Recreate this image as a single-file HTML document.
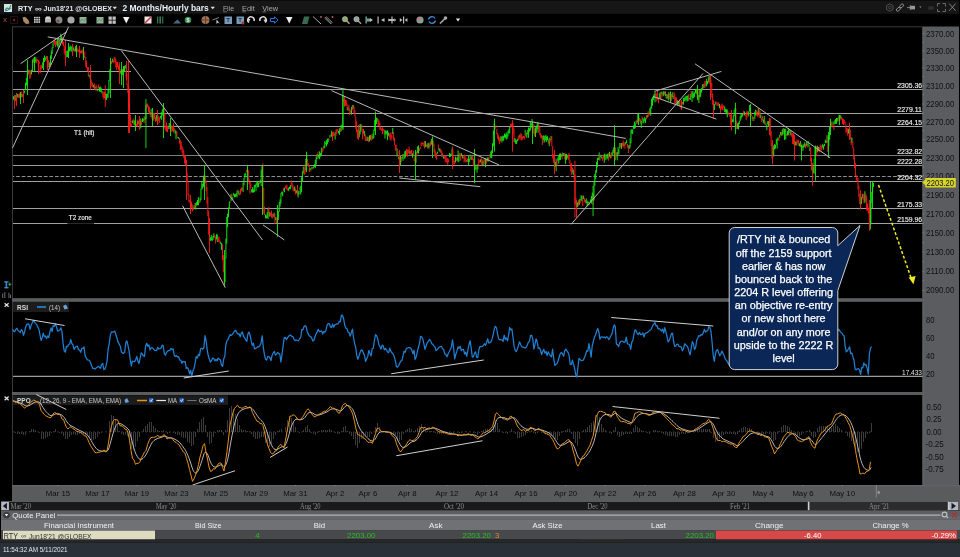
<!DOCTYPE html><html><head><meta charset="utf-8"><style>html,body{margin:0;padding:0;background:#000;width:960px;height:557px;overflow:hidden;position:relative}</style></head><body><svg width="960" height="557" viewBox="0 0 960 557" style="position:absolute;left:0;top:0;display:block;will-change:transform">
<rect x="0" y="0" width="960" height="557" fill="#000"/>
<rect x="0" y="0.5" width="959" height="13.3" fill="#161616"/>
<rect x="4" y="4" width="8" height="8" fill="#d8e0f0"/>
<polyline points="5,10 7,8 9,9 11,5" fill="none" stroke="#30a030" stroke-width="1.2"/>
<polyline points="5,11 8,10 11,8" fill="none" stroke="#3070d0" stroke-width="1"/>
<text x="18.1" y="10.88" font-family="Liberation Sans" font-size="8" fill="#e8eef8" text-anchor="start" font-weight="bold" textLength="14.4" lengthAdjust="spacingAndGlyphs">RTY</text>
<text x="35" y="10.74" font-family="Liberation Sans" font-size="6.5" fill="#e0e4ea" text-anchor="start" font-weight="bold" textLength="6.5" lengthAdjust="spacingAndGlyphs">∞</text>
<text x="43.5" y="10.78" font-family="Liberation Sans" font-size="6.6" fill="#e0e4ea" text-anchor="start" font-weight="bold" textLength="68.5" lengthAdjust="spacingAndGlyphs">Jun18'21 @GLOBEX</text>
<path d="M112.5,6.8 L117,6.8 L114.75,9.3 Z" fill="#e0e0e0"/>
<text x="122.5" y="11.06" font-family="Liberation Sans" font-size="8.5" fill="#e8eef8" text-anchor="start" font-weight="bold" textLength="86.3" lengthAdjust="spacingAndGlyphs">2 Months/Hourly bars</text>
<path d="M210.5,6.8 L215,6.8 L212.75,9.3 Z" fill="#e0e0e0"/>
<text x="222.9" y="10.96" font-family="Liberation Sans" font-size="7.4" fill="#a8a8a8" text-anchor="start" font-weight="normal" textLength="11.1" lengthAdjust="spacingAndGlyphs">File</text>
<text x="242" y="10.96" font-family="Liberation Sans" font-size="7.4" fill="#a8a8a8" text-anchor="start" font-weight="normal" textLength="12.8" lengthAdjust="spacingAndGlyphs">Edit</text>
<text x="262.3" y="10.96" font-family="Liberation Sans" font-size="7.4" fill="#a8a8a8" text-anchor="start" font-weight="normal" textLength="15.9" lengthAdjust="spacingAndGlyphs">View</text>
<line x1="223.2" y1="11.8" x2="226.79999999999998" y2="11.8" stroke="#a0a0a0" stroke-width="0.6"/>
<line x1="242.3" y1="11.8" x2="245.9" y2="11.8" stroke="#a0a0a0" stroke-width="0.6"/>
<line x1="262.6" y1="11.8" x2="266.20000000000005" y2="11.8" stroke="#a0a0a0" stroke-width="0.6"/>
<path d="M889.8,3.8 L893,5.6 L893,9.4 L889.8,11.2 L886.6,9.4 L886.6,5.6 Z" fill="none" stroke="#505050" stroke-width="1"/>
<circle cx="889.8" cy="7.5" r="1.3" fill="none" stroke="#505050" stroke-width="0.8"/>
<rect x="-2.2" y="-1.3" width="4.4" height="2.6" rx="1.3" transform="translate(898.3,9.3) rotate(-45)" fill="none" stroke="#9a9a9a" stroke-width="0.9"/>
<rect x="-2.2" y="-1.3" width="4.4" height="2.6" rx="1.3" transform="translate(901.6,5.9) rotate(-45)" fill="none" stroke="#9a9a9a" stroke-width="0.9"/>
<line x1="907" y1="7.6" x2="910.5" y2="7.6" stroke="#8a8a8a" stroke-width="0.9"/>
<rect x="910.5" y="5.8" width="4.5" height="3.6" fill="#9a9a9a"/>
<rect x="909.8" y="5.3" width="1" height="4.6" fill="#9a9a9a"/>
<path d="M919.2,6.6 L921.6,6.6 L920.4,8.1 Z" fill="#888"/>
<rect x="928.2" y="6.3" width="5.6" height="3.2" fill="#2e2e2e"/>
<path d="M937.5,6.5 V3.5 H940 M942.5,3.5 H945.5 V6.5 M945.5,9 V11.5 H942.5 M940,11.5 H937.5 V9" fill="none" stroke="#6a6a6a" stroke-width="1"/>
<path d="M949.2,3.6 L955.6,10.8 M955.6,3.6 L949.2,10.8" stroke="#8a8a8a" stroke-width="0.9"/>
<path d="M3.5,18 L6.5,22 M6.5,18 L3.5,22" stroke="#7a3838" stroke-width="1"/>
<rect x="10.5" y="16.5" width="7" height="7" fill="none" stroke="#5a2020" stroke-width="0.9" stroke-dasharray="1,1"/>
<circle cx="14" cy="20" r="1.2" fill="#6a2a2a"/>
<path d="M22.5,17.5 L25,16.8 L28.5,20 L29.5,23.5 L26,24 L23.5,21.5 Z" fill="#a88a62"/>
<rect x="34.0" y="16.8" width="1.7" height="1.7" fill="#c8c8c8"/>
<rect x="34.0" y="19.0" width="1.7" height="1.7" fill="#c8c8c8"/>
<rect x="34.0" y="21.200000000000003" width="1.7" height="1.7" fill="#c8c8c8"/>
<rect x="36.2" y="16.8" width="1.7" height="1.7" fill="#c8c8c8"/>
<rect x="36.2" y="19.0" width="1.7" height="1.7" fill="#c8c8c8"/>
<rect x="36.2" y="21.200000000000003" width="1.7" height="1.7" fill="#c8c8c8"/>
<rect x="38.4" y="16.8" width="1.7" height="1.7" fill="#c8c8c8"/>
<rect x="38.4" y="19.0" width="1.7" height="1.7" fill="#c8c8c8"/>
<rect x="38.4" y="21.200000000000003" width="1.7" height="1.7" fill="#c8c8c8"/>
<rect x="45" y="17.5" width="6" height="5" fill="#b8b8b8"/>
<rect x="46" y="16.5" width="4" height="2" fill="#ddd"/>
<circle cx="59" cy="20" r="3.5" fill="#8a8a8a"/>
<circle cx="58" cy="21" r="1.6" fill="#7a5040"/>
<circle cx="71" cy="20" r="3.6" fill="#a8a8a8"/>
<rect x="79.5" y="17" width="7" height="6.5" fill="#9aa8a0"/>
<polyline points="80,22 82,19 84,21 86,18" stroke="#40b040" fill="none" stroke-width="1"/>
<rect x="96.5" y="17" width="7" height="6.5" fill="#9aa8a0"/>
<polyline points="97,22 99,19 101,21 103,18" stroke="#40b040" fill="none" stroke-width="1"/>
<rect x="108.5" y="16.5" width="3.3" height="3.3" fill="#c0c0c0"/>
<rect x="108.5" y="20.5" width="3.3" height="3.3" fill="#c0c0c0"/>
<rect x="112.5" y="16.5" width="3.3" height="3.3" fill="#c0c0c0"/>
<rect x="112.5" y="20.5" width="3.3" height="3.3" fill="#c0c0c0"/>
<path d="M123,17 L129.5,17 L126.25,23.5 Z" fill="#f0f0f0"/>
<rect x="144.5" y="16.5" width="7" height="7" fill="#e8e8e8"/>
<path d="M145,23 L151,17" stroke="#d03030" stroke-width="1.4"/>
<rect x="157" y="16.5" width="1.3" height="7" fill="#2a7a48"/>
<rect x="159.5" y="16.5" width="1.3" height="7" fill="#4a9a68"/>
<rect x="162" y="16.5" width="1.3" height="7" fill="#2a6a48"/>
<path d="M173,23.5 L177.5,19.5 L181,23.5 Z" fill="#4a6888"/>
<circle cx="188" cy="20" r="3.3" fill="#3a8a58"/>
<text x="188" y="22.18" font-family="Liberation Sans" font-size="5.5" fill="#e0f0e0" text-anchor="middle" font-weight="bold">$</text>
<circle cx="205.5" cy="20" r="4" fill="#a07050"/>
<line x1="201.5" y1="20" x2="209.5" y2="20" stroke="#5a3a2a" stroke-width="0.8"/>
<line x1="205.5" y1="16" x2="205.5" y2="24" stroke="#5a3a2a" stroke-width="0.8"/>
<path d="M212.5,20 L219,17.5" stroke="#aaa" stroke-width="0.8"/>
<path d="M216.5,19.5 L216.5,24 L218,22.5 L220,24 Z" fill="#ddd"/>
<rect x="224.5" y="16.5" width="7.5" height="7.5" fill="#7898b8"/>
<text x="228.2" y="22.46" font-family="Liberation Sans" font-size="6" fill="#203040" text-anchor="middle" font-weight="bold">T</text>
<rect x="236.5" y="16.5" width="7.5" height="7.5" fill="#7898b8"/>
<text x="240.2" y="22.46" font-family="Liberation Sans" font-size="6" fill="#203040" text-anchor="middle" font-weight="bold">T</text>
<circle cx="243" cy="23" r="1.5" fill="#c03030"/>
<path d="M249,22.5 A3.2,3.2 0 1 1 254,21" fill="none" stroke="#ddd" stroke-width="1.5"/>
<path d="M247.5,19 L250.5,19 L249,21.5 Z" fill="#ddd"/>
<path d="M265,22.5 A3.2,3.2 0 1 0 260,21" fill="none" stroke="#ddd" stroke-width="1.5"/>
<path d="M263.5,19.5 L266.5,19.5 L265,22 Z" fill="#ddd"/>
<path d="M270.5,18.5 H274.5 V16.8 L278,20 L274.5,23.2 V21.5 H270.5 Z" fill="none" stroke="#2a78d8" stroke-width="1"/>
<path d="M286,17 L292.5,17 L289.25,23.5 Z" fill="#f0f0f0"/>
<path d="M302,24 L304,16.5 L309.5,16.5 L307.5,24 Z" fill="#3a6a50"/>
<path d="M313,16.5 L321,24" stroke="#aaa" stroke-width="1"/>
<circle cx="321" cy="17" r="0.9" fill="#d06060"/>
<path d="M324.5,18 L331,24 M326,16.5 L332.5,22.5 M325,17 L332,23.5" stroke="#8a8a8a" stroke-width="0.9"/>
<circle cx="332.5" cy="17" r="0.9" fill="#d06060"/>
<circle cx="345" cy="19.2" r="2.6" fill="#90a860" stroke="#ccc" stroke-width="0.6"/>
<line x1="346.8" y1="21" x2="349.5" y2="23.8" stroke="#c0a080" stroke-width="1.4"/>
<circle cx="356.5" cy="19.2" r="2.6" fill="#90a0a0" stroke="#ccc" stroke-width="0.6"/>
<line x1="358.3" y1="21" x2="361" y2="23.8" stroke="#c0a080" stroke-width="1.4"/>
<rect x="365.5" y="16.5" width="1.3" height="7" fill="#8aa"/>
<rect x="367" y="18.5" width="3" height="3" fill="#6a8"/>
<path d="M370,18 L373,20 L370,22 Z" fill="#bbb"/>
<rect x="377.5" y="16.5" width="1.2" height="7" fill="#bbb"/>
<path d="M384.5,18 L381,20 L384.5,22 Z" fill="#bbb"/>
<rect x="391.4" y="16.5" width="1.2" height="7" fill="#bbb"/>
<path d="M389,18 L388,20 L389,22 Z M394.5,18 L396,20 L394.5,22 Z" fill="#bbb"/>
<rect x="389" y="19" width="5.5" height="2" fill="#bbb"/>
<rect x="403" y="16.5" width="1.2" height="7" fill="#bbb"/>
<path d="M399.8,18 L402.5,20 L399.8,22 Z M407.4,18 L404.7,20 L407.4,22 Z" fill="#bbb"/>
<circle cx="420" cy="20" r="3.6" fill="#8a9aa0"/>
<circle cx="419" cy="19" r="1.6" fill="#d07070"/>
<circle cx="421.5" cy="21.3" r="1.4" fill="#70b070"/>
<path d="M428.5,19.5 A3.5,3.5 0 0 1 435,18.5 M435.5,20.5 A3.5,3.5 0 0 1 429,21.5" fill="none" stroke="#3a8ad8" stroke-width="1.4"/>
<path d="M440,23.5 L445,18.5" stroke="#aaa" stroke-width="1.6"/>
<circle cx="445.5" cy="18" r="1.8" fill="#aaa"/>
<path d="M455.8,18.5 L460.2,18.5 L458,21.5 Z" fill="#e8e8e8"/>
<rect x="922.5" y="26.5" width="36.5" height="459" fill="#5b5c5f"/>
<line x1="923" y1="27" x2="923" y2="485" stroke="#656668" stroke-width="1"/>
<line x1="12" y1="26.8" x2="922.5" y2="26.8" stroke="#3a3a3a" stroke-width="1"/>
<line x1="12.5" y1="26.5" x2="12.5" y2="485.5" stroke="#3a3a3a" stroke-width="1"/>
<rect x="12" y="298" width="911" height="4" fill="#48494b"/>
<rect x="12" y="298.8" width="911" height="2.4" fill="#5c5d60"/>
<rect x="12" y="392" width="911" height="3" fill="#5b5c5f"/>
<line x1="13" y1="89.5" x2="922.5" y2="89.5" stroke="#a0a0a0" stroke-width="1"/>
<line x1="13" y1="113.5" x2="922.5" y2="113.5" stroke="#a0a0a0" stroke-width="1"/>
<line x1="13" y1="126.5" x2="922.5" y2="126.5" stroke="#a0a0a0" stroke-width="1"/>
<line x1="13" y1="155.5" x2="922.5" y2="155.5" stroke="#7c7c7c" stroke-width="1"/>
<line x1="13" y1="165.5" x2="922.5" y2="165.5" stroke="#9a9a9a" stroke-width="1"/>
<line x1="13" y1="181.5" x2="922.5" y2="181.5" stroke="#a0a0a0" stroke-width="1"/>
<line x1="13" y1="208.5" x2="922.5" y2="208.5" stroke="#a0a0a0" stroke-width="1"/>
<line x1="13" y1="223.5" x2="922.5" y2="223.5" stroke="#a0a0a0" stroke-width="1"/>
<line x1="13" y1="71.5" x2="131" y2="71.5" stroke="#a0a0a0" stroke-width="1"/>
<line x1="13" y1="176.5" x2="922.5" y2="176.5" stroke="#909090" stroke-width="1" stroke-dasharray="3.7,1.85" stroke-dashoffset="2.4"/>
<g><rect x="13.00" y="96.2" width="0.95" height="3.5" fill="#10f010"/><rect x="13.86" y="95.7" width="0.95" height="3.4" fill="#ff1a1a"/><rect x="14.72" y="95.1" width="0.95" height="5.9" fill="#10f010"/><rect x="15.58" y="96.8" width="0.95" height="4.6" fill="#ff1a1a"/><rect x="16.44" y="93.6" width="0.95" height="3.0" fill="#10f010"/><rect x="17.30" y="94.0" width="0.95" height="3.8" fill="#10f010"/><rect x="18.16" y="94.4" width="0.95" height="2.9" fill="#ff1a1a"/><rect x="19.02" y="93.5" width="0.95" height="4.4" fill="#ff1a1a"/><rect x="19.88" y="92.5" width="0.95" height="7.1" fill="#10f010"/><rect x="20.74" y="91.5" width="0.95" height="5.7" fill="#ff1a1a"/><rect x="21.60" y="93.8" width="0.95" height="3.4" fill="#10f010"/><rect x="22.46" y="94.2" width="0.95" height="2.6" fill="#ff1a1a"/><rect x="23.32" y="91.9" width="0.95" height="2.0" fill="#10f010"/><rect x="24.18" y="90.6" width="0.95" height="2.2" fill="#10f010"/><rect x="25.04" y="82.7" width="0.95" height="7.5" fill="#10f010"/><rect x="25.90" y="78.0" width="0.95" height="7.6" fill="#10f010"/><rect x="26.76" y="73.2" width="0.95" height="6.0" fill="#10f010"/><rect x="27.62" y="69.7" width="0.95" height="4.8" fill="#10f010"/><rect x="28.48" y="69.8" width="0.95" height="3.2" fill="#ff1a1a"/><rect x="29.34" y="70.0" width="0.95" height="8.9" fill="#ff1a1a"/><rect x="30.20" y="70.9" width="0.95" height="6.6" fill="#ff1a1a"/><rect x="31.06" y="69.8" width="0.95" height="4.7" fill="#10f010"/><rect x="31.92" y="59.6" width="0.95" height="11.8" fill="#10f010"/><rect x="32.78" y="58.2" width="0.95" height="4.3" fill="#10f010"/><rect x="33.64" y="57.5" width="0.95" height="8.6" fill="#ff1a1a"/><rect x="34.50" y="59.4" width="0.95" height="3.8" fill="#10f010"/><rect x="35.36" y="56.9" width="0.95" height="4.7" fill="#10f010"/><rect x="36.22" y="58.9" width="0.95" height="4.3" fill="#ff1a1a"/><rect x="37.08" y="59.4" width="0.95" height="1.6" fill="#ff1a1a"/><rect x="37.94" y="61.0" width="0.95" height="6.1" fill="#ff1a1a"/><rect x="38.80" y="61.5" width="0.95" height="2.4" fill="#ff1a1a"/><rect x="39.66" y="65.0" width="0.95" height="7.9" fill="#ff1a1a"/><rect x="40.52" y="66.1" width="0.95" height="4.0" fill="#ff1a1a"/><rect x="41.38" y="64.6" width="0.95" height="4.3" fill="#ff1a1a"/><rect x="42.24" y="62.2" width="0.95" height="5.9" fill="#10f010"/><rect x="43.10" y="60.6" width="0.95" height="4.6" fill="#ff1a1a"/><rect x="43.96" y="55.6" width="0.95" height="6.5" fill="#10f010"/><rect x="44.82" y="57.7" width="0.95" height="2.8" fill="#10f010"/><rect x="45.68" y="56.3" width="0.95" height="2.6" fill="#10f010"/><rect x="46.54" y="56.2" width="0.95" height="6.2" fill="#ff1a1a"/><rect x="47.40" y="60.6" width="0.95" height="8.3" fill="#ff1a1a"/><rect x="48.26" y="60.0" width="0.95" height="7.0" fill="#ff1a1a"/><rect x="49.12" y="62.4" width="0.95" height="4.8" fill="#10f010"/><rect x="49.98" y="55.4" width="0.95" height="9.5" fill="#10f010"/><rect x="50.84" y="50.5" width="0.95" height="8.5" fill="#10f010"/><rect x="51.70" y="47.3" width="0.95" height="6.6" fill="#10f010"/><rect x="52.56" y="42.2" width="0.95" height="5.8" fill="#10f010"/><rect x="53.42" y="39.8" width="0.95" height="3.2" fill="#ff1a1a"/><rect x="54.28" y="39.5" width="0.95" height="5.4" fill="#ff1a1a"/><rect x="55.14" y="40.9" width="0.95" height="6.3" fill="#ff1a1a"/><rect x="56.00" y="41.0" width="0.95" height="3.9" fill="#ff1a1a"/><rect x="56.86" y="38.2" width="0.95" height="8.3" fill="#10f010"/><rect x="57.72" y="38.7" width="0.95" height="9.2" fill="#10f010"/><rect x="58.58" y="40.0" width="0.95" height="4.0" fill="#ff1a1a"/><rect x="59.44" y="39.8" width="0.95" height="5.9" fill="#10f010"/><rect x="60.30" y="33.8" width="0.95" height="6.9" fill="#10f010"/><rect x="61.16" y="36.2" width="0.95" height="6.4" fill="#10f010"/><rect x="62.02" y="37.3" width="0.95" height="7.2" fill="#ff1a1a"/><rect x="62.88" y="41.5" width="0.95" height="4.5" fill="#ff1a1a"/><rect x="63.74" y="45.5" width="0.95" height="8.3" fill="#ff1a1a"/><rect x="64.60" y="48.6" width="0.95" height="6.9" fill="#ff1a1a"/><rect x="65.46" y="54.4" width="0.95" height="3.2" fill="#ff1a1a"/><rect x="66.32" y="50.7" width="0.95" height="6.2" fill="#10f010"/><rect x="67.18" y="50.6" width="0.95" height="6.4" fill="#10f010"/><rect x="68.04" y="45.3" width="0.95" height="6.3" fill="#ff1a1a"/><rect x="68.90" y="46.9" width="0.95" height="4.6" fill="#10f010"/><rect x="69.76" y="45.5" width="0.95" height="5.1" fill="#10f010"/><rect x="70.62" y="46.8" width="0.95" height="4.3" fill="#10f010"/><rect x="71.48" y="46.1" width="0.95" height="5.9" fill="#10f010"/><rect x="72.34" y="45.6" width="0.95" height="1.7" fill="#ff1a1a"/><rect x="73.20" y="47.5" width="0.95" height="3.3" fill="#10f010"/><rect x="74.06" y="49.0" width="0.95" height="2.6" fill="#ff1a1a"/><rect x="74.92" y="46.2" width="0.95" height="5.2" fill="#10f010"/><rect x="75.78" y="48.1" width="0.95" height="4.1" fill="#10f010"/><rect x="76.64" y="47.5" width="0.95" height="4.0" fill="#ff1a1a"/><rect x="77.50" y="49.7" width="0.95" height="2.4" fill="#ff1a1a"/><rect x="78.36" y="49.4" width="0.95" height="2.7" fill="#ff1a1a"/><rect x="79.22" y="47.8" width="0.95" height="3.9" fill="#ff1a1a"/><rect x="80.08" y="50.8" width="0.95" height="2.9" fill="#ff1a1a"/><rect x="80.94" y="49.9" width="0.95" height="3.4" fill="#ff1a1a"/><rect x="81.80" y="50.2" width="0.95" height="3.1" fill="#ff1a1a"/><rect x="82.66" y="48.3" width="0.95" height="7.2" fill="#ff1a1a"/><rect x="83.52" y="56.1" width="0.95" height="1.8" fill="#10f010"/><rect x="84.38" y="51.6" width="0.95" height="5.5" fill="#ff1a1a"/><rect x="85.24" y="57.0" width="0.95" height="10.0" fill="#ff1a1a"/><rect x="86.10" y="60.7" width="0.95" height="7.5" fill="#ff1a1a"/><rect x="86.96" y="67.2" width="0.95" height="3.9" fill="#ff1a1a"/><rect x="87.82" y="66.8" width="0.95" height="9.0" fill="#ff1a1a"/><rect x="88.68" y="74.8" width="0.95" height="2.3" fill="#10f010"/><rect x="89.54" y="76.2" width="0.95" height="2.9" fill="#ff1a1a"/><rect x="90.40" y="79.3" width="0.95" height="3.5" fill="#10f010"/><rect x="91.26" y="81.4" width="0.95" height="4.8" fill="#ff1a1a"/><rect x="92.12" y="82.7" width="0.95" height="4.6" fill="#ff1a1a"/><rect x="92.98" y="84.9" width="0.95" height="2.6" fill="#10f010"/><rect x="93.84" y="83.2" width="0.95" height="6.3" fill="#ff1a1a"/><rect x="94.70" y="86.8" width="0.95" height="1.7" fill="#10f010"/><rect x="95.56" y="84.4" width="0.95" height="6.8" fill="#ff1a1a"/><rect x="96.42" y="85.8" width="0.95" height="2.7" fill="#ff1a1a"/><rect x="97.28" y="88.8" width="0.95" height="2.5" fill="#10f010"/><rect x="98.14" y="84.6" width="0.95" height="4.0" fill="#ff1a1a"/><rect x="99.00" y="87.2" width="0.95" height="4.3" fill="#10f010"/><rect x="99.86" y="86.5" width="0.95" height="5.3" fill="#10f010"/><rect x="100.72" y="87.7" width="0.95" height="4.4" fill="#10f010"/><rect x="101.58" y="91.0" width="0.95" height="2.7" fill="#10f010"/><rect x="102.44" y="93.1" width="0.95" height="4.0" fill="#ff1a1a"/><rect x="103.30" y="91.4" width="0.95" height="7.9" fill="#ff1a1a"/><rect x="104.16" y="91.5" width="0.95" height="6.6" fill="#ff1a1a"/><rect x="105.02" y="93.8" width="0.95" height="5.6" fill="#10f010"/><rect x="105.88" y="93.8" width="0.95" height="6.3" fill="#10f010"/><rect x="106.74" y="93.6" width="0.95" height="4.1" fill="#10f010"/><rect x="107.60" y="88.6" width="0.95" height="9.3" fill="#10f010"/><rect x="108.46" y="79.9" width="0.95" height="13.4" fill="#10f010"/><rect x="109.32" y="69.4" width="0.95" height="11.4" fill="#10f010"/><rect x="110.18" y="60.9" width="0.95" height="10.2" fill="#10f010"/><rect x="111.04" y="61.2" width="0.95" height="3.0" fill="#ff1a1a"/><rect x="111.90" y="58.7" width="0.95" height="3.3" fill="#10f010"/><rect x="112.76" y="60.0" width="0.95" height="3.2" fill="#ff1a1a"/><rect x="113.62" y="56.7" width="0.95" height="5.6" fill="#ff1a1a"/><rect x="114.48" y="57.2" width="0.95" height="5.7" fill="#ff1a1a"/><rect x="115.34" y="58.5" width="0.95" height="8.9" fill="#ff1a1a"/><rect x="116.20" y="61.7" width="0.95" height="8.4" fill="#ff1a1a"/><rect x="117.06" y="62.0" width="0.95" height="5.2" fill="#ff1a1a"/><rect x="117.92" y="65.7" width="0.95" height="4.1" fill="#ff1a1a"/><rect x="118.78" y="62.2" width="0.95" height="8.5" fill="#ff1a1a"/><rect x="119.64" y="69.1" width="0.95" height="4.4" fill="#ff1a1a"/><rect x="120.50" y="71.2" width="0.95" height="2.7" fill="#10f010"/><rect x="121.36" y="69.2" width="0.95" height="8.3" fill="#ff1a1a"/><rect x="122.22" y="69.1" width="0.95" height="6.0" fill="#10f010"/><rect x="123.08" y="67.3" width="0.95" height="5.4" fill="#10f010"/><rect x="123.94" y="66.1" width="0.95" height="5.9" fill="#10f010"/><rect x="124.80" y="65.0" width="0.95" height="3.3" fill="#10f010"/><rect x="125.66" y="68.0" width="0.95" height="10.0" fill="#ff1a1a"/><rect x="126.52" y="73.7" width="0.95" height="11.5" fill="#ff1a1a"/><rect x="127.38" y="83.9" width="0.95" height="9.0" fill="#ff1a1a"/><rect x="128.24" y="86.1" width="0.95" height="20.9" fill="#ff1a1a"/><rect x="129.10" y="102.5" width="0.95" height="16.5" fill="#ff1a1a"/><rect x="129.96" y="115.0" width="0.95" height="11.9" fill="#ff1a1a"/><rect x="130.82" y="123.8" width="0.95" height="2.7" fill="#ff1a1a"/><rect x="131.68" y="120.7" width="0.95" height="2.5" fill="#10f010"/><rect x="132.54" y="119.8" width="0.95" height="3.4" fill="#10f010"/><rect x="133.40" y="118.3" width="0.95" height="6.5" fill="#ff1a1a"/><rect x="134.26" y="120.5" width="0.95" height="4.8" fill="#10f010"/><rect x="135.12" y="121.2" width="0.95" height="5.2" fill="#ff1a1a"/><rect x="135.98" y="123.7" width="0.95" height="2.3" fill="#ff1a1a"/><rect x="136.84" y="119.6" width="0.95" height="7.1" fill="#ff1a1a"/><rect x="137.70" y="121.1" width="0.95" height="3.0" fill="#10f010"/><rect x="138.56" y="120.1" width="0.95" height="4.7" fill="#ff1a1a"/><rect x="139.42" y="122.6" width="0.95" height="3.6" fill="#ff1a1a"/><rect x="140.28" y="118.5" width="0.95" height="10.0" fill="#10f010"/><rect x="141.14" y="120.3" width="0.95" height="4.8" fill="#ff1a1a"/><rect x="142.00" y="118.2" width="0.95" height="3.8" fill="#10f010"/><rect x="142.86" y="118.6" width="0.95" height="2.8" fill="#10f010"/><rect x="143.72" y="115.9" width="0.95" height="7.2" fill="#ff1a1a"/><rect x="144.58" y="117.3" width="0.95" height="2.9" fill="#10f010"/><rect x="145.44" y="105.1" width="0.95" height="14.0" fill="#10f010"/><rect x="146.30" y="104.0" width="0.95" height="4.9" fill="#ff1a1a"/><rect x="147.16" y="103.5" width="0.95" height="3.5" fill="#ff1a1a"/><rect x="148.02" y="105.6" width="0.95" height="6.7" fill="#ff1a1a"/><rect x="148.88" y="106.8" width="0.95" height="7.0" fill="#ff1a1a"/><rect x="149.74" y="112.0" width="0.95" height="2.9" fill="#ff1a1a"/><rect x="150.60" y="108.8" width="0.95" height="8.3" fill="#10f010"/><rect x="151.46" y="111.6" width="0.95" height="7.0" fill="#ff1a1a"/><rect x="152.32" y="113.6" width="0.95" height="6.6" fill="#10f010"/><rect x="153.18" y="112.6" width="0.95" height="8.1" fill="#ff1a1a"/><rect x="154.04" y="113.3" width="0.95" height="5.3" fill="#ff1a1a"/><rect x="154.90" y="117.3" width="0.95" height="4.7" fill="#ff1a1a"/><rect x="155.76" y="115.0" width="0.95" height="5.9" fill="#10f010"/><rect x="156.62" y="115.2" width="0.95" height="3.1" fill="#10f010"/><rect x="157.48" y="117.6" width="0.95" height="6.4" fill="#ff1a1a"/><rect x="158.34" y="115.8" width="0.95" height="4.7" fill="#ff1a1a"/><rect x="159.20" y="117.2" width="0.95" height="5.5" fill="#ff1a1a"/><rect x="160.06" y="116.1" width="0.95" height="2.2" fill="#10f010"/><rect x="160.92" y="112.2" width="0.95" height="7.6" fill="#10f010"/><rect x="161.78" y="109.6" width="0.95" height="6.2" fill="#10f010"/><rect x="162.64" y="108.5" width="0.95" height="3.8" fill="#10f010"/><rect x="163.50" y="109.1" width="0.95" height="12.6" fill="#ff1a1a"/><rect x="164.36" y="113.7" width="0.95" height="15.0" fill="#ff1a1a"/><rect x="165.22" y="125.7" width="0.95" height="5.0" fill="#ff1a1a"/><rect x="166.08" y="122.4" width="0.95" height="9.5" fill="#ff1a1a"/><rect x="166.94" y="125.6" width="0.95" height="6.5" fill="#ff1a1a"/><rect x="167.80" y="126.7" width="0.95" height="2.7" fill="#ff1a1a"/><rect x="168.66" y="123.3" width="0.95" height="5.7" fill="#10f010"/><rect x="169.52" y="123.0" width="0.95" height="2.7" fill="#10f010"/><rect x="170.38" y="124.8" width="0.95" height="4.1" fill="#10f010"/><rect x="171.24" y="125.8" width="0.95" height="6.0" fill="#ff1a1a"/><rect x="172.10" y="126.0" width="0.95" height="5.0" fill="#ff1a1a"/><rect x="172.96" y="123.2" width="0.95" height="9.5" fill="#ff1a1a"/><rect x="173.82" y="128.4" width="0.95" height="2.9" fill="#ff1a1a"/><rect x="174.68" y="129.8" width="0.95" height="4.0" fill="#10f010"/><rect x="175.54" y="131.0" width="0.95" height="8.2" fill="#10f010"/><rect x="176.40" y="131.2" width="0.95" height="5.2" fill="#ff1a1a"/><rect x="177.26" y="136.7" width="0.95" height="1.2" fill="#10f010"/><rect x="178.12" y="137.1" width="0.95" height="1.7" fill="#10f010"/><rect x="178.98" y="137.9" width="0.95" height="5.7" fill="#ff1a1a"/><rect x="179.84" y="139.8" width="0.95" height="10.2" fill="#ff1a1a"/><rect x="180.70" y="141.6" width="0.95" height="7.9" fill="#ff1a1a"/><rect x="181.56" y="146.0" width="0.95" height="6.3" fill="#ff1a1a"/><rect x="182.42" y="147.6" width="0.95" height="7.7" fill="#ff1a1a"/><rect x="183.28" y="150.2" width="0.95" height="7.8" fill="#ff1a1a"/><rect x="184.14" y="154.9" width="0.95" height="8.6" fill="#ff1a1a"/><rect x="185.00" y="155.4" width="0.95" height="9.7" fill="#ff1a1a"/><rect x="185.86" y="164.7" width="0.95" height="8.5" fill="#ff1a1a"/><rect x="186.72" y="172.5" width="0.95" height="10.0" fill="#ff1a1a"/><rect x="187.58" y="181.9" width="0.95" height="13.5" fill="#ff1a1a"/><rect x="188.44" y="193.9" width="0.95" height="8.0" fill="#ff1a1a"/><rect x="189.30" y="200.2" width="0.95" height="2.7" fill="#ff1a1a"/><rect x="190.16" y="201.3" width="0.95" height="10.5" fill="#ff1a1a"/><rect x="191.02" y="201.6" width="0.95" height="6.2" fill="#ff1a1a"/><rect x="191.88" y="204.5" width="0.95" height="7.0" fill="#ff1a1a"/><rect x="192.74" y="207.3" width="0.95" height="2.8" fill="#ff1a1a"/><rect x="193.60" y="205.3" width="0.95" height="3.2" fill="#10f010"/><rect x="194.46" y="203.1" width="0.95" height="4.5" fill="#ff1a1a"/><rect x="195.32" y="202.9" width="0.95" height="6.7" fill="#10f010"/><rect x="196.18" y="202.0" width="0.95" height="3.5" fill="#10f010"/><rect x="197.04" y="199.9" width="0.95" height="5.3" fill="#10f010"/><rect x="197.90" y="197.1" width="0.95" height="8.2" fill="#10f010"/><rect x="198.76" y="201.3" width="0.95" height="1.8" fill="#ff1a1a"/><rect x="199.62" y="197.9" width="0.95" height="4.0" fill="#10f010"/><rect x="200.48" y="188.6" width="0.95" height="11.4" fill="#10f010"/><rect x="201.34" y="181.9" width="0.95" height="7.8" fill="#10f010"/><rect x="202.20" y="184.0" width="0.95" height="4.5" fill="#10f010"/><rect x="203.06" y="175.6" width="0.95" height="11.2" fill="#10f010"/><rect x="203.92" y="175.4" width="0.95" height="6.3" fill="#10f010"/><rect x="204.78" y="175.8" width="0.95" height="7.5" fill="#ff1a1a"/><rect x="205.64" y="180.3" width="0.95" height="10.9" fill="#ff1a1a"/><rect x="206.50" y="186.7" width="0.95" height="17.2" fill="#ff1a1a"/><rect x="207.36" y="197.0" width="0.95" height="19.2" fill="#ff1a1a"/><rect x="208.22" y="211.0" width="0.95" height="23.7" fill="#ff1a1a"/><rect x="209.08" y="231.0" width="0.95" height="8.5" fill="#ff1a1a"/><rect x="209.94" y="237.4" width="0.95" height="3.5" fill="#10f010"/><rect x="210.80" y="234.9" width="0.95" height="5.3" fill="#10f010"/><rect x="211.66" y="237.5" width="0.95" height="3.8" fill="#10f010"/><rect x="212.52" y="236.0" width="0.95" height="4.0" fill="#10f010"/><rect x="213.38" y="233.3" width="0.95" height="4.5" fill="#10f010"/><rect x="214.24" y="235.1" width="0.95" height="2.5" fill="#ff1a1a"/><rect x="215.10" y="236.6" width="0.95" height="6.9" fill="#ff1a1a"/><rect x="215.96" y="234.2" width="0.95" height="5.2" fill="#10f010"/><rect x="216.82" y="234.5" width="0.95" height="7.5" fill="#10f010"/><rect x="217.68" y="236.7" width="0.95" height="5.4" fill="#ff1a1a"/><rect x="218.54" y="236.7" width="0.95" height="5.0" fill="#ff1a1a"/><rect x="219.40" y="240.4" width="0.95" height="2.5" fill="#ff1a1a"/><rect x="220.26" y="241.8" width="0.95" height="2.4" fill="#10f010"/><rect x="221.12" y="243.1" width="0.95" height="6.8" fill="#10f010"/><rect x="221.98" y="244.3" width="0.95" height="15.9" fill="#ff1a1a"/><rect x="222.84" y="255.1" width="0.95" height="17.0" fill="#ff1a1a"/><rect x="223.70" y="265.4" width="0.95" height="18.5" fill="#ff1a1a"/><rect x="224.56" y="257.5" width="0.95" height="24.4" fill="#10f010"/><rect x="225.42" y="238.6" width="0.95" height="19.9" fill="#10f010"/><rect x="226.28" y="216.9" width="0.95" height="26.8" fill="#10f010"/><rect x="227.14" y="213.6" width="0.95" height="13.6" fill="#10f010"/><rect x="228.00" y="207.4" width="0.95" height="9.8" fill="#10f010"/><rect x="228.86" y="201.3" width="0.95" height="7.5" fill="#10f010"/><rect x="229.72" y="201.6" width="0.95" height="1.2" fill="#ff1a1a"/><rect x="230.58" y="193.8" width="0.95" height="7.3" fill="#10f010"/><rect x="231.44" y="194.2" width="0.95" height="4.7" fill="#ff1a1a"/><rect x="232.30" y="197.2" width="0.95" height="2.4" fill="#10f010"/><rect x="233.16" y="192.9" width="0.95" height="2.8" fill="#10f010"/><rect x="234.02" y="194.2" width="0.95" height="3.1" fill="#10f010"/><rect x="234.88" y="194.1" width="0.95" height="3.0" fill="#10f010"/><rect x="235.74" y="193.1" width="0.95" height="3.3" fill="#10f010"/><rect x="236.60" y="190.5" width="0.95" height="6.9" fill="#10f010"/><rect x="237.46" y="189.8" width="0.95" height="3.2" fill="#ff1a1a"/><rect x="238.32" y="190.7" width="0.95" height="3.9" fill="#10f010"/><rect x="239.18" y="193.0" width="0.95" height="2.3" fill="#ff1a1a"/><rect x="240.04" y="188.8" width="0.95" height="5.6" fill="#ff1a1a"/><rect x="240.90" y="187.4" width="0.95" height="4.0" fill="#ff1a1a"/><rect x="241.76" y="187.6" width="0.95" height="2.9" fill="#ff1a1a"/><rect x="242.62" y="182.7" width="0.95" height="9.4" fill="#10f010"/><rect x="243.48" y="177.9" width="0.95" height="7.4" fill="#10f010"/><rect x="244.34" y="173.5" width="0.95" height="4.9" fill="#10f010"/><rect x="245.20" y="172.9" width="0.95" height="2.7" fill="#10f010"/><rect x="246.06" y="169.9" width="0.95" height="2.5" fill="#ff1a1a"/><rect x="246.92" y="167.0" width="0.95" height="5.2" fill="#ff1a1a"/><rect x="247.78" y="169.9" width="0.95" height="11.3" fill="#ff1a1a"/><rect x="248.64" y="179.3" width="0.95" height="4.9" fill="#ff1a1a"/><rect x="249.50" y="182.0" width="0.95" height="11.6" fill="#ff1a1a"/><rect x="250.36" y="183.4" width="0.95" height="4.9" fill="#ff1a1a"/><rect x="251.22" y="189.2" width="0.95" height="3.2" fill="#10f010"/><rect x="252.08" y="187.2" width="0.95" height="5.4" fill="#10f010"/><rect x="252.94" y="189.3" width="0.95" height="3.2" fill="#10f010"/><rect x="253.80" y="184.9" width="0.95" height="7.3" fill="#10f010"/><rect x="254.66" y="184.8" width="0.95" height="2.8" fill="#10f010"/><rect x="255.52" y="183.6" width="0.95" height="7.6" fill="#10f010"/><rect x="256.38" y="181.0" width="0.95" height="4.3" fill="#10f010"/><rect x="257.24" y="181.7" width="0.95" height="5.8" fill="#10f010"/><rect x="258.10" y="182.6" width="0.95" height="4.3" fill="#10f010"/><rect x="258.96" y="181.5" width="0.95" height="2.4" fill="#ff1a1a"/><rect x="259.82" y="179.7" width="0.95" height="3.3" fill="#10f010"/><rect x="260.68" y="169.8" width="0.95" height="16.3" fill="#10f010"/><rect x="261.54" y="165.1" width="0.95" height="10.9" fill="#10f010"/><rect x="262.40" y="163.4" width="0.95" height="36.0" fill="#ff1a1a"/><rect x="263.26" y="187.9" width="0.95" height="25.9" fill="#ff1a1a"/><rect x="264.12" y="206.5" width="0.95" height="8.4" fill="#ff1a1a"/><rect x="264.98" y="214.5" width="0.95" height="3.8" fill="#10f010"/><rect x="265.84" y="215.4" width="0.95" height="3.1" fill="#10f010"/><rect x="266.70" y="212.2" width="0.95" height="5.8" fill="#10f010"/><rect x="267.56" y="209.1" width="0.95" height="10.0" fill="#10f010"/><rect x="268.42" y="206.9" width="0.95" height="9.2" fill="#ff1a1a"/><rect x="269.28" y="212.0" width="0.95" height="4.8" fill="#10f010"/><rect x="270.14" y="212.8" width="0.95" height="3.1" fill="#ff1a1a"/><rect x="271.00" y="210.6" width="0.95" height="7.0" fill="#ff1a1a"/><rect x="271.86" y="213.7" width="0.95" height="4.7" fill="#ff1a1a"/><rect x="272.72" y="214.0" width="0.95" height="2.6" fill="#ff1a1a"/><rect x="273.58" y="212.7" width="0.95" height="4.4" fill="#10f010"/><rect x="274.44" y="213.4" width="0.95" height="10.8" fill="#ff1a1a"/><rect x="275.30" y="217.2" width="0.95" height="2.8" fill="#10f010"/><rect x="276.16" y="217.5" width="0.95" height="5.5" fill="#ff1a1a"/><rect x="277.02" y="219.3" width="0.95" height="4.8" fill="#10f010"/><rect x="277.88" y="211.3" width="0.95" height="8.5" fill="#10f010"/><rect x="278.74" y="201.9" width="0.95" height="9.9" fill="#10f010"/><rect x="279.60" y="199.3" width="0.95" height="7.3" fill="#10f010"/><rect x="280.46" y="193.2" width="0.95" height="10.3" fill="#10f010"/><rect x="281.32" y="191.6" width="0.95" height="2.4" fill="#10f010"/><rect x="282.18" y="191.5" width="0.95" height="4.8" fill="#10f010"/><rect x="283.04" y="188.2" width="0.95" height="3.0" fill="#ff1a1a"/><rect x="283.90" y="187.7" width="0.95" height="4.6" fill="#10f010"/><rect x="284.76" y="185.4" width="0.95" height="2.7" fill="#ff1a1a"/><rect x="285.62" y="186.0" width="0.95" height="3.3" fill="#ff1a1a"/><rect x="286.48" y="184.7" width="0.95" height="5.0" fill="#ff1a1a"/><rect x="287.34" y="188.3" width="0.95" height="2.6" fill="#ff1a1a"/><rect x="288.20" y="187.5" width="0.95" height="3.6" fill="#10f010"/><rect x="289.06" y="186.7" width="0.95" height="2.3" fill="#10f010"/><rect x="289.92" y="185.0" width="0.95" height="4.2" fill="#10f010"/><rect x="290.78" y="180.4" width="0.95" height="5.4" fill="#ff1a1a"/><rect x="291.64" y="182.6" width="0.95" height="5.1" fill="#ff1a1a"/><rect x="292.50" y="185.1" width="0.95" height="5.6" fill="#ff1a1a"/><rect x="293.36" y="187.3" width="0.95" height="4.1" fill="#ff1a1a"/><rect x="294.22" y="186.4" width="0.95" height="4.8" fill="#10f010"/><rect x="295.08" y="188.6" width="0.95" height="5.7" fill="#ff1a1a"/><rect x="295.94" y="190.4" width="0.95" height="2.4" fill="#10f010"/><rect x="296.80" y="191.4" width="0.95" height="2.9" fill="#10f010"/><rect x="297.66" y="190.6" width="0.95" height="6.9" fill="#10f010"/><rect x="298.52" y="190.9" width="0.95" height="3.6" fill="#10f010"/><rect x="299.38" y="187.3" width="0.95" height="3.2" fill="#ff1a1a"/><rect x="300.24" y="185.9" width="0.95" height="8.7" fill="#10f010"/><rect x="301.10" y="177.3" width="0.95" height="14.9" fill="#10f010"/><rect x="301.96" y="171.3" width="0.95" height="10.6" fill="#10f010"/><rect x="302.82" y="166.7" width="0.95" height="6.7" fill="#10f010"/><rect x="303.68" y="164.6" width="0.95" height="10.5" fill="#ff1a1a"/><rect x="304.54" y="168.1" width="0.95" height="5.9" fill="#ff1a1a"/><rect x="305.40" y="158.7" width="0.95" height="11.5" fill="#10f010"/><rect x="306.26" y="155.8" width="0.95" height="6.6" fill="#10f010"/><rect x="307.12" y="159.3" width="0.95" height="6.3" fill="#ff1a1a"/><rect x="307.98" y="163.3" width="0.95" height="3.3" fill="#ff1a1a"/><rect x="308.84" y="165.2" width="0.95" height="6.9" fill="#ff1a1a"/><rect x="309.70" y="168.1" width="0.95" height="2.4" fill="#10f010"/><rect x="310.56" y="170.5" width="0.95" height="0.9" fill="#ff1a1a"/><rect x="311.42" y="166.6" width="0.95" height="2.9" fill="#10f010"/><rect x="312.28" y="167.0" width="0.95" height="1.7" fill="#ff1a1a"/><rect x="313.14" y="166.3" width="0.95" height="2.1" fill="#10f010"/><rect x="314.00" y="163.9" width="0.95" height="3.2" fill="#10f010"/><rect x="314.86" y="159.6" width="0.95" height="8.6" fill="#10f010"/><rect x="315.72" y="156.7" width="0.95" height="7.8" fill="#10f010"/><rect x="316.58" y="154.1" width="0.95" height="4.9" fill="#10f010"/><rect x="317.44" y="151.6" width="0.95" height="5.4" fill="#ff1a1a"/><rect x="318.30" y="154.5" width="0.95" height="3.6" fill="#10f010"/><rect x="319.16" y="151.3" width="0.95" height="7.8" fill="#10f010"/><rect x="320.02" y="153.1" width="0.95" height="3.5" fill="#10f010"/><rect x="320.88" y="147.6" width="0.95" height="8.2" fill="#10f010"/><rect x="321.74" y="148.6" width="0.95" height="4.0" fill="#ff1a1a"/><rect x="322.60" y="147.4" width="0.95" height="3.1" fill="#ff1a1a"/><rect x="323.46" y="145.6" width="0.95" height="2.8" fill="#10f010"/><rect x="324.32" y="141.0" width="0.95" height="7.1" fill="#10f010"/><rect x="325.18" y="142.5" width="0.95" height="1.8" fill="#10f010"/><rect x="326.04" y="140.2" width="0.95" height="6.2" fill="#10f010"/><rect x="326.90" y="138.7" width="0.95" height="5.7" fill="#10f010"/><rect x="327.76" y="138.2" width="0.95" height="4.0" fill="#10f010"/><rect x="328.62" y="138.9" width="0.95" height="1.3" fill="#ff1a1a"/><rect x="329.48" y="135.2" width="0.95" height="2.5" fill="#10f010"/><rect x="330.34" y="134.3" width="0.95" height="2.3" fill="#ff1a1a"/><rect x="331.20" y="130.7" width="0.95" height="6.0" fill="#10f010"/><rect x="332.06" y="132.2" width="0.95" height="8.7" fill="#ff1a1a"/><rect x="332.92" y="131.6" width="0.95" height="4.5" fill="#ff1a1a"/><rect x="333.78" y="133.9" width="0.95" height="1.5" fill="#ff1a1a"/><rect x="334.64" y="132.0" width="0.95" height="7.6" fill="#10f010"/><rect x="335.50" y="129.5" width="0.95" height="6.6" fill="#ff1a1a"/><rect x="336.36" y="129.2" width="0.95" height="4.6" fill="#ff1a1a"/><rect x="337.22" y="129.0" width="0.95" height="2.8" fill="#ff1a1a"/><rect x="338.08" y="130.9" width="0.95" height="2.5" fill="#10f010"/><rect x="338.94" y="128.2" width="0.95" height="6.7" fill="#10f010"/><rect x="339.80" y="127.7" width="0.95" height="4.3" fill="#ff1a1a"/><rect x="340.66" y="124.7" width="0.95" height="6.5" fill="#10f010"/><rect x="341.52" y="125.0" width="0.95" height="2.7" fill="#10f010"/><rect x="342.38" y="95.4" width="0.95" height="33.2" fill="#10f010"/><rect x="343.24" y="99.2" width="0.95" height="3.0" fill="#ff1a1a"/><rect x="344.10" y="96.3" width="0.95" height="10.5" fill="#ff1a1a"/><rect x="344.96" y="100.0" width="0.95" height="5.8" fill="#ff1a1a"/><rect x="345.82" y="100.2" width="0.95" height="5.4" fill="#ff1a1a"/><rect x="346.68" y="104.3" width="0.95" height="5.7" fill="#ff1a1a"/><rect x="347.54" y="107.4" width="0.95" height="3.4" fill="#10f010"/><rect x="348.40" y="104.7" width="0.95" height="5.3" fill="#ff1a1a"/><rect x="349.26" y="108.6" width="0.95" height="6.4" fill="#ff1a1a"/><rect x="350.12" y="110.4" width="0.95" height="2.8" fill="#ff1a1a"/><rect x="350.98" y="106.9" width="0.95" height="7.8" fill="#10f010"/><rect x="351.84" y="105.0" width="0.95" height="5.3" fill="#ff1a1a"/><rect x="352.70" y="104.9" width="0.95" height="3.8" fill="#10f010"/><rect x="353.56" y="106.6" width="0.95" height="7.5" fill="#ff1a1a"/><rect x="354.42" y="110.0" width="0.95" height="6.4" fill="#ff1a1a"/><rect x="355.28" y="116.3" width="0.95" height="12.5" fill="#ff1a1a"/><rect x="356.14" y="121.2" width="0.95" height="11.2" fill="#ff1a1a"/><rect x="357.00" y="129.6" width="0.95" height="9.2" fill="#ff1a1a"/><rect x="357.86" y="135.2" width="0.95" height="2.7" fill="#ff1a1a"/><rect x="358.72" y="130.7" width="0.95" height="6.7" fill="#10f010"/><rect x="359.58" y="124.1" width="0.95" height="10.4" fill="#10f010"/><rect x="360.44" y="124.2" width="0.95" height="7.5" fill="#10f010"/><rect x="361.30" y="124.7" width="0.95" height="4.9" fill="#ff1a1a"/><rect x="362.16" y="129.2" width="0.95" height="10.1" fill="#ff1a1a"/><rect x="363.02" y="128.8" width="0.95" height="5.0" fill="#ff1a1a"/><rect x="363.88" y="130.9" width="0.95" height="5.3" fill="#10f010"/><rect x="364.74" y="134.0" width="0.95" height="6.9" fill="#ff1a1a"/><rect x="365.60" y="136.3" width="0.95" height="5.0" fill="#ff1a1a"/><rect x="366.46" y="138.0" width="0.95" height="2.8" fill="#ff1a1a"/><rect x="367.32" y="136.7" width="0.95" height="4.3" fill="#10f010"/><rect x="368.18" y="136.8" width="0.95" height="5.5" fill="#ff1a1a"/><rect x="369.04" y="135.3" width="0.95" height="6.2" fill="#10f010"/><rect x="369.90" y="135.2" width="0.95" height="4.6" fill="#10f010"/><rect x="370.76" y="134.3" width="0.95" height="6.5" fill="#ff1a1a"/><rect x="371.62" y="136.0" width="0.95" height="3.7" fill="#ff1a1a"/><rect x="372.48" y="133.5" width="0.95" height="5.6" fill="#10f010"/><rect x="373.34" y="129.4" width="0.95" height="8.6" fill="#10f010"/><rect x="374.20" y="120.1" width="0.95" height="10.9" fill="#10f010"/><rect x="375.06" y="119.2" width="0.95" height="7.9" fill="#10f010"/><rect x="375.92" y="117.5" width="0.95" height="6.5" fill="#10f010"/><rect x="376.78" y="118.3" width="0.95" height="3.2" fill="#10f010"/><rect x="377.64" y="119.0" width="0.95" height="7.0" fill="#ff1a1a"/><rect x="378.50" y="120.4" width="0.95" height="5.7" fill="#ff1a1a"/><rect x="379.36" y="122.5" width="0.95" height="7.3" fill="#ff1a1a"/><rect x="380.22" y="127.0" width="0.95" height="2.9" fill="#ff1a1a"/><rect x="381.08" y="128.5" width="0.95" height="2.3" fill="#ff1a1a"/><rect x="381.94" y="127.2" width="0.95" height="6.9" fill="#ff1a1a"/><rect x="382.80" y="128.8" width="0.95" height="1.8" fill="#ff1a1a"/><rect x="383.66" y="129.5" width="0.95" height="4.9" fill="#ff1a1a"/><rect x="384.52" y="130.0" width="0.95" height="8.6" fill="#10f010"/><rect x="385.38" y="130.9" width="0.95" height="3.6" fill="#10f010"/><rect x="386.24" y="130.7" width="0.95" height="3.6" fill="#10f010"/><rect x="387.10" y="130.3" width="0.95" height="9.9" fill="#10f010"/><rect x="387.96" y="132.5" width="0.95" height="3.3" fill="#10f010"/><rect x="388.82" y="133.7" width="0.95" height="3.4" fill="#ff1a1a"/><rect x="389.68" y="132.8" width="0.95" height="6.9" fill="#ff1a1a"/><rect x="390.54" y="132.5" width="0.95" height="8.3" fill="#ff1a1a"/><rect x="391.40" y="135.2" width="0.95" height="2.8" fill="#ff1a1a"/><rect x="392.26" y="128.0" width="0.95" height="6.2" fill="#10f010"/><rect x="393.12" y="132.0" width="0.95" height="8.5" fill="#ff1a1a"/><rect x="393.98" y="137.6" width="0.95" height="7.5" fill="#ff1a1a"/><rect x="394.84" y="144.5" width="0.95" height="6.3" fill="#ff1a1a"/><rect x="395.70" y="144.7" width="0.95" height="5.4" fill="#ff1a1a"/><rect x="396.56" y="148.6" width="0.95" height="8.1" fill="#10f010"/><rect x="397.42" y="151.0" width="0.95" height="3.6" fill="#ff1a1a"/><rect x="398.28" y="156.6" width="0.95" height="2.7" fill="#10f010"/><rect x="399.14" y="157.5" width="0.95" height="3.1" fill="#10f010"/><rect x="400.00" y="156.0" width="0.95" height="9.7" fill="#10f010"/><rect x="400.86" y="157.0" width="0.95" height="5.2" fill="#ff1a1a"/><rect x="401.72" y="156.7" width="0.95" height="1.8" fill="#10f010"/><rect x="402.58" y="154.0" width="0.95" height="6.7" fill="#10f010"/><rect x="403.44" y="153.8" width="0.95" height="3.8" fill="#ff1a1a"/><rect x="404.30" y="151.4" width="0.95" height="7.5" fill="#10f010"/><rect x="405.16" y="150.6" width="0.95" height="6.7" fill="#10f010"/><rect x="406.02" y="149.0" width="0.95" height="7.1" fill="#ff1a1a"/><rect x="406.88" y="149.3" width="0.95" height="7.5" fill="#ff1a1a"/><rect x="407.74" y="149.3" width="0.95" height="4.5" fill="#ff1a1a"/><rect x="408.60" y="146.7" width="0.95" height="6.6" fill="#ff1a1a"/><rect x="409.46" y="150.7" width="0.95" height="4.0" fill="#10f010"/><rect x="410.32" y="150.6" width="0.95" height="3.4" fill="#ff1a1a"/><rect x="411.18" y="150.0" width="0.95" height="5.3" fill="#ff1a1a"/><rect x="412.04" y="153.4" width="0.95" height="4.3" fill="#10f010"/><rect x="412.90" y="150.6" width="0.95" height="5.1" fill="#ff1a1a"/><rect x="413.76" y="156.5" width="0.95" height="4.5" fill="#ff1a1a"/><rect x="414.62" y="157.9" width="0.95" height="7.2" fill="#ff1a1a"/><rect x="415.48" y="151.1" width="0.95" height="11.8" fill="#10f010"/><rect x="416.34" y="152.1" width="0.95" height="3.6" fill="#ff1a1a"/><rect x="417.20" y="146.4" width="0.95" height="6.7" fill="#10f010"/><rect x="418.06" y="145.4" width="0.95" height="8.2" fill="#10f010"/><rect x="418.92" y="148.1" width="0.95" height="2.8" fill="#ff1a1a"/><rect x="419.78" y="146.6" width="0.95" height="2.4" fill="#ff1a1a"/><rect x="420.64" y="142.7" width="0.95" height="3.6" fill="#ff1a1a"/><rect x="421.50" y="142.0" width="0.95" height="3.5" fill="#ff1a1a"/><rect x="422.36" y="142.4" width="0.95" height="1.6" fill="#ff1a1a"/><rect x="423.22" y="142.9" width="0.95" height="3.4" fill="#ff1a1a"/><rect x="424.08" y="141.0" width="0.95" height="7.5" fill="#ff1a1a"/><rect x="424.94" y="141.2" width="0.95" height="6.0" fill="#10f010"/><rect x="425.80" y="144.7" width="0.95" height="1.8" fill="#10f010"/><rect x="426.66" y="143.6" width="0.95" height="3.8" fill="#ff1a1a"/><rect x="427.52" y="143.2" width="0.95" height="5.5" fill="#10f010"/><rect x="428.38" y="142.7" width="0.95" height="4.7" fill="#10f010"/><rect x="429.24" y="143.7" width="0.95" height="4.7" fill="#ff1a1a"/><rect x="430.10" y="141.3" width="0.95" height="4.6" fill="#ff1a1a"/><rect x="430.96" y="138.9" width="0.95" height="5.7" fill="#10f010"/><rect x="431.82" y="140.7" width="0.95" height="3.9" fill="#ff1a1a"/><rect x="432.68" y="140.6" width="0.95" height="5.7" fill="#ff1a1a"/><rect x="433.54" y="143.4" width="0.95" height="9.0" fill="#ff1a1a"/><rect x="434.40" y="148.8" width="0.95" height="7.5" fill="#ff1a1a"/><rect x="435.26" y="151.4" width="0.95" height="6.9" fill="#ff1a1a"/><rect x="436.12" y="153.1" width="0.95" height="6.7" fill="#ff1a1a"/><rect x="436.98" y="151.6" width="0.95" height="2.1" fill="#10f010"/><rect x="437.84" y="144.4" width="0.95" height="5.8" fill="#ff1a1a"/><rect x="438.70" y="148.4" width="0.95" height="2.8" fill="#10f010"/><rect x="439.56" y="148.5" width="0.95" height="3.8" fill="#10f010"/><rect x="440.42" y="149.4" width="0.95" height="3.5" fill="#ff1a1a"/><rect x="441.28" y="150.6" width="0.95" height="6.3" fill="#ff1a1a"/><rect x="442.14" y="153.0" width="0.95" height="3.8" fill="#ff1a1a"/><rect x="443.00" y="156.4" width="0.95" height="2.2" fill="#10f010"/><rect x="443.86" y="155.6" width="0.95" height="3.0" fill="#ff1a1a"/><rect x="444.72" y="155.5" width="0.95" height="6.4" fill="#ff1a1a"/><rect x="445.58" y="155.5" width="0.95" height="6.8" fill="#ff1a1a"/><rect x="446.44" y="158.1" width="0.95" height="5.1" fill="#ff1a1a"/><rect x="447.30" y="158.3" width="0.95" height="6.6" fill="#ff1a1a"/><rect x="448.16" y="159.3" width="0.95" height="3.0" fill="#ff1a1a"/><rect x="449.02" y="153.0" width="0.95" height="4.2" fill="#10f010"/><rect x="449.88" y="153.9" width="0.95" height="2.9" fill="#10f010"/><rect x="450.74" y="153.2" width="0.95" height="2.5" fill="#10f010"/><rect x="451.60" y="148.4" width="0.95" height="4.8" fill="#10f010"/><rect x="452.46" y="149.5" width="0.95" height="9.2" fill="#ff1a1a"/><rect x="453.32" y="156.8" width="0.95" height="7.6" fill="#ff1a1a"/><rect x="454.18" y="160.7" width="0.95" height="3.8" fill="#ff1a1a"/><rect x="455.04" y="156.6" width="0.95" height="5.8" fill="#10f010"/><rect x="455.90" y="157.6" width="0.95" height="3.3" fill="#ff1a1a"/><rect x="456.76" y="157.1" width="0.95" height="3.4" fill="#10f010"/><rect x="457.62" y="150.4" width="0.95" height="11.8" fill="#10f010"/><rect x="458.48" y="154.6" width="0.95" height="6.9" fill="#10f010"/><rect x="459.34" y="152.7" width="0.95" height="4.6" fill="#ff1a1a"/><rect x="460.20" y="153.5" width="0.95" height="7.1" fill="#ff1a1a"/><rect x="461.06" y="153.1" width="0.95" height="3.0" fill="#10f010"/><rect x="461.92" y="155.1" width="0.95" height="3.4" fill="#10f010"/><rect x="462.78" y="156.4" width="0.95" height="1.9" fill="#ff1a1a"/><rect x="463.64" y="154.8" width="0.95" height="7.7" fill="#ff1a1a"/><rect x="464.50" y="154.8" width="0.95" height="6.1" fill="#ff1a1a"/><rect x="465.36" y="157.5" width="0.95" height="5.0" fill="#ff1a1a"/><rect x="466.22" y="160.2" width="0.95" height="1.3" fill="#10f010"/><rect x="467.08" y="158.5" width="0.95" height="3.6" fill="#ff1a1a"/><rect x="467.94" y="155.6" width="0.95" height="10.0" fill="#10f010"/><rect x="468.80" y="159.0" width="0.95" height="3.0" fill="#10f010"/><rect x="469.66" y="154.7" width="0.95" height="5.0" fill="#10f010"/><rect x="470.52" y="155.7" width="0.95" height="3.9" fill="#ff1a1a"/><rect x="471.38" y="156.4" width="0.95" height="3.5" fill="#10f010"/><rect x="472.24" y="156.0" width="0.95" height="4.1" fill="#ff1a1a"/><rect x="473.10" y="158.6" width="0.95" height="7.5" fill="#ff1a1a"/><rect x="473.96" y="162.5" width="0.95" height="6.1" fill="#ff1a1a"/><rect x="474.82" y="164.7" width="0.95" height="5.5" fill="#10f010"/><rect x="475.68" y="166.1" width="0.95" height="3.2" fill="#ff1a1a"/><rect x="476.54" y="166.6" width="0.95" height="6.1" fill="#10f010"/><rect x="477.40" y="163.9" width="0.95" height="5.4" fill="#10f010"/><rect x="478.26" y="158.3" width="0.95" height="8.2" fill="#ff1a1a"/><rect x="479.12" y="160.3" width="0.95" height="2.4" fill="#ff1a1a"/><rect x="479.98" y="159.3" width="0.95" height="3.0" fill="#10f010"/><rect x="480.84" y="157.9" width="0.95" height="6.6" fill="#ff1a1a"/><rect x="481.70" y="159.4" width="0.95" height="5.6" fill="#ff1a1a"/><rect x="482.56" y="161.2" width="0.95" height="4.9" fill="#10f010"/><rect x="483.42" y="159.4" width="0.95" height="5.6" fill="#ff1a1a"/><rect x="484.28" y="158.8" width="0.95" height="5.0" fill="#ff1a1a"/><rect x="485.14" y="158.1" width="0.95" height="9.1" fill="#10f010"/><rect x="486.00" y="159.5" width="0.95" height="3.9" fill="#ff1a1a"/><rect x="486.86" y="157.5" width="0.95" height="3.7" fill="#10f010"/><rect x="487.72" y="157.2" width="0.95" height="4.3" fill="#10f010"/><rect x="488.58" y="158.0" width="0.95" height="1.7" fill="#ff1a1a"/><rect x="489.44" y="154.2" width="0.95" height="3.3" fill="#ff1a1a"/><rect x="490.30" y="151.5" width="0.95" height="6.7" fill="#10f010"/><rect x="491.16" y="150.4" width="0.95" height="7.8" fill="#10f010"/><rect x="492.02" y="143.3" width="0.95" height="10.0" fill="#10f010"/><rect x="492.88" y="130.6" width="0.95" height="15.8" fill="#10f010"/><rect x="493.74" y="123.0" width="0.95" height="10.8" fill="#10f010"/><rect x="494.60" y="126.9" width="0.95" height="2.6" fill="#ff1a1a"/><rect x="495.46" y="125.1" width="0.95" height="3.0" fill="#ff1a1a"/><rect x="496.32" y="129.0" width="0.95" height="5.4" fill="#ff1a1a"/><rect x="497.18" y="132.9" width="0.95" height="5.8" fill="#ff1a1a"/><rect x="498.04" y="135.2" width="0.95" height="5.4" fill="#ff1a1a"/><rect x="498.90" y="137.5" width="0.95" height="6.7" fill="#ff1a1a"/><rect x="499.76" y="136.2" width="0.95" height="5.9" fill="#ff1a1a"/><rect x="500.62" y="136.3" width="0.95" height="4.3" fill="#10f010"/><rect x="501.48" y="136.8" width="0.95" height="5.7" fill="#10f010"/><rect x="502.34" y="135.6" width="0.95" height="5.1" fill="#10f010"/><rect x="503.20" y="135.9" width="0.95" height="4.8" fill="#10f010"/><rect x="504.06" y="133.6" width="0.95" height="4.0" fill="#10f010"/><rect x="504.92" y="134.4" width="0.95" height="3.5" fill="#10f010"/><rect x="505.78" y="132.3" width="0.95" height="7.2" fill="#10f010"/><rect x="506.64" y="134.0" width="0.95" height="4.9" fill="#10f010"/><rect x="507.50" y="131.0" width="0.95" height="5.5" fill="#10f010"/><rect x="508.36" y="129.4" width="0.95" height="4.1" fill="#10f010"/><rect x="509.22" y="126.5" width="0.95" height="6.9" fill="#10f010"/><rect x="510.08" y="123.9" width="0.95" height="3.9" fill="#ff1a1a"/><rect x="510.94" y="123.8" width="0.95" height="2.6" fill="#ff1a1a"/><rect x="511.80" y="122.8" width="0.95" height="4.2" fill="#ff1a1a"/><rect x="512.66" y="123.3" width="0.95" height="11.1" fill="#ff1a1a"/><rect x="513.52" y="128.4" width="0.95" height="13.6" fill="#ff1a1a"/><rect x="514.38" y="138.1" width="0.95" height="4.2" fill="#10f010"/><rect x="515.24" y="139.2" width="0.95" height="4.8" fill="#10f010"/><rect x="516.10" y="140.2" width="0.95" height="3.7" fill="#10f010"/><rect x="516.96" y="138.8" width="0.95" height="2.6" fill="#10f010"/><rect x="517.82" y="136.2" width="0.95" height="4.2" fill="#ff1a1a"/><rect x="518.68" y="134.5" width="0.95" height="4.8" fill="#ff1a1a"/><rect x="519.54" y="135.2" width="0.95" height="2.2" fill="#10f010"/><rect x="520.40" y="133.0" width="0.95" height="6.8" fill="#ff1a1a"/><rect x="521.26" y="134.0" width="0.95" height="6.6" fill="#ff1a1a"/><rect x="522.12" y="136.5" width="0.95" height="3.0" fill="#ff1a1a"/><rect x="522.98" y="135.8" width="0.95" height="2.4" fill="#ff1a1a"/><rect x="523.84" y="136.1" width="0.95" height="3.5" fill="#ff1a1a"/><rect x="524.70" y="129.9" width="0.95" height="5.7" fill="#10f010"/><rect x="525.56" y="132.5" width="0.95" height="4.9" fill="#ff1a1a"/><rect x="526.42" y="132.5" width="0.95" height="5.2" fill="#10f010"/><rect x="527.28" y="129.8" width="0.95" height="4.4" fill="#10f010"/><rect x="528.14" y="127.4" width="0.95" height="10.4" fill="#10f010"/><rect x="529.00" y="128.2" width="0.95" height="3.4" fill="#10f010"/><rect x="529.86" y="121.9" width="0.95" height="8.6" fill="#10f010"/><rect x="530.72" y="123.2" width="0.95" height="4.6" fill="#10f010"/><rect x="531.58" y="119.0" width="0.95" height="6.3" fill="#10f010"/><rect x="532.44" y="124.4" width="0.95" height="5.3" fill="#ff1a1a"/><rect x="533.30" y="123.9" width="0.95" height="10.0" fill="#ff1a1a"/><rect x="534.16" y="128.6" width="0.95" height="7.8" fill="#ff1a1a"/><rect x="535.02" y="127.3" width="0.95" height="9.7" fill="#10f010"/><rect x="535.88" y="125.6" width="0.95" height="7.0" fill="#10f010"/><rect x="536.74" y="123.2" width="0.95" height="6.1" fill="#10f010"/><rect x="537.60" y="122.2" width="0.95" height="10.6" fill="#10f010"/><rect x="538.46" y="125.0" width="0.95" height="5.8" fill="#ff1a1a"/><rect x="539.32" y="126.8" width="0.95" height="8.3" fill="#ff1a1a"/><rect x="540.18" y="133.0" width="0.95" height="4.7" fill="#ff1a1a"/><rect x="541.04" y="135.0" width="0.95" height="3.4" fill="#ff1a1a"/><rect x="541.90" y="136.0" width="0.95" height="8.8" fill="#ff1a1a"/><rect x="542.76" y="135.4" width="0.95" height="4.5" fill="#10f010"/><rect x="543.62" y="135.7" width="0.95" height="7.0" fill="#10f010"/><rect x="544.48" y="136.3" width="0.95" height="5.3" fill="#10f010"/><rect x="545.34" y="135.0" width="0.95" height="5.0" fill="#10f010"/><rect x="546.20" y="136.6" width="0.95" height="5.5" fill="#10f010"/><rect x="547.06" y="136.2" width="0.95" height="3.9" fill="#10f010"/><rect x="547.92" y="139.4" width="0.95" height="4.3" fill="#ff1a1a"/><rect x="548.78" y="137.8" width="0.95" height="8.3" fill="#10f010"/><rect x="549.64" y="139.0" width="0.95" height="3.7" fill="#ff1a1a"/><rect x="550.50" y="135.9" width="0.95" height="4.4" fill="#10f010"/><rect x="551.36" y="136.4" width="0.95" height="10.0" fill="#ff1a1a"/><rect x="552.22" y="146.2" width="0.95" height="12.3" fill="#ff1a1a"/><rect x="553.08" y="154.4" width="0.95" height="8.3" fill="#ff1a1a"/><rect x="553.94" y="160.2" width="0.95" height="8.4" fill="#ff1a1a"/><rect x="554.80" y="162.1" width="0.95" height="4.6" fill="#10f010"/><rect x="555.66" y="158.7" width="0.95" height="12.6" fill="#10f010"/><rect x="556.52" y="159.6" width="0.95" height="6.2" fill="#ff1a1a"/><rect x="557.38" y="157.5" width="0.95" height="3.0" fill="#10f010"/><rect x="558.24" y="155.5" width="0.95" height="8.0" fill="#10f010"/><rect x="559.10" y="153.5" width="0.95" height="6.7" fill="#10f010"/><rect x="559.96" y="153.3" width="0.95" height="6.6" fill="#10f010"/><rect x="560.82" y="154.3" width="0.95" height="2.6" fill="#10f010"/><rect x="561.68" y="152.4" width="0.95" height="6.8" fill="#ff1a1a"/><rect x="562.54" y="153.0" width="0.95" height="2.9" fill="#10f010"/><rect x="563.40" y="153.0" width="0.95" height="2.0" fill="#10f010"/><rect x="564.26" y="152.8" width="0.95" height="6.6" fill="#ff1a1a"/><rect x="565.12" y="153.8" width="0.95" height="10.0" fill="#10f010"/><rect x="565.98" y="154.0" width="0.95" height="5.9" fill="#10f010"/><rect x="566.84" y="155.0" width="0.95" height="3.1" fill="#10f010"/><rect x="567.70" y="154.5" width="0.95" height="5.1" fill="#ff1a1a"/><rect x="568.56" y="153.0" width="0.95" height="7.2" fill="#ff1a1a"/><rect x="569.42" y="159.9" width="0.95" height="4.3" fill="#ff1a1a"/><rect x="570.28" y="163.5" width="0.95" height="8.0" fill="#ff1a1a"/><rect x="571.14" y="162.9" width="0.95" height="12.1" fill="#ff1a1a"/><rect x="572.00" y="167.7" width="0.95" height="5.6" fill="#ff1a1a"/><rect x="572.86" y="169.6" width="0.95" height="5.3" fill="#10f010"/><rect x="573.72" y="173.8" width="0.95" height="6.5" fill="#ff1a1a"/><rect x="574.58" y="175.2" width="0.95" height="28.3" fill="#ff1a1a"/><rect x="575.44" y="198.0" width="0.95" height="7.0" fill="#ff1a1a"/><rect x="576.30" y="201.7" width="0.95" height="5.7" fill="#10f010"/><rect x="577.16" y="202.4" width="0.95" height="4.6" fill="#10f010"/><rect x="578.02" y="200.2" width="0.95" height="5.3" fill="#ff1a1a"/><rect x="578.88" y="198.9" width="0.95" height="6.0" fill="#10f010"/><rect x="579.74" y="199.2" width="0.95" height="4.1" fill="#ff1a1a"/><rect x="580.60" y="195.3" width="0.95" height="5.1" fill="#10f010"/><rect x="581.46" y="195.8" width="0.95" height="5.6" fill="#10f010"/><rect x="582.32" y="195.9" width="0.95" height="10.2" fill="#ff1a1a"/><rect x="583.18" y="195.5" width="0.95" height="3.5" fill="#10f010"/><rect x="584.04" y="198.3" width="0.95" height="3.8" fill="#ff1a1a"/><rect x="584.90" y="200.0" width="0.95" height="3.4" fill="#ff1a1a"/><rect x="585.76" y="198.3" width="0.95" height="4.9" fill="#10f010"/><rect x="586.62" y="200.5" width="0.95" height="5.7" fill="#10f010"/><rect x="587.48" y="201.6" width="0.95" height="4.1" fill="#10f010"/><rect x="588.34" y="201.6" width="0.95" height="1.4" fill="#10f010"/><rect x="589.20" y="202.1" width="0.95" height="3.0" fill="#ff1a1a"/><rect x="590.06" y="199.4" width="0.95" height="2.8" fill="#10f010"/><rect x="590.92" y="196.1" width="0.95" height="7.5" fill="#10f010"/><rect x="591.78" y="192.6" width="0.95" height="7.3" fill="#10f010"/><rect x="592.64" y="194.0" width="0.95" height="10.8" fill="#ff1a1a"/><rect x="593.50" y="182.4" width="0.95" height="18.1" fill="#10f010"/><rect x="594.36" y="174.0" width="0.95" height="11.8" fill="#10f010"/><rect x="595.22" y="170.2" width="0.95" height="9.1" fill="#10f010"/><rect x="596.08" y="162.0" width="0.95" height="10.7" fill="#10f010"/><rect x="596.94" y="157.8" width="0.95" height="9.3" fill="#10f010"/><rect x="597.80" y="157.8" width="0.95" height="2.1" fill="#10f010"/><rect x="598.66" y="152.4" width="0.95" height="7.6" fill="#10f010"/><rect x="599.52" y="154.3" width="0.95" height="6.4" fill="#ff1a1a"/><rect x="600.38" y="155.5" width="0.95" height="1.9" fill="#10f010"/><rect x="601.24" y="156.3" width="0.95" height="2.2" fill="#10f010"/><rect x="602.10" y="157.2" width="0.95" height="3.6" fill="#ff1a1a"/><rect x="602.96" y="155.6" width="0.95" height="2.9" fill="#ff1a1a"/><rect x="603.82" y="153.7" width="0.95" height="9.0" fill="#10f010"/><rect x="604.68" y="154.2" width="0.95" height="5.8" fill="#10f010"/><rect x="605.54" y="154.9" width="0.95" height="3.3" fill="#ff1a1a"/><rect x="606.40" y="154.2" width="0.95" height="5.3" fill="#10f010"/><rect x="607.26" y="153.6" width="0.95" height="4.9" fill="#10f010"/><rect x="608.12" y="153.1" width="0.95" height="7.5" fill="#ff1a1a"/><rect x="608.98" y="151.8" width="0.95" height="4.9" fill="#10f010"/><rect x="609.84" y="155.1" width="0.95" height="3.3" fill="#10f010"/><rect x="610.70" y="152.3" width="0.95" height="5.8" fill="#ff1a1a"/><rect x="611.56" y="152.6" width="0.95" height="2.8" fill="#10f010"/><rect x="612.42" y="150.0" width="0.95" height="4.5" fill="#10f010"/><rect x="613.28" y="147.3" width="0.95" height="5.6" fill="#10f010"/><rect x="614.14" y="145.2" width="0.95" height="4.2" fill="#10f010"/><rect x="615.00" y="147.6" width="0.95" height="12.4" fill="#ff1a1a"/><rect x="615.86" y="152.0" width="0.95" height="4.8" fill="#ff1a1a"/><rect x="616.72" y="152.2" width="0.95" height="8.2" fill="#10f010"/><rect x="617.58" y="147.1" width="0.95" height="7.7" fill="#10f010"/><rect x="618.44" y="149.4" width="0.95" height="4.9" fill="#10f010"/><rect x="619.30" y="142.9" width="0.95" height="5.8" fill="#10f010"/><rect x="620.16" y="143.3" width="0.95" height="4.2" fill="#ff1a1a"/><rect x="621.02" y="143.0" width="0.95" height="5.9" fill="#10f010"/><rect x="621.88" y="142.6" width="0.95" height="3.6" fill="#ff1a1a"/><rect x="622.74" y="140.6" width="0.95" height="6.9" fill="#ff1a1a"/><rect x="623.60" y="143.5" width="0.95" height="2.3" fill="#10f010"/><rect x="624.46" y="142.1" width="0.95" height="6.5" fill="#ff1a1a"/><rect x="625.32" y="141.7" width="0.95" height="2.8" fill="#10f010"/><rect x="626.18" y="139.7" width="0.95" height="3.5" fill="#10f010"/><rect x="627.04" y="144.0" width="0.95" height="3.8" fill="#ff1a1a"/><rect x="627.90" y="145.1" width="0.95" height="7.9" fill="#ff1a1a"/><rect x="628.76" y="145.3" width="0.95" height="3.6" fill="#10f010"/><rect x="629.62" y="138.3" width="0.95" height="9.2" fill="#10f010"/><rect x="630.48" y="129.9" width="0.95" height="13.3" fill="#10f010"/><rect x="631.34" y="129.1" width="0.95" height="4.5" fill="#10f010"/><rect x="632.20" y="129.4" width="0.95" height="4.7" fill="#10f010"/><rect x="633.06" y="125.4" width="0.95" height="3.5" fill="#10f010"/><rect x="633.92" y="121.6" width="0.95" height="7.3" fill="#10f010"/><rect x="634.78" y="123.4" width="0.95" height="4.9" fill="#10f010"/><rect x="635.64" y="120.7" width="0.95" height="3.1" fill="#10f010"/><rect x="636.50" y="119.5" width="0.95" height="4.8" fill="#ff1a1a"/><rect x="637.36" y="114.1" width="0.95" height="8.4" fill="#10f010"/><rect x="638.22" y="115.2" width="0.95" height="4.4" fill="#10f010"/><rect x="639.08" y="117.9" width="0.95" height="3.4" fill="#ff1a1a"/><rect x="639.94" y="119.1" width="0.95" height="4.5" fill="#ff1a1a"/><rect x="640.80" y="120.5" width="0.95" height="7.5" fill="#10f010"/><rect x="641.66" y="116.5" width="0.95" height="3.5" fill="#ff1a1a"/><rect x="642.52" y="117.8" width="0.95" height="5.6" fill="#10f010"/><rect x="643.38" y="119.0" width="0.95" height="4.3" fill="#10f010"/><rect x="644.24" y="116.9" width="0.95" height="4.2" fill="#10f010"/><rect x="645.10" y="118.4" width="0.95" height="4.7" fill="#10f010"/><rect x="645.96" y="115.1" width="0.95" height="4.4" fill="#ff1a1a"/><rect x="646.82" y="115.0" width="0.95" height="2.6" fill="#10f010"/><rect x="647.68" y="111.2" width="0.95" height="6.0" fill="#ff1a1a"/><rect x="648.54" y="112.8" width="0.95" height="2.7" fill="#ff1a1a"/><rect x="649.40" y="108.3" width="0.95" height="5.9" fill="#10f010"/><rect x="650.26" y="106.5" width="0.95" height="9.4" fill="#10f010"/><rect x="651.12" y="98.7" width="0.95" height="9.9" fill="#10f010"/><rect x="651.98" y="97.1" width="0.95" height="8.7" fill="#10f010"/><rect x="652.84" y="95.4" width="0.95" height="4.9" fill="#10f010"/><rect x="653.70" y="93.6" width="0.95" height="4.6" fill="#10f010"/><rect x="654.56" y="92.0" width="0.95" height="10.4" fill="#10f010"/><rect x="655.42" y="93.2" width="0.95" height="2.6" fill="#ff1a1a"/><rect x="656.28" y="93.5" width="0.95" height="8.0" fill="#ff1a1a"/><rect x="657.14" y="90.8" width="0.95" height="8.6" fill="#ff1a1a"/><rect x="658.00" y="97.3" width="0.95" height="5.8" fill="#ff1a1a"/><rect x="658.86" y="93.4" width="0.95" height="4.4" fill="#10f010"/><rect x="659.72" y="92.3" width="0.95" height="6.8" fill="#10f010"/><rect x="660.58" y="91.7" width="0.95" height="6.9" fill="#ff1a1a"/><rect x="661.44" y="91.5" width="0.95" height="2.7" fill="#10f010"/><rect x="662.30" y="92.8" width="0.95" height="3.8" fill="#ff1a1a"/><rect x="663.16" y="91.3" width="0.95" height="4.5" fill="#10f010"/><rect x="664.02" y="91.2" width="0.95" height="3.4" fill="#ff1a1a"/><rect x="664.88" y="91.5" width="0.95" height="4.5" fill="#10f010"/><rect x="665.74" y="94.1" width="0.95" height="4.6" fill="#10f010"/><rect x="666.60" y="94.1" width="0.95" height="4.3" fill="#ff1a1a"/><rect x="667.46" y="94.4" width="0.95" height="5.0" fill="#10f010"/><rect x="668.32" y="92.0" width="0.95" height="8.6" fill="#10f010"/><rect x="669.18" y="93.3" width="0.95" height="5.5" fill="#ff1a1a"/><rect x="670.04" y="91.5" width="0.95" height="11.1" fill="#10f010"/><rect x="670.90" y="94.1" width="0.95" height="7.0" fill="#ff1a1a"/><rect x="671.76" y="92.3" width="0.95" height="4.7" fill="#10f010"/><rect x="672.62" y="96.1" width="0.95" height="2.9" fill="#10f010"/><rect x="673.48" y="92.0" width="0.95" height="6.3" fill="#ff1a1a"/><rect x="674.34" y="94.0" width="0.95" height="9.6" fill="#ff1a1a"/><rect x="675.20" y="97.2" width="0.95" height="7.3" fill="#ff1a1a"/><rect x="676.06" y="97.4" width="0.95" height="5.6" fill="#ff1a1a"/><rect x="676.92" y="100.2" width="0.95" height="5.1" fill="#10f010"/><rect x="677.78" y="101.5" width="0.95" height="2.8" fill="#10f010"/><rect x="678.64" y="100.8" width="0.95" height="5.5" fill="#10f010"/><rect x="679.50" y="99.4" width="0.95" height="7.0" fill="#ff1a1a"/><rect x="680.36" y="105.2" width="0.95" height="3.3" fill="#ff1a1a"/><rect x="681.22" y="101.9" width="0.95" height="7.6" fill="#10f010"/><rect x="682.08" y="101.9" width="0.95" height="2.4" fill="#ff1a1a"/><rect x="682.94" y="97.9" width="0.95" height="6.8" fill="#10f010"/><rect x="683.80" y="97.8" width="0.95" height="3.6" fill="#10f010"/><rect x="684.66" y="96.7" width="0.95" height="3.5" fill="#10f010"/><rect x="685.52" y="95.8" width="0.95" height="5.8" fill="#10f010"/><rect x="686.38" y="95.8" width="0.95" height="4.5" fill="#10f010"/><rect x="687.24" y="95.4" width="0.95" height="6.0" fill="#10f010"/><rect x="688.10" y="94.4" width="0.95" height="6.5" fill="#ff1a1a"/><rect x="688.96" y="98.2" width="0.95" height="0.9" fill="#10f010"/><rect x="689.82" y="94.0" width="0.95" height="6.0" fill="#10f010"/><rect x="690.68" y="90.9" width="0.95" height="6.1" fill="#ff1a1a"/><rect x="691.54" y="92.3" width="0.95" height="9.6" fill="#10f010"/><rect x="692.40" y="91.0" width="0.95" height="7.3" fill="#10f010"/><rect x="693.26" y="93.1" width="0.95" height="5.0" fill="#10f010"/><rect x="694.12" y="92.3" width="0.95" height="4.5" fill="#10f010"/><rect x="694.98" y="89.1" width="0.95" height="4.2" fill="#10f010"/><rect x="695.84" y="89.1" width="0.95" height="4.8" fill="#10f010"/><rect x="696.70" y="89.2" width="0.95" height="8.8" fill="#ff1a1a"/><rect x="697.56" y="89.0" width="0.95" height="11.2" fill="#ff1a1a"/><rect x="698.42" y="95.0" width="0.95" height="8.1" fill="#10f010"/><rect x="699.28" y="90.3" width="0.95" height="7.2" fill="#10f010"/><rect x="700.14" y="89.5" width="0.95" height="7.3" fill="#10f010"/><rect x="701.00" y="88.1" width="0.95" height="4.5" fill="#10f010"/><rect x="701.86" y="84.2" width="0.95" height="6.0" fill="#10f010"/><rect x="702.72" y="83.9" width="0.95" height="4.8" fill="#ff1a1a"/><rect x="703.58" y="83.9" width="0.95" height="4.1" fill="#10f010"/><rect x="704.44" y="81.1" width="0.95" height="4.8" fill="#ff1a1a"/><rect x="705.30" y="80.9" width="0.95" height="6.4" fill="#ff1a1a"/><rect x="706.16" y="78.8" width="0.95" height="7.4" fill="#10f010"/><rect x="707.02" y="81.1" width="0.95" height="3.2" fill="#10f010"/><rect x="707.88" y="76.5" width="0.95" height="6.0" fill="#10f010"/><rect x="708.74" y="75.9" width="0.95" height="7.8" fill="#ff1a1a"/><rect x="709.60" y="75.8" width="0.95" height="4.9" fill="#10f010"/><rect x="710.46" y="79.6" width="0.95" height="7.4" fill="#ff1a1a"/><rect x="711.32" y="83.1" width="0.95" height="14.4" fill="#ff1a1a"/><rect x="712.18" y="93.6" width="0.95" height="11.2" fill="#ff1a1a"/><rect x="713.04" y="104.7" width="0.95" height="4.6" fill="#ff1a1a"/><rect x="713.90" y="104.1" width="0.95" height="6.0" fill="#10f010"/><rect x="714.76" y="101.6" width="0.95" height="3.1" fill="#10f010"/><rect x="715.62" y="101.4" width="0.95" height="2.4" fill="#ff1a1a"/><rect x="716.48" y="103.1" width="0.95" height="3.0" fill="#ff1a1a"/><rect x="717.34" y="102.3" width="0.95" height="3.0" fill="#ff1a1a"/><rect x="718.20" y="102.3" width="0.95" height="3.7" fill="#ff1a1a"/><rect x="719.06" y="104.0" width="0.95" height="4.2" fill="#10f010"/><rect x="719.92" y="105.9" width="0.95" height="7.0" fill="#ff1a1a"/><rect x="720.78" y="104.6" width="0.95" height="5.0" fill="#ff1a1a"/><rect x="721.64" y="103.5" width="0.95" height="6.5" fill="#ff1a1a"/><rect x="722.50" y="105.3" width="0.95" height="5.3" fill="#ff1a1a"/><rect x="723.36" y="105.2" width="0.95" height="3.0" fill="#ff1a1a"/><rect x="724.22" y="106.5" width="0.95" height="5.6" fill="#10f010"/><rect x="725.08" y="108.8" width="0.95" height="3.6" fill="#10f010"/><rect x="725.94" y="109.3" width="0.95" height="4.8" fill="#10f010"/><rect x="726.80" y="109.5" width="0.95" height="7.8" fill="#10f010"/><rect x="727.66" y="111.4" width="0.95" height="2.8" fill="#ff1a1a"/><rect x="728.52" y="112.9" width="0.95" height="2.4" fill="#ff1a1a"/><rect x="729.38" y="114.5" width="0.95" height="2.1" fill="#ff1a1a"/><rect x="730.24" y="114.8" width="0.95" height="10.7" fill="#ff1a1a"/><rect x="731.10" y="116.9" width="0.95" height="5.5" fill="#10f010"/><rect x="731.96" y="119.4" width="0.95" height="2.5" fill="#10f010"/><rect x="732.82" y="114.9" width="0.95" height="7.6" fill="#10f010"/><rect x="733.68" y="110.0" width="0.95" height="6.3" fill="#10f010"/><rect x="734.54" y="108.0" width="0.95" height="3.3" fill="#10f010"/><rect x="735.40" y="108.2" width="0.95" height="18.1" fill="#ff1a1a"/><rect x="736.26" y="120.6" width="0.95" height="8.5" fill="#ff1a1a"/><rect x="737.12" y="123.2" width="0.95" height="5.7" fill="#10f010"/><rect x="737.98" y="122.5" width="0.95" height="6.9" fill="#10f010"/><rect x="738.84" y="120.8" width="0.95" height="3.4" fill="#10f010"/><rect x="739.70" y="116.1" width="0.95" height="5.1" fill="#10f010"/><rect x="740.56" y="113.0" width="0.95" height="6.4" fill="#10f010"/><rect x="741.42" y="113.8" width="0.95" height="3.6" fill="#10f010"/><rect x="742.28" y="113.2" width="0.95" height="3.2" fill="#10f010"/><rect x="743.14" y="110.8" width="0.95" height="3.9" fill="#ff1a1a"/><rect x="744.00" y="111.4" width="0.95" height="3.9" fill="#10f010"/><rect x="744.86" y="114.3" width="0.95" height="2.1" fill="#ff1a1a"/><rect x="745.72" y="111.9" width="0.95" height="8.4" fill="#ff1a1a"/><rect x="746.58" y="110.8" width="0.95" height="6.8" fill="#ff1a1a"/><rect x="747.44" y="111.3" width="0.95" height="3.5" fill="#ff1a1a"/><rect x="748.30" y="111.4" width="0.95" height="5.0" fill="#10f010"/><rect x="749.16" y="105.1" width="0.95" height="6.5" fill="#10f010"/><rect x="750.02" y="108.4" width="0.95" height="4.7" fill="#ff1a1a"/><rect x="750.88" y="112.4" width="0.95" height="3.5" fill="#ff1a1a"/><rect x="751.74" y="115.7" width="0.95" height="3.4" fill="#ff1a1a"/><rect x="752.60" y="116.9" width="0.95" height="4.1" fill="#10f010"/><rect x="753.46" y="118.1" width="0.95" height="2.6" fill="#ff1a1a"/><rect x="754.32" y="111.7" width="0.95" height="7.0" fill="#10f010"/><rect x="755.18" y="109.7" width="0.95" height="5.9" fill="#10f010"/><rect x="756.04" y="110.5" width="0.95" height="5.0" fill="#ff1a1a"/><rect x="756.90" y="111.8" width="0.95" height="4.9" fill="#ff1a1a"/><rect x="757.76" y="108.3" width="0.95" height="6.9" fill="#10f010"/><rect x="758.62" y="109.2" width="0.95" height="8.2" fill="#ff1a1a"/><rect x="759.48" y="110.4" width="0.95" height="7.7" fill="#ff1a1a"/><rect x="760.34" y="114.4" width="0.95" height="3.8" fill="#10f010"/><rect x="761.20" y="117.4" width="0.95" height="4.7" fill="#ff1a1a"/><rect x="762.06" y="115.8" width="0.95" height="4.9" fill="#ff1a1a"/><rect x="762.92" y="119.5" width="0.95" height="3.2" fill="#10f010"/><rect x="763.78" y="116.0" width="0.95" height="8.3" fill="#10f010"/><rect x="764.64" y="121.2" width="0.95" height="3.0" fill="#ff1a1a"/><rect x="765.50" y="123.5" width="0.95" height="1.8" fill="#10f010"/><rect x="766.36" y="125.0" width="0.95" height="5.2" fill="#10f010"/><rect x="767.22" y="121.2" width="0.95" height="3.4" fill="#10f010"/><rect x="768.08" y="121.1" width="0.95" height="5.9" fill="#10f010"/><rect x="768.94" y="118.0" width="0.95" height="12.7" fill="#ff1a1a"/><rect x="769.80" y="118.2" width="0.95" height="18.3" fill="#ff1a1a"/><rect x="770.66" y="131.0" width="0.95" height="15.0" fill="#ff1a1a"/><rect x="771.52" y="142.4" width="0.95" height="16.1" fill="#ff1a1a"/><rect x="772.38" y="147.9" width="0.95" height="9.0" fill="#10f010"/><rect x="773.24" y="145.4" width="0.95" height="10.8" fill="#10f010"/><rect x="774.10" y="144.1" width="0.95" height="5.2" fill="#10f010"/><rect x="774.96" y="144.9" width="0.95" height="3.7" fill="#10f010"/><rect x="775.82" y="139.2" width="0.95" height="5.5" fill="#10f010"/><rect x="776.68" y="138.4" width="0.95" height="10.1" fill="#10f010"/><rect x="777.54" y="137.5" width="0.95" height="3.1" fill="#10f010"/><rect x="778.40" y="137.3" width="0.95" height="3.5" fill="#ff1a1a"/><rect x="779.26" y="134.7" width="0.95" height="3.1" fill="#10f010"/><rect x="780.12" y="132.0" width="0.95" height="3.2" fill="#10f010"/><rect x="780.98" y="132.0" width="0.95" height="3.8" fill="#ff1a1a"/><rect x="781.84" y="129.4" width="0.95" height="5.9" fill="#10f010"/><rect x="782.70" y="128.1" width="0.95" height="6.1" fill="#10f010"/><rect x="783.56" y="128.1" width="0.95" height="4.2" fill="#ff1a1a"/><rect x="784.42" y="129.1" width="0.95" height="3.1" fill="#ff1a1a"/><rect x="785.28" y="128.7" width="0.95" height="10.7" fill="#10f010"/><rect x="786.14" y="133.8" width="0.95" height="2.1" fill="#ff1a1a"/><rect x="787.00" y="131.0" width="0.95" height="4.5" fill="#10f010"/><rect x="787.86" y="128.0" width="0.95" height="7.2" fill="#10f010"/><rect x="788.72" y="129.2" width="0.95" height="3.6" fill="#10f010"/><rect x="789.58" y="131.0" width="0.95" height="4.7" fill="#ff1a1a"/><rect x="790.44" y="130.4" width="0.95" height="4.8" fill="#10f010"/><rect x="791.30" y="132.6" width="0.95" height="4.2" fill="#ff1a1a"/><rect x="792.16" y="133.1" width="0.95" height="10.9" fill="#ff1a1a"/><rect x="793.02" y="133.4" width="0.95" height="10.9" fill="#ff1a1a"/><rect x="793.88" y="141.1" width="0.95" height="4.9" fill="#ff1a1a"/><rect x="794.74" y="141.5" width="0.95" height="3.5" fill="#10f010"/><rect x="795.60" y="141.5" width="0.95" height="4.2" fill="#10f010"/><rect x="796.46" y="139.5" width="0.95" height="6.1" fill="#ff1a1a"/><rect x="797.32" y="140.4" width="0.95" height="3.2" fill="#ff1a1a"/><rect x="798.18" y="139.8" width="0.95" height="5.9" fill="#ff1a1a"/><rect x="799.04" y="143.3" width="0.95" height="3.0" fill="#10f010"/><rect x="799.90" y="141.0" width="0.95" height="5.9" fill="#10f010"/><rect x="800.76" y="143.3" width="0.95" height="6.7" fill="#ff1a1a"/><rect x="801.62" y="145.9" width="0.95" height="2.4" fill="#10f010"/><rect x="802.48" y="144.7" width="0.95" height="6.1" fill="#10f010"/><rect x="803.34" y="144.2" width="0.95" height="3.6" fill="#10f010"/><rect x="804.20" y="142.3" width="0.95" height="4.4" fill="#10f010"/><rect x="805.06" y="144.0" width="0.95" height="4.3" fill="#ff1a1a"/><rect x="805.92" y="141.9" width="0.95" height="4.2" fill="#10f010"/><rect x="806.78" y="143.6" width="0.95" height="3.8" fill="#ff1a1a"/><rect x="807.64" y="141.0" width="0.95" height="4.3" fill="#10f010"/><rect x="808.50" y="144.7" width="0.95" height="2.5" fill="#10f010"/><rect x="809.36" y="147.3" width="0.95" height="3.6" fill="#10f010"/><rect x="810.22" y="147.3" width="0.95" height="14.1" fill="#ff1a1a"/><rect x="811.08" y="157.6" width="0.95" height="12.8" fill="#ff1a1a"/><rect x="811.94" y="165.6" width="0.95" height="5.8" fill="#ff1a1a"/><rect x="812.80" y="166.6" width="0.95" height="6.4" fill="#10f010"/><rect x="813.66" y="159.1" width="0.95" height="14.8" fill="#10f010"/><rect x="814.52" y="147.0" width="0.95" height="13.1" fill="#10f010"/><rect x="815.38" y="148.8" width="0.95" height="3.9" fill="#10f010"/><rect x="816.24" y="146.1" width="0.95" height="10.3" fill="#ff1a1a"/><rect x="817.10" y="145.7" width="0.95" height="6.2" fill="#10f010"/><rect x="817.96" y="147.0" width="0.95" height="3.9" fill="#10f010"/><rect x="818.82" y="147.2" width="0.95" height="4.8" fill="#ff1a1a"/><rect x="819.68" y="144.5" width="0.95" height="4.6" fill="#ff1a1a"/><rect x="820.54" y="146.2" width="0.95" height="5.9" fill="#ff1a1a"/><rect x="821.40" y="144.9" width="0.95" height="4.9" fill="#ff1a1a"/><rect x="822.26" y="143.7" width="0.95" height="4.0" fill="#10f010"/><rect x="823.12" y="145.3" width="0.95" height="4.3" fill="#10f010"/><rect x="823.98" y="144.0" width="0.95" height="2.2" fill="#10f010"/><rect x="824.84" y="139.6" width="0.95" height="3.6" fill="#10f010"/><rect x="825.70" y="141.0" width="0.95" height="1.9" fill="#10f010"/><rect x="826.56" y="135.2" width="0.95" height="7.2" fill="#10f010"/><rect x="827.42" y="136.1" width="0.95" height="15.8" fill="#ff1a1a"/><rect x="828.28" y="137.3" width="0.95" height="8.7" fill="#10f010"/><rect x="829.14" y="126.1" width="0.95" height="13.6" fill="#10f010"/><rect x="830.00" y="122.4" width="0.95" height="5.8" fill="#10f010"/><rect x="830.86" y="121.4" width="0.95" height="5.0" fill="#ff1a1a"/><rect x="831.72" y="124.6" width="0.95" height="3.0" fill="#ff1a1a"/><rect x="832.58" y="121.4" width="0.95" height="3.3" fill="#10f010"/><rect x="833.44" y="123.2" width="0.95" height="6.8" fill="#ff1a1a"/><rect x="834.30" y="120.2" width="0.95" height="3.8" fill="#10f010"/><rect x="835.16" y="118.9" width="0.95" height="5.0" fill="#10f010"/><rect x="836.02" y="118.0" width="0.95" height="5.7" fill="#10f010"/><rect x="836.88" y="118.0" width="0.95" height="3.4" fill="#10f010"/><rect x="837.74" y="117.1" width="0.95" height="4.3" fill="#ff1a1a"/><rect x="838.60" y="114.8" width="0.95" height="3.8" fill="#10f010"/><rect x="839.46" y="114.8" width="0.95" height="5.9" fill="#ff1a1a"/><rect x="840.32" y="115.3" width="0.95" height="3.3" fill="#10f010"/><rect x="841.18" y="117.1" width="0.95" height="2.6" fill="#ff1a1a"/><rect x="842.04" y="118.5" width="0.95" height="5.4" fill="#ff1a1a"/><rect x="842.90" y="119.0" width="0.95" height="6.1" fill="#ff1a1a"/><rect x="843.76" y="120.1" width="0.95" height="3.5" fill="#ff1a1a"/><rect x="844.62" y="121.4" width="0.95" height="3.4" fill="#ff1a1a"/><rect x="845.48" y="124.4" width="0.95" height="8.5" fill="#ff1a1a"/><rect x="846.34" y="127.9" width="0.95" height="4.2" fill="#ff1a1a"/><rect x="847.20" y="128.2" width="0.95" height="7.4" fill="#ff1a1a"/><rect x="848.06" y="128.9" width="0.95" height="4.6" fill="#10f010"/><rect x="848.92" y="127.3" width="0.95" height="4.3" fill="#ff1a1a"/><rect x="849.78" y="129.7" width="0.95" height="9.6" fill="#ff1a1a"/><rect x="850.64" y="137.0" width="0.95" height="8.2" fill="#ff1a1a"/><rect x="851.50" y="137.8" width="0.95" height="4.7" fill="#10f010"/><rect x="852.36" y="141.6" width="0.95" height="6.7" fill="#ff1a1a"/><rect x="853.22" y="147.7" width="0.95" height="11.7" fill="#ff1a1a"/><rect x="854.08" y="156.3" width="0.95" height="12.0" fill="#ff1a1a"/><rect x="854.94" y="163.1" width="0.95" height="12.9" fill="#ff1a1a"/><rect x="855.80" y="175.1" width="0.95" height="5.2" fill="#ff1a1a"/><rect x="856.66" y="177.7" width="0.95" height="3.9" fill="#ff1a1a"/><rect x="857.52" y="177.5" width="0.95" height="11.9" fill="#ff1a1a"/><rect x="858.38" y="185.6" width="0.95" height="11.2" fill="#ff1a1a"/><rect x="859.24" y="193.5" width="0.95" height="10.6" fill="#ff1a1a"/><rect x="860.10" y="202.1" width="0.95" height="3.0" fill="#10f010"/><rect x="860.96" y="197.2" width="0.95" height="6.6" fill="#10f010"/><rect x="861.82" y="193.8" width="0.95" height="4.4" fill="#10f010"/><rect x="862.68" y="193.7" width="0.95" height="6.2" fill="#ff1a1a"/><rect x="863.54" y="195.1" width="0.95" height="8.0" fill="#ff1a1a"/><rect x="864.40" y="191.2" width="0.95" height="11.6" fill="#10f010"/><rect x="865.26" y="193.1" width="0.95" height="7.8" fill="#ff1a1a"/><rect x="866.12" y="195.6" width="0.95" height="15.0" fill="#ff1a1a"/><rect x="866.98" y="203.4" width="0.95" height="7.0" fill="#ff1a1a"/><rect x="867.84" y="208.0" width="0.95" height="5.8" fill="#ff1a1a"/><rect x="868.70" y="206.4" width="0.95" height="12.0" fill="#ff1a1a"/><rect x="869.56" y="215.5" width="0.95" height="8.5" fill="#ff1a1a"/><rect x="870.42" y="203.0" width="0.95" height="20.4" fill="#10f010"/><rect x="871.28" y="191.9" width="0.95" height="11.2" fill="#10f010"/><rect x="872.14" y="186.7" width="0.95" height="6.3" fill="#10f010"/><rect x="873.00" y="183.0" width="0.95" height="3.9" fill="#10f010"/><rect x="68.0" y="43.0" width="0.9" height="15.0" fill="#10f010"/><rect x="72.0" y="44.0" width="0.9" height="12.0" fill="#ff1a1a"/><rect x="76.0" y="45.0" width="0.9" height="12.0" fill="#10f010"/><rect x="79.0" y="46.0" width="0.9" height="12.0" fill="#ff1a1a"/><rect x="83.0" y="47.0" width="0.9" height="13.0" fill="#10f010"/><rect x="16.0" y="93.0" width="0.9" height="13.0" fill="#ff1a1a"/><rect x="20.0" y="92.0" width="0.9" height="12.0" fill="#10f010"/><rect x="23.0" y="90.0" width="0.9" height="13.0" fill="#ff1a1a"/><rect x="34.0" y="57.0" width="0.9" height="15.0" fill="#10f010"/><rect x="38.0" y="60.0" width="0.9" height="14.0" fill="#ff1a1a"/><rect x="43.0" y="58.0" width="0.9" height="12.0" fill="#10f010"/><rect x="47.0" y="56.0" width="0.9" height="14.0" fill="#ff1a1a"/><rect x="121.0" y="62.0" width="0.9" height="23.0" fill="#10f010"/><rect x="123.0" y="66.0" width="0.9" height="22.0" fill="#10f010"/><rect x="126.0" y="61.0" width="0.9" height="19.0" fill="#ff1a1a"/><rect x="119.0" y="64.0" width="0.9" height="20.0" fill="#ff1a1a"/><rect x="135.0" y="115.0" width="0.9" height="16.0" fill="#10f010"/><rect x="139.0" y="116.0" width="0.9" height="14.0" fill="#ff1a1a"/><rect x="152.0" y="108.0" width="0.9" height="18.0" fill="#10f010"/><rect x="157.0" y="110.0" width="0.9" height="15.0" fill="#ff1a1a"/><rect x="170.0" y="118.0" width="0.9" height="18.0" fill="#10f010"/><rect x="14.0" y="95.0" width="0.9" height="14.0" fill="#ff1a1a"/><rect x="65.0" y="40.0" width="0.9" height="26.0" fill="#ff1a1a"/><rect x="104.8" y="85.0" width="0.9" height="22.0" fill="#ff1a1a"/><rect x="110.0" y="58.0" width="0.9" height="40.0" fill="#10f010"/><rect x="128.0" y="61.0" width="0.9" height="72.0" fill="#ff1a1a"/><rect x="129.0" y="90.0" width="0.9" height="43.0" fill="#ff1a1a"/><rect x="145.5" y="99.0" width="0.9" height="49.0" fill="#10f010"/><rect x="163.0" y="103.0" width="0.9" height="35.0" fill="#10f010"/><rect x="190.0" y="195.0" width="0.9" height="19.0" fill="#ff1a1a"/><rect x="204.0" y="165.0" width="0.9" height="35.0" fill="#10f010"/><rect x="209.0" y="218.0" width="0.9" height="35.0" fill="#ff1a1a"/><rect x="224.0" y="250.0" width="0.9" height="35.7" fill="#10f010"/><rect x="247.0" y="165.0" width="0.9" height="25.0" fill="#10f010"/><rect x="262.0" y="165.0" width="0.9" height="50.0" fill="#10f010"/><rect x="277.0" y="205.0" width="0.9" height="31.7" fill="#10f010"/><rect x="297.0" y="185.0" width="0.9" height="10.6" fill="#ff1a1a"/><rect x="306.0" y="151.7" width="0.9" height="20.3" fill="#10f010"/><rect x="342.5" y="88.8" width="0.9" height="41.2" fill="#10f010"/><rect x="358.0" y="125.0" width="0.9" height="15.0" fill="#ff1a1a"/><rect x="375.0" y="111.5" width="0.9" height="23.5" fill="#10f010"/><rect x="399.0" y="150.0" width="0.9" height="23.0" fill="#ff1a1a"/><rect x="415.0" y="150.0" width="0.9" height="29.3" fill="#10f010"/><rect x="432.0" y="136.5" width="0.9" height="21.5" fill="#10f010"/><rect x="452.0" y="146.5" width="0.9" height="22.5" fill="#ff1a1a"/><rect x="474.0" y="149.0" width="0.9" height="34.0" fill="#10f010"/><rect x="494.0" y="118.9" width="0.9" height="32.7" fill="#10f010"/><rect x="512.0" y="120.2" width="0.9" height="31.4" fill="#ff1a1a"/><rect x="532.0" y="121.4" width="0.9" height="22.6" fill="#10f010"/><rect x="554.0" y="150.0" width="0.9" height="24.0" fill="#ff1a1a"/><rect x="574.5" y="160.8" width="0.9" height="56.7" fill="#ff1a1a"/><rect x="576.0" y="200.0" width="0.9" height="17.5" fill="#ff1a1a"/><rect x="592.6" y="186.0" width="0.9" height="30.0" fill="#10f010"/><rect x="614.0" y="125.3" width="0.9" height="40.2" fill="#10f010"/><rect x="638.0" y="112.8" width="0.9" height="12.2" fill="#10f010"/><rect x="681.0" y="100.0" width="0.9" height="10.0" fill="#ff1a1a"/><rect x="697.0" y="85.0" width="0.9" height="15.0" fill="#10f010"/><rect x="710.0" y="75.1" width="0.9" height="24.9" fill="#ff1a1a"/><rect x="713.0" y="100.0" width="0.9" height="19.0" fill="#ff1a1a"/><rect x="731.0" y="110.0" width="0.9" height="20.4" fill="#ff1a1a"/><rect x="735.0" y="102.8" width="0.9" height="31.4" fill="#10f010"/><rect x="750.0" y="104.0" width="0.9" height="22.6" fill="#10f010"/><rect x="769.0" y="119.0" width="0.9" height="16.0" fill="#ff1a1a"/><rect x="772.0" y="140.0" width="0.9" height="24.3" fill="#ff1a1a"/><rect x="784.0" y="129.1" width="0.9" height="10.9" fill="#10f010"/><rect x="794.0" y="135.0" width="0.9" height="25.5" fill="#ff1a1a"/><rect x="801.0" y="145.0" width="0.9" height="15.5" fill="#10f010"/><rect x="812.0" y="163.0" width="0.9" height="22.7" fill="#ff1a1a"/><rect x="815.0" y="145.5" width="0.9" height="35.2" fill="#10f010"/><rect x="828.0" y="132.0" width="0.9" height="25.8" fill="#10f010"/><rect x="830.0" y="118.8" width="0.9" height="16.2" fill="#10f010"/><rect x="839.0" y="115.0" width="0.9" height="10.0" fill="#10f010"/><rect x="849.0" y="122.6" width="0.9" height="17.4" fill="#ff1a1a"/><rect x="860.0" y="190.0" width="0.9" height="19.3" fill="#ff1a1a"/><rect x="869.0" y="200.0" width="0.9" height="30.7" fill="#ff1a1a"/><rect x="870.0" y="181.7" width="0.9" height="47.7" fill="#10f010"/><rect x="872.0" y="181.7" width="0.9" height="26.3" fill="#10f010"/><rect x="27.0" y="60.0" width="0.9" height="35.0" fill="#10f010"/><rect x="90.0" y="65.0" width="0.9" height="25.0" fill="#ff1a1a"/><rect x="186.0" y="160.0" width="0.9" height="40.0" fill="#ff1a1a"/></g>
<text x="922" y="88.42" font-family="Liberation Sans" font-size="7" fill="#f0f0f0" text-anchor="end" font-weight="normal" textLength="24.7" lengthAdjust="spacingAndGlyphs" stroke="#f0f0f0" stroke-width="0.15">2305.36</text>
<text x="922" y="112.42" font-family="Liberation Sans" font-size="7" fill="#f0f0f0" text-anchor="end" font-weight="normal" textLength="24.7" lengthAdjust="spacingAndGlyphs" stroke="#f0f0f0" stroke-width="0.15">2279.11</text>
<text x="922" y="125.42" font-family="Liberation Sans" font-size="7" fill="#f0f0f0" text-anchor="end" font-weight="normal" textLength="24.7" lengthAdjust="spacingAndGlyphs" stroke="#f0f0f0" stroke-width="0.15">2264.15</text>
<text x="922" y="154.42" font-family="Liberation Sans" font-size="7" fill="#f0f0f0" text-anchor="end" font-weight="normal" textLength="24.7" lengthAdjust="spacingAndGlyphs" stroke="#f0f0f0" stroke-width="0.15">2232.82</text>
<text x="922" y="164.42" font-family="Liberation Sans" font-size="7" fill="#f0f0f0" text-anchor="end" font-weight="normal" textLength="24.7" lengthAdjust="spacingAndGlyphs" stroke="#f0f0f0" stroke-width="0.15">2222.28</text>
<text x="922" y="180.42" font-family="Liberation Sans" font-size="7" fill="#f0f0f0" text-anchor="end" font-weight="normal" textLength="24.7" lengthAdjust="spacingAndGlyphs" stroke="#f0f0f0" stroke-width="0.15">2204.32</text>
<text x="922" y="207.42" font-family="Liberation Sans" font-size="7" fill="#f0f0f0" text-anchor="end" font-weight="normal" textLength="24.7" lengthAdjust="spacingAndGlyphs" stroke="#f0f0f0" stroke-width="0.15">2175.33</text>
<text x="922" y="222.42" font-family="Liberation Sans" font-size="7" fill="#f0f0f0" text-anchor="end" font-weight="normal" textLength="24.7" lengthAdjust="spacingAndGlyphs" stroke="#f0f0f0" stroke-width="0.15">2159.96</text>
<text x="84.3" y="135.32" font-family="Liberation Sans" font-size="7" fill="#f0f0f0" text-anchor="middle" font-weight="normal" textLength="20.4" lengthAdjust="spacingAndGlyphs" stroke="#f0f0f0" stroke-width="0.15">T1 (hit)</text>
<text x="80.3" y="219.92" font-family="Liberation Sans" font-size="7" fill="#f0f0f0" text-anchor="middle" font-weight="normal" textLength="23.1" lengthAdjust="spacingAndGlyphs" stroke="#f0f0f0" stroke-width="0.15">T2 zone</text>
<line x1="67.4" y1="223.5" x2="94" y2="223.5" stroke="#2a2a2a" stroke-width="1"/>
<line x1="12.5" y1="148" x2="68.5" y2="27" stroke="#b8b8b8" stroke-width="1"/>
<line x1="20.5" y1="63.7" x2="67" y2="31.5" stroke="#b8b8b8" stroke-width="1"/>
<line x1="47.7" y1="36.9" x2="625.8" y2="138.4" stroke="#b8b8b8" stroke-width="1"/>
<line x1="121.3" y1="50.6" x2="262.5" y2="240" stroke="#b8b8b8" stroke-width="1"/>
<line x1="182.6" y1="205.8" x2="225.3" y2="287.7" stroke="#b8b8b8" stroke-width="1"/>
<line x1="263" y1="224.9" x2="284.4" y2="240" stroke="#b8b8b8" stroke-width="1"/>
<line x1="331.5" y1="90.6" x2="499" y2="164.9" stroke="#b8b8b8" stroke-width="1"/>
<line x1="399.3" y1="178" x2="480.3" y2="186.7" stroke="#b8b8b8" stroke-width="1"/>
<line x1="571" y1="224.4" x2="703" y2="73.5" stroke="#b8b8b8" stroke-width="1"/>
<line x1="654.2" y1="91.4" x2="721.4" y2="71.4" stroke="#b8b8b8" stroke-width="1"/>
<line x1="653" y1="96.4" x2="716.4" y2="119.1" stroke="#b8b8b8" stroke-width="1"/>
<line x1="695" y1="63.8" x2="830.2" y2="157.8" stroke="#b8b8b8" stroke-width="1"/>
<text x="926" y="36.59" font-family="Liberation Sans" font-size="8.3" fill="#111" text-anchor="start" font-weight="normal" textLength="28.3" lengthAdjust="spacingAndGlyphs">2370.00</text>
<rect x="922.7" y="33.1" width="1.2" height="1" fill="#858585"/>
<rect x="922.7" y="41.75" width="1.2" height="1" fill="#858585"/>
<text x="926" y="53.89" font-family="Liberation Sans" font-size="8.3" fill="#111" text-anchor="start" font-weight="normal" textLength="28.3" lengthAdjust="spacingAndGlyphs">2350.00</text>
<rect x="922.7" y="50.4" width="1.2" height="1" fill="#858585"/>
<rect x="922.7" y="58.849999999999994" width="1.2" height="1" fill="#858585"/>
<text x="926" y="70.79" font-family="Liberation Sans" font-size="8.3" fill="#111" text-anchor="start" font-weight="normal" textLength="28.3" lengthAdjust="spacingAndGlyphs">2330.00</text>
<rect x="922.7" y="67.3" width="1.2" height="1" fill="#858585"/>
<rect x="922.7" y="76.19999999999999" width="1.2" height="1" fill="#858585"/>
<text x="926" y="88.59" font-family="Liberation Sans" font-size="8.3" fill="#111" text-anchor="start" font-weight="normal" textLength="28.3" lengthAdjust="spacingAndGlyphs">2310.00</text>
<rect x="922.7" y="85.1" width="1.2" height="1" fill="#858585"/>
<rect x="922.7" y="94.3" width="1.2" height="1" fill="#858585"/>
<text x="926" y="106.99" font-family="Liberation Sans" font-size="8.3" fill="#111" text-anchor="start" font-weight="normal" textLength="28.3" lengthAdjust="spacingAndGlyphs">2290.00</text>
<rect x="922.7" y="103.5" width="1.2" height="1" fill="#858585"/>
<rect x="922.7" y="112.3" width="1.2" height="1" fill="#858585"/>
<text x="926" y="124.59" font-family="Liberation Sans" font-size="8.3" fill="#111" text-anchor="start" font-weight="normal" textLength="28.3" lengthAdjust="spacingAndGlyphs">2270.00</text>
<rect x="922.7" y="121.1" width="1.2" height="1" fill="#858585"/>
<rect x="922.7" y="130.05" width="1.2" height="1" fill="#858585"/>
<text x="926" y="142.49" font-family="Liberation Sans" font-size="8.3" fill="#111" text-anchor="start" font-weight="normal" textLength="28.3" lengthAdjust="spacingAndGlyphs">2250.00</text>
<rect x="922.7" y="139.0" width="1.2" height="1" fill="#858585"/>
<rect x="922.7" y="148.35" width="1.2" height="1" fill="#858585"/>
<text x="926" y="161.19" font-family="Liberation Sans" font-size="8.3" fill="#111" text-anchor="start" font-weight="normal" textLength="28.3" lengthAdjust="spacingAndGlyphs">2230.00</text>
<rect x="922.7" y="157.7" width="1.2" height="1" fill="#858585"/>
<rect x="922.7" y="166.45" width="1.2" height="1" fill="#858585"/>
<text x="926" y="178.69" font-family="Liberation Sans" font-size="8.3" fill="#111" text-anchor="start" font-weight="normal" textLength="28.3" lengthAdjust="spacingAndGlyphs">2210.00</text>
<rect x="922.7" y="175.2" width="1.2" height="1" fill="#858585"/>
<rect x="922.7" y="184.89999999999998" width="1.2" height="1" fill="#858585"/>
<text x="926" y="198.09" font-family="Liberation Sans" font-size="8.3" fill="#111" text-anchor="start" font-weight="normal" textLength="28.3" lengthAdjust="spacingAndGlyphs">2190.00</text>
<rect x="922.7" y="194.6" width="1.2" height="1" fill="#858585"/>
<rect x="922.7" y="204.05" width="1.2" height="1" fill="#858585"/>
<text x="926" y="216.99" font-family="Liberation Sans" font-size="8.3" fill="#111" text-anchor="start" font-weight="normal" textLength="28.3" lengthAdjust="spacingAndGlyphs">2170.00</text>
<rect x="922.7" y="213.5" width="1.2" height="1" fill="#858585"/>
<rect x="922.7" y="222.95" width="1.2" height="1" fill="#858585"/>
<text x="926" y="235.89" font-family="Liberation Sans" font-size="8.3" fill="#111" text-anchor="start" font-weight="normal" textLength="28.3" lengthAdjust="spacingAndGlyphs">2150.00</text>
<rect x="922.7" y="232.4" width="1.2" height="1" fill="#858585"/>
<rect x="922.7" y="241.95" width="1.2" height="1" fill="#858585"/>
<text x="926" y="254.99" font-family="Liberation Sans" font-size="8.3" fill="#111" text-anchor="start" font-weight="normal" textLength="28.3" lengthAdjust="spacingAndGlyphs">2130.00</text>
<rect x="922.7" y="251.5" width="1.2" height="1" fill="#858585"/>
<rect x="922.7" y="261.15" width="1.2" height="1" fill="#858585"/>
<text x="926" y="274.29" font-family="Liberation Sans" font-size="8.3" fill="#111" text-anchor="start" font-weight="normal" textLength="28.3" lengthAdjust="spacingAndGlyphs">2110.00</text>
<rect x="922.7" y="270.8" width="1.2" height="1" fill="#858585"/>
<rect x="922.7" y="280.35" width="1.2" height="1" fill="#858585"/>
<text x="926" y="293.39" font-family="Liberation Sans" font-size="8.3" fill="#111" text-anchor="start" font-weight="normal" textLength="28.3" lengthAdjust="spacingAndGlyphs">2090.00</text>
<rect x="922.7" y="289.9" width="1.2" height="1" fill="#858585"/>
<path d="M922.3,182.4 L925.3,179.5 L925.3,178 L955.8,178 L955.8,187.6 L925.3,187.6 L925.3,185.3 Z" fill="#d6d62a"/>
<text x="926.6" y="186.00" font-family="Liberation Sans" font-size="8.6" fill="#111" text-anchor="start" font-weight="normal" textLength="27.4" lengthAdjust="spacingAndGlyphs">2203.20</text>
<line x1="878.5" y1="185" x2="912" y2="280.5" stroke="#ecec20" stroke-width="1.5" stroke-dasharray="3,2"/>
<path d="M913.5,284.2 L908.6,277.6 L915.6,276 Z" fill="#ecec20"/>
<rect x="5.6" y="281.3" width="1.6" height="7" fill="#3a8ad8"/>
<rect x="4.2" y="281.3" width="4.4" height="1.2" fill="#3a8ad8"/>
<rect x="4.2" y="287.1" width="4.4" height="1.2" fill="#3a8ad8"/>
<rect x="8.2" y="283.8" width="3.2" height="0.9" fill="#30c030"/>
<rect x="9.35" y="282.6" width="0.9" height="3.3" fill="#30c030"/>
<rect x="2.2" y="293.5" width="1" height="4.5" fill="#6a6a6a"/>
<rect x="4.3" y="292" width="1" height="6" fill="#6a6a6a"/>
<rect x="8.4" y="292.8" width="1" height="5.199999999999989" fill="#6a6a6a"/>
<rect x="10" y="294.5" width="1" height="3.5" fill="#6a6a6a"/>
<path d="M4.6,303.2 L8.6,306.8 M8.6,303.2 L4.6,306.8" stroke="#e0e0e0" stroke-width="1.3"/>
<path d="M4.6,396.6 L8.6,400.2 M8.6,396.6 L4.6,400.2" stroke="#e0e0e0" stroke-width="1.3"/>
<line x1="13" y1="376.3" x2="922.5" y2="376.3" stroke="#c4c4c4" stroke-width="1"/>
<rect x="13" y="302" width="56" height="10" fill="#1c1c1c"/>
<text x="17" y="309.90" font-family="Liberation Sans" font-size="7.5" fill="#d8d8d8" text-anchor="start" font-weight="bold" textLength="11" lengthAdjust="spacingAndGlyphs">RSI</text>
<line x1="37" y1="307" x2="46" y2="307" stroke="#2a88d8" stroke-width="1.6"/>
<text x="49" y="309.90" font-family="Liberation Sans" font-size="7.5" fill="#c8c8c8" text-anchor="start" font-weight="normal" textLength="11" lengthAdjust="spacingAndGlyphs">(14)</text>
<path d="M63,306 L66,304.5 L68,308.5 L64.5,309.5 Z" fill="#6aa0d8"/>
<polyline points="12.5,329.2 13.6,331.1 14.7,331.6 15.8,329.4 16.9,328.3 18.0,330.4 19.1,331.4 20.2,332.5 21.3,329.6 22.4,330.9 23.5,335.4 24.6,332.0 25.7,326.7 26.8,324.6 27.9,323.9 29.0,324.6 30.1,329.4 31.2,325.2 32.3,322.7 33.4,320.3 34.5,321.9 35.6,323.6 36.7,324.6 37.8,326.9 38.9,329.2 40.0,335.0 41.1,340.5 42.2,337.7 43.3,333.2 44.4,336.9 45.5,335.9 46.6,338.4 47.7,335.9 48.8,337.6 49.9,331.8 51.0,327.8 52.1,331.5 53.2,325.6 54.3,326.4 55.4,323.7 56.5,326.9 57.6,331.1 58.7,330.7 59.8,330.2 60.9,327.8 62.0,331.7 63.1,343.4 64.2,350.8 65.3,352.1 66.4,346.3 67.5,346.8 68.6,344.5 69.7,344.0 70.8,339.5 71.9,343.7 73.0,344.8 74.1,349.3 75.2,347.5 76.3,346.5 77.4,346.2 78.5,349.7 79.6,350.0 80.7,352.3 81.8,348.4 82.9,348.3 84.0,346.8 85.1,355.6 86.2,357.7 87.3,359.9 88.4,360.0 89.5,360.5 90.6,362.7 91.7,365.8 92.8,368.4 93.9,368.3 95.0,369.1 96.1,368.0 97.2,367.2 98.3,366.3 99.4,367.2 100.5,368.3 101.6,364.2 102.7,363.4 103.8,369.5 104.9,369.2 106.0,365.9 107.1,360.7 108.2,348.8 109.3,343.2 110.4,334.9 111.5,331.9 112.6,332.2 113.7,331.9 114.8,331.1 115.9,334.7 117.0,338.3 118.1,342.1 119.2,344.1 120.3,346.2 121.4,352.1 122.5,352.9 123.6,353.4 124.7,352.1 125.8,342.4 126.9,341.0 128.0,345.6 129.1,351.1 130.2,359.2 131.3,366.0 132.4,361.1 133.5,361.5 134.6,361.7 135.7,359.9 136.8,356.4 137.9,361.2 139.0,363.5 140.1,358.2 141.2,352.8 142.3,354.2 143.4,355.9 144.5,356.4 145.6,346.1 146.7,343.3 147.8,346.3 148.9,344.8 150.0,349.8 151.1,347.9 152.2,347.7 153.3,348.9 154.4,350.1 155.5,350.4 156.6,350.5 157.7,347.3 158.8,348.9 159.9,348.6 161.0,348.2 162.1,345.1 163.2,345.8 164.3,353.4 165.4,355.3 166.5,352.5 167.6,351.1 168.7,350.7 169.8,350.4 170.9,348.6 172.0,349.5 173.1,348.9 174.2,355.1 175.3,356.6 176.4,355.7 177.5,356.8 178.6,356.7 179.7,360.0 180.8,360.3 181.9,363.3 183.0,361.4 184.1,362.0 185.2,361.5 186.3,368.4 187.4,367.7 188.5,369.4 189.6,373.8 190.7,370.3 191.8,376.4 192.9,371.0 194.0,368.4 195.1,363.1 196.2,356.5 197.3,358.1 198.4,354.5 199.5,355.6 200.6,348.8 201.7,348.2 202.8,349.2 203.9,347.7 205.0,335.7 206.1,340.7 207.2,349.8 208.3,355.8 209.4,359.2 210.5,362.2 211.6,360.4 212.7,358.1 213.8,358.5 214.9,360.9 216.0,359.4 217.1,360.8 218.2,358.1 219.3,359.1 220.4,360.0 221.5,365.2 222.6,366.4 223.7,359.1 224.8,356.2 225.9,344.5 227.0,340.6 228.1,339.5 229.2,336.3 230.3,334.6 231.4,335.4 232.5,334.4 233.6,332.5 234.7,330.9 235.8,330.4 236.9,333.1 238.0,334.0 239.1,333.7 240.2,336.8 241.3,333.2 242.4,332.0 243.5,336.5 244.6,337.6 245.7,339.9 246.8,341.4 247.9,334.1 249.0,332.0 250.1,335.2 251.2,340.9 252.3,345.3 253.4,343.2 254.5,348.9 255.6,348.4 256.7,347.8 257.8,346.6 258.9,346.8 260.0,345.3 261.1,342.7 262.2,335.8 263.3,347.3 264.4,354.4 265.5,359.2 266.6,360.1 267.7,356.6 268.8,356.6 269.9,357.7 271.0,360.5 272.1,355.4 273.2,353.0 274.3,351.4 275.4,355.1 276.5,354.1 277.6,352.4 278.7,353.6 279.8,354.1 280.9,362.0 282.0,354.7 283.1,346.2 284.2,337.9 285.3,337.4 286.4,339.8 287.5,337.6 288.6,336.3 289.7,335.3 290.8,335.2 291.9,336.7 293.0,336.7 294.1,339.4 295.2,340.6 296.3,340.0 297.4,340.5 298.5,340.8 299.6,338.7 300.7,337.5 301.8,329.5 302.9,329.8 304.0,326.6 305.1,325.7 306.2,326.8 307.3,332.0 308.4,334.1 309.5,336.2 310.6,336.3 311.7,338.1 312.8,341.0 313.9,340.3 315.0,336.8 316.1,333.9 317.2,331.9 318.3,329.3 319.4,331.8 320.5,331.3 321.6,330.9 322.7,334.0 323.8,331.4 324.9,332.1 326.0,330.2 327.1,325.2 328.2,323.7 329.3,323.7 330.4,326.8 331.5,327.7 332.6,324.1 333.7,327.2 334.8,324.8 335.9,324.4 337.0,323.8 338.1,323.8 339.2,321.5 340.3,321.8 341.4,315.4 342.5,315.2 343.6,318.7 344.7,325.0 345.8,328.1 346.9,328.6 348.0,332.1 349.1,332.5 350.2,336.1 351.3,332.9 352.4,329.1 353.5,337.4 354.6,343.4 355.7,347.0 356.8,355.7 357.9,359.3 359.0,355.9 360.1,352.5 361.2,349.9 362.3,350.3 363.4,353.0 364.5,355.7 365.6,361.5 366.7,358.8 367.8,356.2 368.9,350.4 370.0,353.5 371.1,355.9 372.2,348.7 373.3,348.2 374.4,340.7 375.5,334.6 376.6,335.7 377.7,338.6 378.8,344.5 379.9,346.5 381.0,349.2 382.1,345.1 383.2,345.7 384.3,349.9 385.4,348.5 386.5,349.8 387.6,352.0 388.7,352.7 389.8,348.1 390.9,351.2 392.0,353.0 393.1,354.2 394.2,356.4 395.3,360.6 396.4,366.6 397.5,367.1 398.6,365.8 399.7,363.3 400.8,361.0 401.9,360.6 403.0,355.9 404.1,351.2 405.2,352.4 406.3,348.3 407.4,348.2 408.5,347.7 409.6,347.7 410.7,348.1 411.8,349.9 412.9,353.9 414.0,350.1 415.1,359.4 416.2,356.9 417.3,351.9 418.4,347.5 419.5,343.3 420.6,336.4 421.7,337.0 422.8,338.9 423.9,343.8 425.0,349.4 426.1,346.0 427.2,342.7 428.3,341.4 429.4,339.5 430.5,340.4 431.6,343.4 432.7,344.2 433.8,345.9 434.9,346.9 436.0,350.6 437.1,349.8 438.2,348.3 439.3,347.0 440.4,346.6 441.5,346.5 442.6,348.8 443.7,349.5 444.8,354.1 445.9,354.3 447.0,356.9 448.1,353.7 449.2,351.8 450.3,349.5 451.4,347.0 452.5,339.8 453.6,348.0 454.7,358.9 455.8,354.3 456.9,351.2 458.0,346.9 459.1,348.3 460.2,346.4 461.3,350.7 462.4,349.4 463.5,349.4 464.6,354.1 465.7,352.1 466.8,356.3 467.9,350.0 469.0,344.5 470.1,340.8 471.2,348.4 472.3,357.0 473.4,356.8 474.5,353.4 475.6,351.8 476.7,357.3 477.8,357.4 478.9,349.7 480.0,346.3 481.1,346.7 482.2,346.5 483.3,345.7 484.4,343.7 485.5,345.4 486.6,342.5 487.7,338.8 488.8,343.0 489.9,342.6 491.0,342.0 492.1,338.9 493.2,334.5 494.3,328.8 495.4,326.3 496.5,328.0 497.6,334.1 498.7,338.9 499.8,339.8 500.9,339.5 502.0,339.9 503.1,341.5 504.2,335.1 505.3,339.4 506.4,337.9 507.5,340.9 508.6,335.2 509.7,327.5 510.8,329.9 511.9,329.0 513.0,337.3 514.1,346.2 515.2,350.3 516.3,351.6 517.4,348.9 518.5,345.4 519.6,341.9 520.7,344.8 521.8,346.8 522.9,347.1 524.0,347.5 525.1,348.0 526.2,347.3 527.3,345.0 528.4,342.3 529.5,341.1 530.6,335.4 531.7,335.4 532.8,339.1 533.9,349.2 535.0,344.4 536.1,338.8 537.2,342.0 538.3,348.4 539.4,347.9 540.5,350.0 541.6,354.5 542.7,351.5 543.8,349.4 544.9,353.1 546.0,351.5 547.1,355.7 548.2,351.8 549.3,354.0 550.4,355.8 551.5,356.8 552.6,349.2 553.7,358.3 554.8,365.5 555.9,364.2 557.0,363.7 558.1,361.0 559.2,357.0 560.3,353.5 561.4,352.5 562.5,353.8 563.6,356.3 564.7,350.9 565.8,349.1 566.9,350.8 568.0,352.4 569.1,355.4 570.2,364.3 571.3,364.6 572.4,360.2 573.5,364.2 574.6,368.1 575.7,374.6 576.8,377.0 577.9,367.8 579.0,358.4 580.1,359.4 581.2,360.6 582.3,360.4 583.4,360.1 584.5,357.6 585.6,354.5 586.7,350.7 587.8,351.3 588.9,343.6 590.0,349.9 591.1,357.1 592.2,346.0 593.3,341.5 594.4,337.1 595.5,335.0 596.6,331.6 597.7,328.4 598.8,331.7 599.9,339.1 601.0,337.0 602.1,336.9 603.2,337.4 604.3,337.0 605.4,338.1 606.5,336.7 607.6,337.2 608.7,339.6 609.8,338.1 610.9,335.7 612.0,333.8 613.1,328.7 614.2,324.9 615.3,326.7 616.4,344.1 617.5,344.5 618.6,346.6 619.7,342.9 620.8,341.5 621.9,341.0 623.0,341.4 624.1,342.3 625.2,341.9 626.3,337.1 627.4,343.8 628.5,344.0 629.6,344.8 630.7,349.4 631.8,342.1 632.9,340.4 634.0,334.0 635.1,329.6 636.2,331.1 637.3,333.7 638.4,334.6 639.5,332.3 640.6,334.7 641.7,334.5 642.8,332.9 643.9,337.0 645.0,333.6 646.1,333.0 647.2,332.7 648.3,331.6 649.4,330.6 650.5,330.0 651.6,328.5 652.7,325.4 653.8,324.2 654.9,322.4 656.0,325.8 657.1,325.7 658.2,329.0 659.3,328.7 660.4,329.6 661.5,331.0 662.6,329.0 663.7,333.0 664.8,327.7 665.9,331.9 667.0,336.4 668.1,341.8 669.2,340.4 670.3,337.5 671.4,333.5 672.5,333.2 673.6,341.5 674.7,346.4 675.8,345.9 676.9,344.2 678.0,344.3 679.1,346.6 680.2,346.5 681.3,347.0 682.4,350.8 683.5,348.8 684.6,343.8 685.7,344.8 686.8,345.7 687.9,347.6 689.0,351.6 690.1,354.9 691.2,348.3 692.3,341.6 693.4,343.7 694.5,349.3 695.6,347.8 696.7,340.2 697.8,337.9 698.9,335.6 700.0,336.2 701.1,334.6 702.2,335.0 703.3,332.8 704.4,329.4 705.5,332.1 706.6,331.0 707.7,330.6 708.8,326.7 709.9,327.7 711.0,331.5 712.1,342.5 713.2,355.0 714.3,361.5 715.4,354.2 716.5,350.2 717.6,349.6 718.7,353.0 719.8,355.7 720.9,353.9 722.0,351.0 723.1,353.4 724.2,355.9 725.3,359.1 726.4,360.3 727.5,361.8 728.6,364.3 729.7,364.7 730.8,364.1 731.9,363.6 733.0,363.1 734.1,362.5 735.2,362.0 736.3,361.5 737.4,360.9 738.5,360.4 739.6,359.9 740.7,359.3 741.8,358.8 742.9,358.3 744.0,357.7 745.1,357.2 746.2,356.7 747.3,356.1 748.4,355.6 749.5,355.1 750.6,354.5 751.7,354.0 752.8,353.5 753.9,353.0 755.0,352.4 756.1,351.9 757.2,351.4 758.3,350.8 759.4,350.3 760.5,349.9 761.6,349.8 762.7,349.7 763.8,349.5 764.9,349.4 766.0,349.2 767.1,349.1 768.2,349.0 769.3,348.8 770.4,348.7 771.5,348.6 772.6,348.4 773.7,348.3 774.8,348.1 775.9,348.0 777.0,347.9 778.1,347.7 779.2,347.6 780.3,347.5 781.4,347.3 782.5,347.2 783.6,347.0 784.7,346.9 785.8,346.8 786.9,346.6 788.0,346.5 789.1,346.4 790.2,346.2 791.3,346.1 792.4,345.9 793.5,345.8 794.6,345.7 795.7,345.5 796.8,345.4 797.9,345.3 799.0,345.1 800.1,345.0 801.2,344.6 802.3,344.2 803.4,343.7 804.5,343.3 805.6,342.9 806.7,342.5 807.8,342.1 808.9,341.7 810.0,341.3 811.1,340.9 812.2,340.5 813.3,340.1 814.4,339.7 815.5,339.3 816.6,338.9 817.7,338.5 818.8,338.1 819.9,337.7 821.0,337.2 822.1,336.8 823.2,336.4 824.3,336.0 825.4,335.6 826.5,335.2 827.6,334.8 828.7,334.4 829.8,334.0 830.9,333.6 832.0,333.2 833.1,332.8 834.2,332.4 835.3,332.0 836.4,331.6 837.5,331.2 838.6,329.2 839.7,330.8 840.8,332.5 841.9,333.0 843.0,335.0 844.1,335.8 845.2,346.6 846.3,351.8 847.4,350.7 848.5,349.0 849.6,346.9 850.7,353.7 851.8,352.9 852.9,356.7 854.0,360.6 855.1,369.1 856.2,369.9 857.3,368.8 858.4,368.5 859.5,370.2 860.6,374.3 861.7,367.5 862.8,367.9 863.9,362.9 865.0,365.2 866.1,364.6 867.2,368.4 868.3,374.1 869.4,353.9 870.5,348.1 871.6,346.5" fill="none" stroke="#1f80d4" stroke-width="1.25" stroke-linejoin="round"/>
<line x1="25" y1="318.75" x2="64.5" y2="325.5" stroke="#d0d0d0" stroke-width="1"/>
<line x1="183.75" y1="378" x2="228.75" y2="371" stroke="#d0d0d0" stroke-width="1"/>
<line x1="391.25" y1="373.75" x2="483.75" y2="360" stroke="#d0d0d0" stroke-width="1"/>
<line x1="611.25" y1="317.5" x2="713.25" y2="326" stroke="#d0d0d0" stroke-width="1"/>
<text x="922" y="374.92" font-family="Liberation Sans" font-size="7" fill="#e4e4e4" text-anchor="end" font-weight="normal" textLength="20" lengthAdjust="spacingAndGlyphs">17.433</text>
<text x="926" y="322.59" font-family="Liberation Sans" font-size="8.3" fill="#111" text-anchor="start" font-weight="normal" textLength="8.5" lengthAdjust="spacingAndGlyphs">80</text>
<text x="926" y="340.79" font-family="Liberation Sans" font-size="8.3" fill="#111" text-anchor="start" font-weight="normal" textLength="8.5" lengthAdjust="spacingAndGlyphs">60</text>
<text x="926" y="358.79" font-family="Liberation Sans" font-size="8.3" fill="#111" text-anchor="start" font-weight="normal" textLength="8.5" lengthAdjust="spacingAndGlyphs">40</text>
<text x="926" y="376.99" font-family="Liberation Sans" font-size="8.3" fill="#111" text-anchor="start" font-weight="normal" textLength="8.5" lengthAdjust="spacingAndGlyphs">20</text>
<rect x="13" y="395.3" width="215" height="9.6" fill="#1c1c1c"/>
<g shape-rendering="crispEdges"><rect x="15" y="432.0" width="1" height="0.9" fill="#3c3c3c"/><rect x="17" y="432.0" width="1" height="1.5" fill="#3c3c3c"/><rect x="19" y="432.0" width="1" height="1.6" fill="#3c3c3c"/><rect x="21" y="432.0" width="1" height="1.6" fill="#3c3c3c"/><rect x="23" y="432.0" width="1" height="2.6" fill="#3c3c3c"/><rect x="25" y="432.0" width="1" height="3.1" fill="#3c3c3c"/><rect x="27" y="432.0" width="1" height="0.3" fill="#3c3c3c"/><rect x="29" y="430.6" width="1" height="1.4" fill="#3c3c3c"/><rect x="31" y="429.2" width="1" height="2.8" fill="#3c3c3c"/><rect x="33" y="428.9" width="1" height="3.1" fill="#3c3c3c"/><rect x="35" y="430.1" width="1" height="1.9" fill="#3c3c3c"/><rect x="37" y="431.6" width="1" height="0.4" fill="#3c3c3c"/><rect x="39" y="432.0" width="1" height="1.1" fill="#3c3c3c"/><rect x="41" y="432.0" width="1" height="6.5" fill="#3c3c3c"/><rect x="43" y="432.0" width="1" height="7.0" fill="#3c3c3c"/><rect x="45" y="432.0" width="1" height="6.3" fill="#3c3c3c"/><rect x="47" y="432.0" width="1" height="5.1" fill="#3c3c3c"/><rect x="49" y="432.0" width="1" height="4.0" fill="#3c3c3c"/><rect x="51" y="432.0" width="1" height="1.3" fill="#3c3c3c"/><rect x="53" y="430.5" width="1" height="1.5" fill="#3c3c3c"/><rect x="55" y="429.3" width="1" height="2.7" fill="#3c3c3c"/><rect x="57" y="431.5" width="1" height="0.5" fill="#3c3c3c"/><rect x="59" y="432.0" width="1" height="0.8" fill="#3c3c3c"/><rect x="61" y="432.0" width="1" height="1.8" fill="#3c3c3c"/><rect x="63" y="432.0" width="1" height="4.1" fill="#3c3c3c"/><rect x="65" y="432.0" width="1" height="6.9" fill="#3c3c3c"/><rect x="67" y="432.0" width="1" height="6.9" fill="#3c3c3c"/><rect x="69" y="432.0" width="1" height="4.8" fill="#3c3c3c"/><rect x="71" y="432.0" width="1" height="2.9" fill="#3c3c3c"/><rect x="73" y="432.0" width="1" height="2.2" fill="#3c3c3c"/><rect x="75" y="432.0" width="1" height="2.9" fill="#3c3c3c"/><rect x="77" y="432.0" width="1" height="2.7" fill="#3c3c3c"/><rect x="79" y="432.0" width="1" height="2.1" fill="#3c3c3c"/><rect x="81" y="432.0" width="1" height="2.1" fill="#3c3c3c"/><rect x="83" y="432.0" width="1" height="2.4" fill="#3c3c3c"/><rect x="85" y="432.0" width="1" height="2.7" fill="#3c3c3c"/><rect x="87" y="432.0" width="1" height="4.3" fill="#3c3c3c"/><rect x="89" y="432.0" width="1" height="6.2" fill="#3c3c3c"/><rect x="91" y="432.0" width="1" height="7.6" fill="#3c3c3c"/><rect x="93" y="432.0" width="1" height="7.9" fill="#3c3c3c"/><rect x="95" y="432.0" width="1" height="6.6" fill="#3c3c3c"/><rect x="97" y="432.0" width="1" height="4.6" fill="#3c3c3c"/><rect x="99" y="432.0" width="1" height="2.3" fill="#3c3c3c"/><rect x="101" y="432.0" width="1" height="1.0" fill="#3c3c3c"/><rect x="109" y="421.2" width="1" height="10.8" fill="#3c3c3c"/><rect x="111" y="415.4" width="1" height="16.6" fill="#3c3c3c"/><rect x="113" y="415.9" width="1" height="16.1" fill="#3c3c3c"/><rect x="115" y="419.3" width="1" height="12.7" fill="#3c3c3c"/><rect x="117" y="425.4" width="1" height="6.6" fill="#3c3c3c"/><rect x="119" y="431.0" width="1" height="1.0" fill="#3c3c3c"/><rect x="121" y="432.0" width="1" height="1.9" fill="#3c3c3c"/><rect x="123" y="432.0" width="1" height="2.7" fill="#3c3c3c"/><rect x="125" y="432.0" width="1" height="3.1" fill="#3c3c3c"/><rect x="127" y="432.0" width="1" height="4.2" fill="#3c3c3c"/><rect x="129" y="432.0" width="1" height="5.5" fill="#3c3c3c"/><rect x="131" y="432.0" width="1" height="16.8" fill="#3c3c3c"/><rect x="133" y="432.0" width="1" height="18.2" fill="#3c3c3c"/><rect x="135" y="432.0" width="1" height="14.7" fill="#3c3c3c"/><rect x="137" y="432.0" width="1" height="8.9" fill="#3c3c3c"/><rect x="139" y="432.0" width="1" height="5.4" fill="#3c3c3c"/><rect x="143" y="428.8" width="1" height="3.2" fill="#3c3c3c"/><rect x="145" y="426.2" width="1" height="5.8" fill="#3c3c3c"/><rect x="147" y="423.9" width="1" height="8.1" fill="#3c3c3c"/><rect x="149" y="422.0" width="1" height="10.0" fill="#3c3c3c"/><rect x="151" y="422.3" width="1" height="9.7" fill="#3c3c3c"/><rect x="153" y="426.1" width="1" height="5.9" fill="#3c3c3c"/><rect x="155" y="428.4" width="1" height="3.6" fill="#3c3c3c"/><rect x="157" y="429.8" width="1" height="2.2" fill="#3c3c3c"/><rect x="159" y="430.7" width="1" height="1.3" fill="#3c3c3c"/><rect x="161" y="430.6" width="1" height="1.4" fill="#3c3c3c"/><rect x="163" y="430.0" width="1" height="2.0" fill="#3c3c3c"/><rect x="167" y="432.0" width="1" height="2.4" fill="#3c3c3c"/><rect x="169" y="432.0" width="1" height="1.4" fill="#3c3c3c"/><rect x="173" y="432.0" width="1" height="1.4" fill="#3c3c3c"/><rect x="175" y="432.0" width="1" height="2.2" fill="#3c3c3c"/><rect x="177" y="432.0" width="1" height="2.9" fill="#3c3c3c"/><rect x="179" y="432.0" width="1" height="3.4" fill="#3c3c3c"/><rect x="181" y="432.0" width="1" height="5.4" fill="#3c3c3c"/><rect x="183" y="432.0" width="1" height="6.4" fill="#3c3c3c"/><rect x="185" y="432.0" width="1" height="6.4" fill="#3c3c3c"/><rect x="187" y="432.0" width="1" height="9.5" fill="#3c3c3c"/><rect x="189" y="432.0" width="1" height="11.4" fill="#3c3c3c"/><rect x="191" y="432.0" width="1" height="14.1" fill="#3c3c3c"/><rect x="193" y="432.0" width="1" height="12.7" fill="#3c3c3c"/><rect x="195" y="432.0" width="1" height="4.5" fill="#3c3c3c"/><rect x="197" y="428.9" width="1" height="3.1" fill="#3c3c3c"/><rect x="199" y="422.2" width="1" height="9.8" fill="#3c3c3c"/><rect x="201" y="418.8" width="1" height="13.2" fill="#3c3c3c"/><rect x="203" y="417.2" width="1" height="14.8" fill="#3c3c3c"/><rect x="205" y="425.1" width="1" height="6.9" fill="#3c3c3c"/><rect x="207" y="432.0" width="1" height="4.8" fill="#3c3c3c"/><rect x="209" y="432.0" width="1" height="12.0" fill="#3c3c3c"/><rect x="211" y="432.0" width="1" height="10.6" fill="#3c3c3c"/><rect x="213" y="432.0" width="1" height="5.3" fill="#3c3c3c"/><rect x="215" y="432.0" width="1" height="1.3" fill="#3c3c3c"/><rect x="217" y="430.2" width="1" height="1.8" fill="#3c3c3c"/><rect x="219" y="429.7" width="1" height="2.3" fill="#3c3c3c"/><rect x="221" y="429.9" width="1" height="2.1" fill="#3c3c3c"/><rect x="223" y="432.0" width="1" height="3.4" fill="#3c3c3c"/><rect x="225" y="429.9" width="1" height="2.1" fill="#3c3c3c"/><rect x="227" y="419.8" width="1" height="12.2" fill="#3c3c3c"/><rect x="229" y="408.1" width="1" height="23.9" fill="#3c3c3c"/><rect x="231" y="405.7" width="1" height="26.3" fill="#3c3c3c"/><rect x="233" y="409.2" width="1" height="22.8" fill="#3c3c3c"/><rect x="235" y="414.1" width="1" height="17.9" fill="#3c3c3c"/><rect x="237" y="419.2" width="1" height="12.8" fill="#3c3c3c"/><rect x="239" y="424.7" width="1" height="7.3" fill="#3c3c3c"/><rect x="241" y="428.7" width="1" height="3.3" fill="#3c3c3c"/><rect x="243" y="429.6" width="1" height="2.4" fill="#3c3c3c"/><rect x="245" y="430.2" width="1" height="1.8" fill="#3c3c3c"/><rect x="247" y="430.7" width="1" height="1.3" fill="#3c3c3c"/><rect x="249" y="431.2" width="1" height="0.8" fill="#3c3c3c"/><rect x="251" y="432.0" width="1" height="1.6" fill="#3c3c3c"/><rect x="253" y="432.0" width="1" height="4.8" fill="#3c3c3c"/><rect x="255" y="432.0" width="1" height="7.2" fill="#3c3c3c"/><rect x="257" y="432.0" width="1" height="6.7" fill="#3c3c3c"/><rect x="259" y="432.0" width="1" height="6.3" fill="#3c3c3c"/><rect x="261" y="432.0" width="1" height="4.6" fill="#3c3c3c"/><rect x="263" y="432.0" width="1" height="5.4" fill="#3c3c3c"/><rect x="265" y="432.0" width="1" height="10.5" fill="#3c3c3c"/><rect x="267" y="432.0" width="1" height="13.6" fill="#3c3c3c"/><rect x="269" y="432.0" width="1" height="14.7" fill="#3c3c3c"/><rect x="271" y="432.0" width="1" height="11.6" fill="#3c3c3c"/><rect x="273" y="432.0" width="1" height="7.1" fill="#3c3c3c"/><rect x="275" y="432.0" width="1" height="2.8" fill="#3c3c3c"/><rect x="277" y="431.2" width="1" height="0.8" fill="#3c3c3c"/><rect x="279" y="429.5" width="1" height="2.5" fill="#3c3c3c"/><rect x="281" y="428.7" width="1" height="3.3" fill="#3c3c3c"/><rect x="283" y="431.5" width="1" height="0.5" fill="#3c3c3c"/><rect x="285" y="427.3" width="1" height="4.7" fill="#3c3c3c"/><rect x="287" y="420.1" width="1" height="11.9" fill="#3c3c3c"/><rect x="289" y="415.7" width="1" height="16.3" fill="#3c3c3c"/><rect x="291" y="417.5" width="1" height="14.5" fill="#3c3c3c"/><rect x="293" y="422.1" width="1" height="9.9" fill="#3c3c3c"/><rect x="295" y="426.9" width="1" height="5.1" fill="#3c3c3c"/><rect x="297" y="431.5" width="1" height="0.5" fill="#3c3c3c"/><rect x="299" y="432.0" width="1" height="1.0" fill="#3c3c3c"/><rect x="303" y="429.7" width="1" height="2.3" fill="#3c3c3c"/><rect x="305" y="427.4" width="1" height="4.6" fill="#3c3c3c"/><rect x="307" y="425.0" width="1" height="7.0" fill="#3c3c3c"/><rect x="309" y="428.9" width="1" height="3.1" fill="#3c3c3c"/><rect x="311" y="432.0" width="1" height="0.7" fill="#3c3c3c"/><rect x="313" y="432.0" width="1" height="2.2" fill="#3c3c3c"/><rect x="315" y="432.0" width="1" height="3.2" fill="#3c3c3c"/><rect x="317" y="432.0" width="1" height="0.8" fill="#3c3c3c"/><rect x="319" y="431.4" width="1" height="0.6" fill="#3c3c3c"/><rect x="321" y="430.3" width="1" height="1.7" fill="#3c3c3c"/><rect x="323" y="429.9" width="1" height="2.1" fill="#3c3c3c"/><rect x="325" y="430.2" width="1" height="1.8" fill="#3c3c3c"/><rect x="327" y="429.7" width="1" height="2.3" fill="#3c3c3c"/><rect x="329" y="428.8" width="1" height="3.2" fill="#3c3c3c"/><rect x="331" y="429.8" width="1" height="2.2" fill="#3c3c3c"/><rect x="333" y="431.5" width="1" height="0.5" fill="#3c3c3c"/><rect x="335" y="432.0" width="1" height="0.6" fill="#3c3c3c"/><rect x="337" y="432.0" width="1" height="1.6" fill="#3c3c3c"/><rect x="339" y="432.0" width="1" height="2.3" fill="#3c3c3c"/><rect x="341" y="431.0" width="1" height="1.0" fill="#3c3c3c"/><rect x="343" y="426.9" width="1" height="5.1" fill="#3c3c3c"/><rect x="345" y="426.2" width="1" height="5.8" fill="#3c3c3c"/><rect x="347" y="430.7" width="1" height="1.3" fill="#3c3c3c"/><rect x="349" y="432.0" width="1" height="1.5" fill="#3c3c3c"/><rect x="351" y="432.0" width="1" height="4.0" fill="#3c3c3c"/><rect x="353" y="432.0" width="1" height="7.0" fill="#3c3c3c"/><rect x="355" y="432.0" width="1" height="12.6" fill="#3c3c3c"/><rect x="357" y="432.0" width="1" height="15.8" fill="#3c3c3c"/><rect x="359" y="432.0" width="1" height="11.4" fill="#3c3c3c"/><rect x="361" y="432.0" width="1" height="6.9" fill="#3c3c3c"/><rect x="363" y="432.0" width="1" height="5.9" fill="#3c3c3c"/><rect x="365" y="432.0" width="1" height="5.3" fill="#3c3c3c"/><rect x="367" y="432.0" width="1" height="4.8" fill="#3c3c3c"/><rect x="369" y="432.0" width="1" height="4.5" fill="#3c3c3c"/><rect x="371" y="432.0" width="1" height="2.2" fill="#3c3c3c"/><rect x="375" y="427.3" width="1" height="4.7" fill="#3c3c3c"/><rect x="377" y="422.8" width="1" height="9.2" fill="#3c3c3c"/><rect x="379" y="426.5" width="1" height="5.5" fill="#3c3c3c"/><rect x="381" y="430.6" width="1" height="1.4" fill="#3c3c3c"/><rect x="385" y="432.0" width="1" height="0.4" fill="#3c3c3c"/><rect x="387" y="432.0" width="1" height="0.7" fill="#3c3c3c"/><rect x="389" y="432.0" width="1" height="0.9" fill="#3c3c3c"/><rect x="391" y="432.0" width="1" height="1.7" fill="#3c3c3c"/><rect x="393" y="432.0" width="1" height="2.7" fill="#3c3c3c"/><rect x="395" y="432.0" width="1" height="3.4" fill="#3c3c3c"/><rect x="397" y="432.0" width="1" height="8.6" fill="#3c3c3c"/><rect x="399" y="432.0" width="1" height="8.6" fill="#3c3c3c"/><rect x="401" y="432.0" width="1" height="7.8" fill="#3c3c3c"/><rect x="403" y="432.0" width="1" height="1.9" fill="#3c3c3c"/><rect x="405" y="430.4" width="1" height="1.6" fill="#3c3c3c"/><rect x="407" y="428.7" width="1" height="3.3" fill="#3c3c3c"/><rect x="409" y="427.8" width="1" height="4.2" fill="#3c3c3c"/><rect x="411" y="428.8" width="1" height="3.2" fill="#3c3c3c"/><rect x="413" y="430.6" width="1" height="1.4" fill="#3c3c3c"/><rect x="415" y="429.9" width="1" height="2.1" fill="#3c3c3c"/><rect x="417" y="428.2" width="1" height="3.8" fill="#3c3c3c"/><rect x="419" y="425.6" width="1" height="6.4" fill="#3c3c3c"/><rect x="421" y="423.6" width="1" height="8.4" fill="#3c3c3c"/><rect x="423" y="427.4" width="1" height="4.6" fill="#3c3c3c"/><rect x="425" y="429.8" width="1" height="2.2" fill="#3c3c3c"/><rect x="427" y="430.7" width="1" height="1.3" fill="#3c3c3c"/><rect x="429" y="431.2" width="1" height="0.8" fill="#3c3c3c"/><rect x="431" y="430.9" width="1" height="1.1" fill="#3c3c3c"/><rect x="433" y="431.2" width="1" height="0.8" fill="#3c3c3c"/><rect x="435" y="432.0" width="1" height="0.8" fill="#3c3c3c"/><rect x="437" y="432.0" width="1" height="1.7" fill="#3c3c3c"/><rect x="439" y="432.0" width="1" height="2.2" fill="#3c3c3c"/><rect x="441" y="432.0" width="1" height="2.1" fill="#3c3c3c"/><rect x="443" y="432.0" width="1" height="1.7" fill="#3c3c3c"/><rect x="445" y="432.0" width="1" height="1.5" fill="#3c3c3c"/><rect x="447" y="432.0" width="1" height="1.4" fill="#3c3c3c"/><rect x="449" y="432.0" width="1" height="1.3" fill="#3c3c3c"/><rect x="451" y="432.0" width="1" height="1.0" fill="#3c3c3c"/><rect x="453" y="432.0" width="1" height="0.6" fill="#3c3c3c"/><rect x="455" y="432.0" width="1" height="0.4" fill="#3c3c3c"/><rect x="457" y="432.0" width="1" height="0.7" fill="#3c3c3c"/><rect x="459" y="432.0" width="1" height="0.9" fill="#3c3c3c"/><rect x="461" y="432.0" width="1" height="0.5" fill="#3c3c3c"/><rect x="465" y="431.4" width="1" height="0.6" fill="#3c3c3c"/><rect x="467" y="431.7" width="1" height="0.3" fill="#3c3c3c"/><rect x="473" y="432.0" width="1" height="0.5" fill="#3c3c3c"/><rect x="475" y="432.0" width="1" height="0.8" fill="#3c3c3c"/><rect x="477" y="432.0" width="1" height="3.2" fill="#3c3c3c"/><rect x="479" y="432.0" width="1" height="1.0" fill="#3c3c3c"/><rect x="481" y="430.7" width="1" height="1.3" fill="#3c3c3c"/><rect x="483" y="429.8" width="1" height="2.2" fill="#3c3c3c"/><rect x="485" y="429.3" width="1" height="2.7" fill="#3c3c3c"/><rect x="487" y="429.2" width="1" height="2.8" fill="#3c3c3c"/><rect x="489" y="429.1" width="1" height="2.9" fill="#3c3c3c"/><rect x="491" y="428.8" width="1" height="3.2" fill="#3c3c3c"/><rect x="493" y="426.4" width="1" height="5.6" fill="#3c3c3c"/><rect x="495" y="420.2" width="1" height="11.8" fill="#3c3c3c"/><rect x="497" y="422.7" width="1" height="9.3" fill="#3c3c3c"/><rect x="499" y="429.2" width="1" height="2.8" fill="#3c3c3c"/><rect x="503" y="432.0" width="1" height="0.5" fill="#3c3c3c"/><rect x="505" y="432.0" width="1" height="1.3" fill="#3c3c3c"/><rect x="507" y="432.0" width="1" height="2.1" fill="#3c3c3c"/><rect x="509" y="431.5" width="1" height="0.5" fill="#3c3c3c"/><rect x="511" y="429.1" width="1" height="2.9" fill="#3c3c3c"/><rect x="515" y="432.0" width="1" height="1.7" fill="#3c3c3c"/><rect x="517" y="432.0" width="1" height="6.4" fill="#3c3c3c"/><rect x="519" y="432.0" width="1" height="6.1" fill="#3c3c3c"/><rect x="521" y="432.0" width="1" height="5.0" fill="#3c3c3c"/><rect x="523" y="432.0" width="1" height="3.5" fill="#3c3c3c"/><rect x="525" y="432.0" width="1" height="2.6" fill="#3c3c3c"/><rect x="527" y="432.0" width="1" height="1.0" fill="#3c3c3c"/><rect x="529" y="431.3" width="1" height="0.7" fill="#3c3c3c"/><rect x="531" y="430.2" width="1" height="1.8" fill="#3c3c3c"/><rect x="533" y="432.0" width="1" height="0.6" fill="#3c3c3c"/><rect x="535" y="432.0" width="1" height="2.1" fill="#3c3c3c"/><rect x="537" y="432.0" width="1" height="0.7" fill="#3c3c3c"/><rect x="541" y="432.0" width="1" height="0.8" fill="#3c3c3c"/><rect x="543" y="432.0" width="1" height="1.4" fill="#3c3c3c"/><rect x="545" y="432.0" width="1" height="1.8" fill="#3c3c3c"/><rect x="547" y="432.0" width="1" height="2.0" fill="#3c3c3c"/><rect x="549" y="432.0" width="1" height="2.1" fill="#3c3c3c"/><rect x="551" y="432.0" width="1" height="3.9" fill="#3c3c3c"/><rect x="553" y="432.0" width="1" height="5.2" fill="#3c3c3c"/><rect x="555" y="432.0" width="1" height="6.8" fill="#3c3c3c"/><rect x="557" y="432.0" width="1" height="7.7" fill="#3c3c3c"/><rect x="559" y="432.0" width="1" height="4.0" fill="#3c3c3c"/><rect x="561" y="432.0" width="1" height="0.5" fill="#3c3c3c"/><rect x="563" y="430.6" width="1" height="1.4" fill="#3c3c3c"/><rect x="565" y="429.5" width="1" height="2.5" fill="#3c3c3c"/><rect x="567" y="429.3" width="1" height="2.7" fill="#3c3c3c"/><rect x="569" y="429.2" width="1" height="2.8" fill="#3c3c3c"/><rect x="571" y="432.0" width="1" height="1.7" fill="#3c3c3c"/><rect x="573" y="432.0" width="1" height="7.2" fill="#3c3c3c"/><rect x="575" y="432.0" width="1" height="10.6" fill="#3c3c3c"/><rect x="577" y="432.0" width="1" height="13.7" fill="#3c3c3c"/><rect x="579" y="432.0" width="1" height="6.9" fill="#3c3c3c"/><rect x="581" y="432.0" width="1" height="0.3" fill="#3c3c3c"/><rect x="583" y="429.9" width="1" height="2.1" fill="#3c3c3c"/><rect x="585" y="428.5" width="1" height="3.5" fill="#3c3c3c"/><rect x="587" y="426.5" width="1" height="5.5" fill="#3c3c3c"/><rect x="589" y="425.3" width="1" height="6.7" fill="#3c3c3c"/><rect x="591" y="423.4" width="1" height="8.6" fill="#3c3c3c"/><rect x="593" y="420.7" width="1" height="11.3" fill="#3c3c3c"/><rect x="595" y="414.9" width="1" height="17.1" fill="#3c3c3c"/><rect x="597" y="413.6" width="1" height="18.4" fill="#3c3c3c"/><rect x="599" y="417.0" width="1" height="15.0" fill="#3c3c3c"/><rect x="601" y="423.5" width="1" height="8.5" fill="#3c3c3c"/><rect x="603" y="427.6" width="1" height="4.4" fill="#3c3c3c"/><rect x="605" y="430.2" width="1" height="1.8" fill="#3c3c3c"/><rect x="609" y="432.0" width="1" height="1.1" fill="#3c3c3c"/><rect x="611" y="432.0" width="1" height="2.0" fill="#3c3c3c"/><rect x="613" y="429.8" width="1" height="2.2" fill="#3c3c3c"/><rect x="615" y="427.3" width="1" height="4.7" fill="#3c3c3c"/><rect x="617" y="432.0" width="1" height="3.4" fill="#3c3c3c"/><rect x="619" y="432.0" width="1" height="4.5" fill="#3c3c3c"/><rect x="621" y="432.0" width="1" height="4.0" fill="#3c3c3c"/><rect x="623" y="432.0" width="1" height="2.9" fill="#3c3c3c"/><rect x="625" y="432.0" width="1" height="2.2" fill="#3c3c3c"/><rect x="627" y="432.0" width="1" height="2.1" fill="#3c3c3c"/><rect x="629" y="432.0" width="1" height="2.2" fill="#3c3c3c"/><rect x="631" y="432.0" width="1" height="2.2" fill="#3c3c3c"/><rect x="633" y="428.3" width="1" height="3.7" fill="#3c3c3c"/><rect x="635" y="424.7" width="1" height="7.3" fill="#3c3c3c"/><rect x="637" y="427.0" width="1" height="5.0" fill="#3c3c3c"/><rect x="639" y="428.4" width="1" height="3.6" fill="#3c3c3c"/><rect x="641" y="430.2" width="1" height="1.8" fill="#3c3c3c"/><rect x="643" y="431.4" width="1" height="0.6" fill="#3c3c3c"/><rect x="645" y="432.0" width="1" height="0.3" fill="#3c3c3c"/><rect x="647" y="432.0" width="1" height="1.1" fill="#3c3c3c"/><rect x="649" y="432.0" width="1" height="1.6" fill="#3c3c3c"/><rect x="651" y="431.6" width="1" height="0.4" fill="#3c3c3c"/><rect x="653" y="430.4" width="1" height="1.6" fill="#3c3c3c"/><rect x="655" y="430.4" width="1" height="1.6" fill="#3c3c3c"/><rect x="657" y="431.0" width="1" height="1.0" fill="#3c3c3c"/><rect x="659" y="431.4" width="1" height="0.6" fill="#3c3c3c"/><rect x="661" y="432.0" width="1" height="0.9" fill="#3c3c3c"/><rect x="663" y="432.0" width="1" height="2.0" fill="#3c3c3c"/><rect x="665" y="432.0" width="1" height="3.0" fill="#3c3c3c"/><rect x="667" y="432.0" width="1" height="3.6" fill="#3c3c3c"/><rect x="669" y="432.0" width="1" height="4.0" fill="#3c3c3c"/><rect x="671" y="432.0" width="1" height="4.3" fill="#3c3c3c"/><rect x="673" y="432.0" width="1" height="4.4" fill="#3c3c3c"/><rect x="675" y="432.0" width="1" height="4.5" fill="#3c3c3c"/><rect x="677" y="432.0" width="1" height="4.5" fill="#3c3c3c"/><rect x="679" y="432.0" width="1" height="3.4" fill="#3c3c3c"/><rect x="681" y="432.0" width="1" height="2.4" fill="#3c3c3c"/><rect x="683" y="432.0" width="1" height="1.8" fill="#3c3c3c"/><rect x="685" y="432.0" width="1" height="1.5" fill="#3c3c3c"/><rect x="687" y="432.0" width="1" height="1.3" fill="#3c3c3c"/><rect x="689" y="432.0" width="1" height="1.2" fill="#3c3c3c"/><rect x="691" y="432.0" width="1" height="0.4" fill="#3c3c3c"/><rect x="693" y="431.3" width="1" height="0.7" fill="#3c3c3c"/><rect x="695" y="430.7" width="1" height="1.3" fill="#3c3c3c"/><rect x="697" y="429.8" width="1" height="2.2" fill="#3c3c3c"/><rect x="699" y="429.3" width="1" height="2.7" fill="#3c3c3c"/><rect x="701" y="429.0" width="1" height="3.0" fill="#3c3c3c"/><rect x="703" y="428.8" width="1" height="3.2" fill="#3c3c3c"/><rect x="705" y="428.7" width="1" height="3.3" fill="#3c3c3c"/><rect x="707" y="429.1" width="1" height="2.9" fill="#3c3c3c"/><rect x="709" y="429.3" width="1" height="2.7" fill="#3c3c3c"/><rect x="711" y="432.0" width="1" height="1.0" fill="#3c3c3c"/><rect x="713" y="432.0" width="1" height="6.3" fill="#3c3c3c"/><rect x="715" y="432.0" width="1" height="10.1" fill="#3c3c3c"/><rect x="717" y="432.0" width="1" height="8.9" fill="#3c3c3c"/><rect x="719" y="432.0" width="1" height="6.5" fill="#3c3c3c"/><rect x="721" y="432.0" width="1" height="4.6" fill="#3c3c3c"/><rect x="723" y="432.0" width="1" height="3.2" fill="#3c3c3c"/><rect x="725" y="432.0" width="1" height="2.4" fill="#3c3c3c"/><rect x="727" y="432.0" width="1" height="2.1" fill="#3c3c3c"/><rect x="729" y="432.0" width="1" height="2.1" fill="#3c3c3c"/><rect x="731" y="432.0" width="1" height="1.9" fill="#3c3c3c"/><rect x="733" y="432.0" width="1" height="1.8" fill="#3c3c3c"/><rect x="735" y="432.0" width="1" height="3.1" fill="#3c3c3c"/><rect x="737" y="432.0" width="1" height="1.9" fill="#3c3c3c"/><rect x="739" y="429.6" width="1" height="2.4" fill="#3c3c3c"/><rect x="741" y="427.7" width="1" height="4.3" fill="#3c3c3c"/><rect x="743" y="427.1" width="1" height="4.9" fill="#3c3c3c"/><rect x="745" y="426.8" width="1" height="5.2" fill="#3c3c3c"/><rect x="747" y="427.5" width="1" height="4.5" fill="#3c3c3c"/><rect x="749" y="427.9" width="1" height="4.1" fill="#3c3c3c"/><rect x="751" y="429.2" width="1" height="2.8" fill="#3c3c3c"/><rect x="753" y="430.7" width="1" height="1.3" fill="#3c3c3c"/><rect x="755" y="431.7" width="1" height="0.3" fill="#3c3c3c"/><rect x="757" y="432.0" width="1" height="0.7" fill="#3c3c3c"/><rect x="759" y="432.0" width="1" height="1.3" fill="#3c3c3c"/><rect x="761" y="432.0" width="1" height="1.7" fill="#3c3c3c"/><rect x="763" y="432.0" width="1" height="1.9" fill="#3c3c3c"/><rect x="765" y="432.0" width="1" height="2.1" fill="#3c3c3c"/><rect x="767" y="432.0" width="1" height="1.3" fill="#3c3c3c"/><rect x="769" y="432.0" width="1" height="1.5" fill="#3c3c3c"/><rect x="771" y="432.0" width="1" height="6.3" fill="#3c3c3c"/><rect x="773" y="432.0" width="1" height="8.8" fill="#3c3c3c"/><rect x="775" y="432.0" width="1" height="8.1" fill="#3c3c3c"/><rect x="777" y="432.0" width="1" height="2.3" fill="#3c3c3c"/><rect x="779" y="430.5" width="1" height="1.5" fill="#3c3c3c"/><rect x="781" y="427.0" width="1" height="5.0" fill="#3c3c3c"/><rect x="783" y="424.9" width="1" height="7.1" fill="#3c3c3c"/><rect x="785" y="425.1" width="1" height="6.9" fill="#3c3c3c"/><rect x="787" y="426.0" width="1" height="6.0" fill="#3c3c3c"/><rect x="789" y="426.9" width="1" height="5.1" fill="#3c3c3c"/><rect x="791" y="429.8" width="1" height="2.2" fill="#3c3c3c"/><rect x="793" y="431.6" width="1" height="0.4" fill="#3c3c3c"/><rect x="795" y="432.0" width="1" height="2.1" fill="#3c3c3c"/><rect x="797" y="432.0" width="1" height="4.3" fill="#3c3c3c"/><rect x="799" y="432.0" width="1" height="3.7" fill="#3c3c3c"/><rect x="801" y="432.0" width="1" height="2.9" fill="#3c3c3c"/><rect x="803" y="432.0" width="1" height="1.0" fill="#3c3c3c"/><rect x="807" y="430.5" width="1" height="1.5" fill="#3c3c3c"/><rect x="809" y="430.3" width="1" height="1.7" fill="#3c3c3c"/><rect x="811" y="432.0" width="1" height="4.4" fill="#3c3c3c"/><rect x="813" y="432.0" width="1" height="6.4" fill="#3c3c3c"/><rect x="815" y="432.0" width="1" height="4.5" fill="#3c3c3c"/><rect x="817" y="427.9" width="1" height="4.1" fill="#3c3c3c"/><rect x="819" y="426.3" width="1" height="5.7" fill="#3c3c3c"/><rect x="821" y="426.3" width="1" height="5.7" fill="#3c3c3c"/><rect x="823" y="426.3" width="1" height="5.7" fill="#3c3c3c"/><rect x="825" y="426.2" width="1" height="5.8" fill="#3c3c3c"/><rect x="827" y="426.2" width="1" height="5.8" fill="#3c3c3c"/><rect x="829" y="427.1" width="1" height="4.9" fill="#3c3c3c"/><rect x="831" y="427.8" width="1" height="4.2" fill="#3c3c3c"/><rect x="833" y="425.6" width="1" height="6.4" fill="#3c3c3c"/><rect x="835" y="423.9" width="1" height="8.1" fill="#3c3c3c"/><rect x="837" y="426.2" width="1" height="5.8" fill="#3c3c3c"/><rect x="839" y="427.5" width="1" height="4.5" fill="#3c3c3c"/><rect x="841" y="429.7" width="1" height="2.3" fill="#3c3c3c"/><rect x="845" y="432.0" width="1" height="1.3" fill="#3c3c3c"/><rect x="847" y="432.0" width="1" height="4.4" fill="#3c3c3c"/><rect x="849" y="432.0" width="1" height="6.3" fill="#3c3c3c"/><rect x="851" y="432.0" width="1" height="9.1" fill="#3c3c3c"/><rect x="853" y="432.0" width="1" height="12.2" fill="#3c3c3c"/><rect x="855" y="432.0" width="1" height="16.9" fill="#3c3c3c"/><rect x="857" y="432.0" width="1" height="20.3" fill="#3c3c3c"/><rect x="859" y="432.0" width="1" height="21.4" fill="#3c3c3c"/><rect x="861" y="432.0" width="1" height="17.0" fill="#3c3c3c"/><rect x="863" y="432.0" width="1" height="10.3" fill="#3c3c3c"/><rect x="865" y="432.0" width="1" height="5.5" fill="#3c3c3c"/><rect x="867" y="432.0" width="1" height="2.1" fill="#3c3c3c"/><rect x="869" y="432.0" width="1" height="0.8" fill="#3c3c3c"/><rect x="871" y="422.6" width="1" height="9.4" fill="#3c3c3c"/></g>
<rect x="13" y="431.5" width="2" height="0.8" fill="#3a3a3a"/>
<rect x="17" y="431.5" width="2" height="0.8" fill="#3a3a3a"/>
<rect x="21" y="431.5" width="2" height="0.8" fill="#3a3a3a"/>
<rect x="25" y="431.5" width="2" height="0.8" fill="#3a3a3a"/>
<rect x="29" y="431.5" width="2" height="0.8" fill="#3a3a3a"/>
<rect x="33" y="431.5" width="2" height="0.8" fill="#3a3a3a"/>
<rect x="37" y="431.5" width="2" height="0.8" fill="#3a3a3a"/>
<rect x="41" y="431.5" width="2" height="0.8" fill="#3a3a3a"/>
<rect x="45" y="431.5" width="2" height="0.8" fill="#3a3a3a"/>
<rect x="49" y="431.5" width="2" height="0.8" fill="#3a3a3a"/>
<rect x="53" y="431.5" width="2" height="0.8" fill="#3a3a3a"/>
<rect x="57" y="431.5" width="2" height="0.8" fill="#3a3a3a"/>
<rect x="61" y="431.5" width="2" height="0.8" fill="#3a3a3a"/>
<rect x="65" y="431.5" width="2" height="0.8" fill="#3a3a3a"/>
<rect x="69" y="431.5" width="2" height="0.8" fill="#3a3a3a"/>
<rect x="73" y="431.5" width="2" height="0.8" fill="#3a3a3a"/>
<rect x="77" y="431.5" width="2" height="0.8" fill="#3a3a3a"/>
<rect x="81" y="431.5" width="2" height="0.8" fill="#3a3a3a"/>
<rect x="85" y="431.5" width="2" height="0.8" fill="#3a3a3a"/>
<rect x="89" y="431.5" width="2" height="0.8" fill="#3a3a3a"/>
<rect x="93" y="431.5" width="2" height="0.8" fill="#3a3a3a"/>
<rect x="97" y="431.5" width="2" height="0.8" fill="#3a3a3a"/>
<rect x="101" y="431.5" width="2" height="0.8" fill="#3a3a3a"/>
<rect x="105" y="431.5" width="2" height="0.8" fill="#3a3a3a"/>
<rect x="109" y="431.5" width="2" height="0.8" fill="#3a3a3a"/>
<rect x="113" y="431.5" width="2" height="0.8" fill="#3a3a3a"/>
<rect x="117" y="431.5" width="2" height="0.8" fill="#3a3a3a"/>
<rect x="121" y="431.5" width="2" height="0.8" fill="#3a3a3a"/>
<rect x="125" y="431.5" width="2" height="0.8" fill="#3a3a3a"/>
<rect x="129" y="431.5" width="2" height="0.8" fill="#3a3a3a"/>
<rect x="133" y="431.5" width="2" height="0.8" fill="#3a3a3a"/>
<rect x="137" y="431.5" width="2" height="0.8" fill="#3a3a3a"/>
<rect x="141" y="431.5" width="2" height="0.8" fill="#3a3a3a"/>
<rect x="145" y="431.5" width="2" height="0.8" fill="#3a3a3a"/>
<rect x="149" y="431.5" width="2" height="0.8" fill="#3a3a3a"/>
<rect x="153" y="431.5" width="2" height="0.8" fill="#3a3a3a"/>
<rect x="157" y="431.5" width="2" height="0.8" fill="#3a3a3a"/>
<rect x="161" y="431.5" width="2" height="0.8" fill="#3a3a3a"/>
<rect x="165" y="431.5" width="2" height="0.8" fill="#3a3a3a"/>
<rect x="169" y="431.5" width="2" height="0.8" fill="#3a3a3a"/>
<rect x="173" y="431.5" width="2" height="0.8" fill="#3a3a3a"/>
<rect x="177" y="431.5" width="2" height="0.8" fill="#3a3a3a"/>
<rect x="181" y="431.5" width="2" height="0.8" fill="#3a3a3a"/>
<rect x="185" y="431.5" width="2" height="0.8" fill="#3a3a3a"/>
<rect x="189" y="431.5" width="2" height="0.8" fill="#3a3a3a"/>
<rect x="193" y="431.5" width="2" height="0.8" fill="#3a3a3a"/>
<rect x="197" y="431.5" width="2" height="0.8" fill="#3a3a3a"/>
<rect x="201" y="431.5" width="2" height="0.8" fill="#3a3a3a"/>
<rect x="205" y="431.5" width="2" height="0.8" fill="#3a3a3a"/>
<rect x="209" y="431.5" width="2" height="0.8" fill="#3a3a3a"/>
<rect x="213" y="431.5" width="2" height="0.8" fill="#3a3a3a"/>
<rect x="217" y="431.5" width="2" height="0.8" fill="#3a3a3a"/>
<rect x="221" y="431.5" width="2" height="0.8" fill="#3a3a3a"/>
<rect x="225" y="431.5" width="2" height="0.8" fill="#3a3a3a"/>
<rect x="229" y="431.5" width="2" height="0.8" fill="#3a3a3a"/>
<rect x="233" y="431.5" width="2" height="0.8" fill="#3a3a3a"/>
<rect x="237" y="431.5" width="2" height="0.8" fill="#3a3a3a"/>
<rect x="241" y="431.5" width="2" height="0.8" fill="#3a3a3a"/>
<rect x="245" y="431.5" width="2" height="0.8" fill="#3a3a3a"/>
<rect x="249" y="431.5" width="2" height="0.8" fill="#3a3a3a"/>
<rect x="253" y="431.5" width="2" height="0.8" fill="#3a3a3a"/>
<rect x="257" y="431.5" width="2" height="0.8" fill="#3a3a3a"/>
<rect x="261" y="431.5" width="2" height="0.8" fill="#3a3a3a"/>
<rect x="265" y="431.5" width="2" height="0.8" fill="#3a3a3a"/>
<rect x="269" y="431.5" width="2" height="0.8" fill="#3a3a3a"/>
<rect x="273" y="431.5" width="2" height="0.8" fill="#3a3a3a"/>
<rect x="277" y="431.5" width="2" height="0.8" fill="#3a3a3a"/>
<rect x="281" y="431.5" width="2" height="0.8" fill="#3a3a3a"/>
<rect x="285" y="431.5" width="2" height="0.8" fill="#3a3a3a"/>
<rect x="289" y="431.5" width="2" height="0.8" fill="#3a3a3a"/>
<rect x="293" y="431.5" width="2" height="0.8" fill="#3a3a3a"/>
<rect x="297" y="431.5" width="2" height="0.8" fill="#3a3a3a"/>
<rect x="301" y="431.5" width="2" height="0.8" fill="#3a3a3a"/>
<rect x="305" y="431.5" width="2" height="0.8" fill="#3a3a3a"/>
<rect x="309" y="431.5" width="2" height="0.8" fill="#3a3a3a"/>
<rect x="313" y="431.5" width="2" height="0.8" fill="#3a3a3a"/>
<rect x="317" y="431.5" width="2" height="0.8" fill="#3a3a3a"/>
<rect x="321" y="431.5" width="2" height="0.8" fill="#3a3a3a"/>
<rect x="325" y="431.5" width="2" height="0.8" fill="#3a3a3a"/>
<rect x="329" y="431.5" width="2" height="0.8" fill="#3a3a3a"/>
<rect x="333" y="431.5" width="2" height="0.8" fill="#3a3a3a"/>
<rect x="337" y="431.5" width="2" height="0.8" fill="#3a3a3a"/>
<rect x="341" y="431.5" width="2" height="0.8" fill="#3a3a3a"/>
<rect x="345" y="431.5" width="2" height="0.8" fill="#3a3a3a"/>
<rect x="349" y="431.5" width="2" height="0.8" fill="#3a3a3a"/>
<rect x="353" y="431.5" width="2" height="0.8" fill="#3a3a3a"/>
<rect x="357" y="431.5" width="2" height="0.8" fill="#3a3a3a"/>
<rect x="361" y="431.5" width="2" height="0.8" fill="#3a3a3a"/>
<rect x="365" y="431.5" width="2" height="0.8" fill="#3a3a3a"/>
<rect x="369" y="431.5" width="2" height="0.8" fill="#3a3a3a"/>
<rect x="373" y="431.5" width="2" height="0.8" fill="#3a3a3a"/>
<rect x="377" y="431.5" width="2" height="0.8" fill="#3a3a3a"/>
<rect x="381" y="431.5" width="2" height="0.8" fill="#3a3a3a"/>
<rect x="385" y="431.5" width="2" height="0.8" fill="#3a3a3a"/>
<rect x="389" y="431.5" width="2" height="0.8" fill="#3a3a3a"/>
<rect x="393" y="431.5" width="2" height="0.8" fill="#3a3a3a"/>
<rect x="397" y="431.5" width="2" height="0.8" fill="#3a3a3a"/>
<rect x="401" y="431.5" width="2" height="0.8" fill="#3a3a3a"/>
<rect x="405" y="431.5" width="2" height="0.8" fill="#3a3a3a"/>
<rect x="409" y="431.5" width="2" height="0.8" fill="#3a3a3a"/>
<rect x="413" y="431.5" width="2" height="0.8" fill="#3a3a3a"/>
<rect x="417" y="431.5" width="2" height="0.8" fill="#3a3a3a"/>
<rect x="421" y="431.5" width="2" height="0.8" fill="#3a3a3a"/>
<rect x="425" y="431.5" width="2" height="0.8" fill="#3a3a3a"/>
<rect x="429" y="431.5" width="2" height="0.8" fill="#3a3a3a"/>
<rect x="433" y="431.5" width="2" height="0.8" fill="#3a3a3a"/>
<rect x="437" y="431.5" width="2" height="0.8" fill="#3a3a3a"/>
<rect x="441" y="431.5" width="2" height="0.8" fill="#3a3a3a"/>
<rect x="445" y="431.5" width="2" height="0.8" fill="#3a3a3a"/>
<rect x="449" y="431.5" width="2" height="0.8" fill="#3a3a3a"/>
<rect x="453" y="431.5" width="2" height="0.8" fill="#3a3a3a"/>
<rect x="457" y="431.5" width="2" height="0.8" fill="#3a3a3a"/>
<rect x="461" y="431.5" width="2" height="0.8" fill="#3a3a3a"/>
<rect x="465" y="431.5" width="2" height="0.8" fill="#3a3a3a"/>
<rect x="469" y="431.5" width="2" height="0.8" fill="#3a3a3a"/>
<rect x="473" y="431.5" width="2" height="0.8" fill="#3a3a3a"/>
<rect x="477" y="431.5" width="2" height="0.8" fill="#3a3a3a"/>
<rect x="481" y="431.5" width="2" height="0.8" fill="#3a3a3a"/>
<rect x="485" y="431.5" width="2" height="0.8" fill="#3a3a3a"/>
<rect x="489" y="431.5" width="2" height="0.8" fill="#3a3a3a"/>
<rect x="493" y="431.5" width="2" height="0.8" fill="#3a3a3a"/>
<rect x="497" y="431.5" width="2" height="0.8" fill="#3a3a3a"/>
<rect x="501" y="431.5" width="2" height="0.8" fill="#3a3a3a"/>
<rect x="505" y="431.5" width="2" height="0.8" fill="#3a3a3a"/>
<rect x="509" y="431.5" width="2" height="0.8" fill="#3a3a3a"/>
<rect x="513" y="431.5" width="2" height="0.8" fill="#3a3a3a"/>
<rect x="517" y="431.5" width="2" height="0.8" fill="#3a3a3a"/>
<rect x="521" y="431.5" width="2" height="0.8" fill="#3a3a3a"/>
<rect x="525" y="431.5" width="2" height="0.8" fill="#3a3a3a"/>
<rect x="529" y="431.5" width="2" height="0.8" fill="#3a3a3a"/>
<rect x="533" y="431.5" width="2" height="0.8" fill="#3a3a3a"/>
<rect x="537" y="431.5" width="2" height="0.8" fill="#3a3a3a"/>
<rect x="541" y="431.5" width="2" height="0.8" fill="#3a3a3a"/>
<rect x="545" y="431.5" width="2" height="0.8" fill="#3a3a3a"/>
<rect x="549" y="431.5" width="2" height="0.8" fill="#3a3a3a"/>
<rect x="553" y="431.5" width="2" height="0.8" fill="#3a3a3a"/>
<rect x="557" y="431.5" width="2" height="0.8" fill="#3a3a3a"/>
<rect x="561" y="431.5" width="2" height="0.8" fill="#3a3a3a"/>
<rect x="565" y="431.5" width="2" height="0.8" fill="#3a3a3a"/>
<rect x="569" y="431.5" width="2" height="0.8" fill="#3a3a3a"/>
<rect x="573" y="431.5" width="2" height="0.8" fill="#3a3a3a"/>
<rect x="577" y="431.5" width="2" height="0.8" fill="#3a3a3a"/>
<rect x="581" y="431.5" width="2" height="0.8" fill="#3a3a3a"/>
<rect x="585" y="431.5" width="2" height="0.8" fill="#3a3a3a"/>
<rect x="589" y="431.5" width="2" height="0.8" fill="#3a3a3a"/>
<rect x="593" y="431.5" width="2" height="0.8" fill="#3a3a3a"/>
<rect x="597" y="431.5" width="2" height="0.8" fill="#3a3a3a"/>
<rect x="601" y="431.5" width="2" height="0.8" fill="#3a3a3a"/>
<rect x="605" y="431.5" width="2" height="0.8" fill="#3a3a3a"/>
<rect x="609" y="431.5" width="2" height="0.8" fill="#3a3a3a"/>
<rect x="613" y="431.5" width="2" height="0.8" fill="#3a3a3a"/>
<rect x="617" y="431.5" width="2" height="0.8" fill="#3a3a3a"/>
<rect x="621" y="431.5" width="2" height="0.8" fill="#3a3a3a"/>
<rect x="625" y="431.5" width="2" height="0.8" fill="#3a3a3a"/>
<rect x="629" y="431.5" width="2" height="0.8" fill="#3a3a3a"/>
<rect x="633" y="431.5" width="2" height="0.8" fill="#3a3a3a"/>
<rect x="637" y="431.5" width="2" height="0.8" fill="#3a3a3a"/>
<rect x="641" y="431.5" width="2" height="0.8" fill="#3a3a3a"/>
<rect x="645" y="431.5" width="2" height="0.8" fill="#3a3a3a"/>
<rect x="649" y="431.5" width="2" height="0.8" fill="#3a3a3a"/>
<rect x="653" y="431.5" width="2" height="0.8" fill="#3a3a3a"/>
<rect x="657" y="431.5" width="2" height="0.8" fill="#3a3a3a"/>
<rect x="661" y="431.5" width="2" height="0.8" fill="#3a3a3a"/>
<rect x="665" y="431.5" width="2" height="0.8" fill="#3a3a3a"/>
<rect x="669" y="431.5" width="2" height="0.8" fill="#3a3a3a"/>
<rect x="673" y="431.5" width="2" height="0.8" fill="#3a3a3a"/>
<rect x="677" y="431.5" width="2" height="0.8" fill="#3a3a3a"/>
<rect x="681" y="431.5" width="2" height="0.8" fill="#3a3a3a"/>
<rect x="685" y="431.5" width="2" height="0.8" fill="#3a3a3a"/>
<rect x="689" y="431.5" width="2" height="0.8" fill="#3a3a3a"/>
<rect x="693" y="431.5" width="2" height="0.8" fill="#3a3a3a"/>
<rect x="697" y="431.5" width="2" height="0.8" fill="#3a3a3a"/>
<rect x="701" y="431.5" width="2" height="0.8" fill="#3a3a3a"/>
<rect x="705" y="431.5" width="2" height="0.8" fill="#3a3a3a"/>
<rect x="709" y="431.5" width="2" height="0.8" fill="#3a3a3a"/>
<rect x="713" y="431.5" width="2" height="0.8" fill="#3a3a3a"/>
<rect x="717" y="431.5" width="2" height="0.8" fill="#3a3a3a"/>
<rect x="721" y="431.5" width="2" height="0.8" fill="#3a3a3a"/>
<rect x="725" y="431.5" width="2" height="0.8" fill="#3a3a3a"/>
<rect x="729" y="431.5" width="2" height="0.8" fill="#3a3a3a"/>
<rect x="733" y="431.5" width="2" height="0.8" fill="#3a3a3a"/>
<rect x="737" y="431.5" width="2" height="0.8" fill="#3a3a3a"/>
<rect x="741" y="431.5" width="2" height="0.8" fill="#3a3a3a"/>
<rect x="745" y="431.5" width="2" height="0.8" fill="#3a3a3a"/>
<rect x="749" y="431.5" width="2" height="0.8" fill="#3a3a3a"/>
<rect x="753" y="431.5" width="2" height="0.8" fill="#3a3a3a"/>
<rect x="757" y="431.5" width="2" height="0.8" fill="#3a3a3a"/>
<rect x="761" y="431.5" width="2" height="0.8" fill="#3a3a3a"/>
<rect x="765" y="431.5" width="2" height="0.8" fill="#3a3a3a"/>
<rect x="769" y="431.5" width="2" height="0.8" fill="#3a3a3a"/>
<rect x="773" y="431.5" width="2" height="0.8" fill="#3a3a3a"/>
<rect x="777" y="431.5" width="2" height="0.8" fill="#3a3a3a"/>
<rect x="781" y="431.5" width="2" height="0.8" fill="#3a3a3a"/>
<rect x="785" y="431.5" width="2" height="0.8" fill="#3a3a3a"/>
<rect x="789" y="431.5" width="2" height="0.8" fill="#3a3a3a"/>
<rect x="793" y="431.5" width="2" height="0.8" fill="#3a3a3a"/>
<rect x="797" y="431.5" width="2" height="0.8" fill="#3a3a3a"/>
<rect x="801" y="431.5" width="2" height="0.8" fill="#3a3a3a"/>
<rect x="805" y="431.5" width="2" height="0.8" fill="#3a3a3a"/>
<rect x="809" y="431.5" width="2" height="0.8" fill="#3a3a3a"/>
<rect x="813" y="431.5" width="2" height="0.8" fill="#3a3a3a"/>
<rect x="817" y="431.5" width="2" height="0.8" fill="#3a3a3a"/>
<rect x="821" y="431.5" width="2" height="0.8" fill="#3a3a3a"/>
<rect x="825" y="431.5" width="2" height="0.8" fill="#3a3a3a"/>
<rect x="829" y="431.5" width="2" height="0.8" fill="#3a3a3a"/>
<rect x="833" y="431.5" width="2" height="0.8" fill="#3a3a3a"/>
<rect x="837" y="431.5" width="2" height="0.8" fill="#3a3a3a"/>
<rect x="841" y="431.5" width="2" height="0.8" fill="#3a3a3a"/>
<rect x="845" y="431.5" width="2" height="0.8" fill="#3a3a3a"/>
<rect x="849" y="431.5" width="2" height="0.8" fill="#3a3a3a"/>
<rect x="853" y="431.5" width="2" height="0.8" fill="#3a3a3a"/>
<rect x="857" y="431.5" width="2" height="0.8" fill="#3a3a3a"/>
<rect x="861" y="431.5" width="2" height="0.8" fill="#3a3a3a"/>
<rect x="865" y="431.5" width="2" height="0.8" fill="#3a3a3a"/>
<rect x="869" y="431.5" width="2" height="0.8" fill="#3a3a3a"/>
<polyline points="13,401.0 14,401.1 15,401.3 16,401.6 17,401.9 18,402.2 19,402.6 20,402.9 21,403.3 22,403.7 23,404.3 24,404.9 25,405.6 26,405.9 27,406.0 28,405.9 29,405.6 30,405.1 31,404.5 32,403.8 33,403.1 34,402.6 35,402.2 36,401.9 37,401.8 38,401.9 39,402.1 40,403.0 41,404.5 42,405.9 43,407.5 44,409.0 45,410.4 46,411.6 47,412.7 48,413.7 49,414.6 50,415.3 51,415.6 52,415.5 53,415.2 54,414.7 55,414.1 56,413.8 57,413.7 58,413.7 59,413.9 60,414.2 61,414.6 62,415.3 63,416.2 64,417.2 65,418.7 66,420.5 67,422.0 68,423.3 69,424.3 70,425.1 71,425.8 72,426.2 73,426.7 74,427.3 75,427.9 76,428.6 77,429.2 78,429.7 79,430.1 80,430.6 81,431.0 82,431.5 83,432.0 84,432.6 85,433.2 86,433.8 87,434.7 88,435.9 89,437.2 90,438.7 91,440.4 92,442.2 93,443.9 94,445.5 95,446.9 96,448.2 97,449.2 98,450.0 99,450.5 100,450.8 101,451.0 102,451.1 103,451.1 104,451.1 105,451.1 106,451.1 107,451.1 108,450.2 109,447.9 110,444.4 111,440.8 112,437.1 113,433.6 114,430.5 115,427.8 116,425.7 117,424.3 118,423.5 119,423.3 120,423.5 121,423.9 122,424.4 123,425.0 124,425.7 125,426.4 126,427.1 127,428.0 128,429.0 129,430.2 130,433.4 131,437.0 132,441.0 133,445.0 134,448.5 135,451.7 136,454.2 137,456.1 138,457.6 139,458.8 140,459.4 141,459.4 142,459.1 143,458.4 144,457.4 145,456.1 146,454.7 147,452.9 148,450.9 149,448.7 150,446.6 151,444.5 152,442.8 153,441.5 154,440.5 155,439.8 156,439.2 157,438.7 158,438.3 159,438.0 160,437.8 161,437.5 162,437.1 163,436.7 164,436.2 165,436.1 166,436.4 167,436.9 168,437.4 169,437.8 170,437.9 171,437.9 172,438.1 173,438.4 174,438.8 175,439.3 176,439.9 177,440.5 178,441.2 179,441.9 180,442.9 181,444.1 182,445.4 183,446.8 184,448.2 185,449.6 186,451.3 187,453.4 188,455.7 189,458.2 190,461.0 191,464.0 192,467.3 193,470.1 194,471.8 195,472.8 196,473.2 197,472.5 198,471.0 199,468.9 200,466.3 201,463.4 202,460.4 203,457.1 204,453.8 205,452.3 206,452.2 207,453.3 208,455.2 209,457.8 210,460.9 211,463.2 212,464.9 213,466.0 214,466.8 215,467.1 216,467.0 217,466.6 218,466.1 219,465.6 220,465.1 221,464.7 222,464.9 223,465.6 224,466.7 225,466.3 226,464.6 227,461.9 228,458.1 229,452.9 230,446.7 231,441.0 232,435.7 233,430.8 234,426.1 235,422.2 236,418.9 237,416.1 238,413.9 239,412.3 240,411.2 241,410.5 242,409.9 243,409.4 244,409.0 245,408.6 246,408.2 247,408.0 248,407.8 249,407.6 250,407.5 251,407.8 252,408.5 253,409.5 254,410.9 255,412.4 256,413.9 257,415.4 258,416.8 259,418.1 260,419.3 261,420.3 262,421.2 263,422.4 264,424.1 265,426.4 266,429.1 267,432.0 268,435.1 269,438.3 270,441.6 271,444.1 272,446.0 273,447.6 274,448.8 275,449.4 276,449.5 277,449.4 278,449.0 279,448.4 280,447.8 281,447.1 282,446.7 283,446.6 284,446.7 285,445.6 286,443.7 287,441.2 288,438.0 289,434.5 290,430.7 291,427.5 292,424.9 293,422.8 294,421.0 295,419.8 296,419.3 297,419.2 298,419.3 299,419.5 300,419.8 301,419.7 302,419.4 303,418.9 304,418.3 305,417.3 306,416.0 307,414.5 308,413.2 309,412.5 310,412.3 311,412.5 312,412.8 313,413.3 314,413.9 315,414.6 316,415.0 317,415.1 318,415.1 319,415.0 320,414.7 321,414.4 322,413.9 323,413.5 324,413.1 325,412.7 326,412.3 327,411.8 328,411.2 329,410.5 330,409.7 331,409.2 332,409.0 333,408.9 334,408.9 335,409.0 336,409.3 337,409.6 338,410.1 339,410.6 340,411.1 341,410.9 342,410.1 343,409.0 344,407.8 345,406.5 346,405.8 347,405.5 348,405.6 349,405.9 350,406.5 351,407.4 352,408.4 353,409.9 354,412.1 355,414.8 356,418.0 357,421.4 358,424.5 359,427.0 360,428.9 361,430.4 362,431.8 363,433.1 364,434.3 365,435.4 366,436.5 367,437.6 368,438.6 369,439.5 370,440.2 371,440.7 372,441.0 373,441.0 374,440.4 375,439.4 376,437.8 377,435.8 378,434.0 379,432.8 380,432.1 381,431.8 382,431.6 383,431.6 384,431.6 385,431.7 386,431.8 387,432.0 388,432.1 389,432.3 390,432.5 391,432.9 392,433.4 393,434.0 394,434.7 395,435.4 396,436.8 397,438.6 398,440.6 399,442.5 400,444.3 401,446.0 402,447.0 403,447.4 404,447.4 405,447.0 406,446.5 407,445.8 408,444.9 409,444.0 410,443.0 411,442.3 412,441.8 413,441.5 414,441.4 415,440.9 416,440.2 417,439.4 418,438.3 419,436.9 420,435.3 421,433.5 422,432.1 423,431.1 424,430.4 425,429.9 426,429.6 427,429.3 428,429.1 429,428.9 430,428.7 431,428.4 432,428.1 433,428.0 434,428.0 435,428.2 436,428.5 437,428.8 438,429.2 439,429.7 440,430.2 441,430.7 442,431.1 443,431.4 444,431.8 445,432.1 446,432.4 447,432.7 448,433.0 449,433.3 450,433.5 451,433.8 452,433.9 453,434.0 454,434.1 455,434.2 456,434.3 457,434.5 458,434.7 459,434.8 460,435.0 461,435.1 462,435.2 463,435.1 464,435.0 465,434.9 466,434.8 467,434.8 468,434.7 469,434.7 470,434.6 471,434.7 472,434.7 473,434.8 474,435.0 475,435.2 476,435.6 477,436.3 478,436.9 479,437.1 480,437.0 481,436.8 482,436.4 483,435.9 484,435.4 485,434.8 486,434.2 487,433.6 488,432.9 489,432.3 490,431.7 491,431.0 492,430.2 493,429.0 494,427.0 495,424.5 496,421.5 497,419.4 498,418.2 499,417.6 500,417.5 501,417.4 502,417.5 503,417.6 504,417.7 505,418.0 506,418.4 507,418.8 508,419.1 509,419.0 510,418.6 511,418.0 512,417.7 513,417.7 514,417.9 515,418.2 516,419.2 517,420.6 518,422.1 519,423.4 520,424.6 521,425.7 522,426.6 523,427.3 524,428.0 525,428.5 526,429.0 527,429.2 528,429.2 529,429.1 530,428.8 531,428.4 532,428.3 533,428.4 534,428.7 535,429.2 536,429.4 537,429.6 538,429.6 539,429.6 540,429.7 541,429.9 542,430.1 543,430.4 544,430.8 545,431.2 546,431.6 547,432.0 548,432.4 549,432.9 550,433.6 551,434.4 552,435.4 553,436.5 554,437.8 555,439.3 556,440.9 557,442.5 558,444.0 559,444.8 560,445.3 561,445.4 562,445.2 563,444.9 564,444.5 565,444.0 566,443.4 567,442.8 568,442.2 569,441.6 570,441.6 571,441.9 572,443.0 573,444.6 574,446.5 575,448.8 576,451.5 577,454.5 578,457.0 579,458.5 580,459.2 581,459.3 582,459.0 583,458.6 584,458.0 585,457.2 586,456.2 587,455.0 588,453.6 589,452.2 590,450.5 591,448.6 592,446.4 593,444.0 594,441.4 595,437.6 596,433.1 597,429.1 598,425.5 599,422.3 600,419.8 601,418.0 602,416.6 603,415.7 604,415.0 605,414.6 606,414.4 607,414.4 608,414.5 609,414.7 610,415.1 611,415.5 612,415.4 613,414.9 614,414.2 615,413.1 616,413.1 617,413.8 618,414.9 619,415.9 620,416.8 621,417.7 622,418.4 623,419.0 624,419.6 625,420.0 626,420.5 627,420.9 628,421.4 629,421.8 630,422.3 631,422.8 632,422.6 633,421.7 634,420.5 635,418.9 636,417.6 637,416.5 638,415.6 639,414.8 640,414.2 641,413.9 642,413.6 643,413.5 644,413.4 645,413.5 646,413.7 647,413.9 648,414.2 649,414.5 650,414.6 651,414.6 652,414.3 653,414.0 654,413.5 655,413.2 656,412.9 657,412.7 658,412.6 659,412.4 660,412.5 661,412.7 662,413.0 663,413.5 664,414.0 665,414.7 666,415.4 667,416.2 668,417.0 669,417.9 670,418.8 671,419.7 672,420.7 673,421.6 674,422.6 675,423.6 676,424.5 677,425.5 678,426.4 679,427.2 680,427.8 681,428.3 682,428.8 683,429.2 684,429.5 685,429.8 686,430.1 687,430.4 688,430.7 689,430.9 690,431.1 691,431.2 692,431.2 693,431.0 694,430.8 695,430.5 696,430.1 697,429.7 698,429.1 699,428.6 700,427.9 701,427.3 702,426.6 703,425.9 704,425.2 705,424.5 706,423.9 707,423.2 708,422.6 709,422.1 710,421.5 711,421.7 712,422.5 713,423.9 714,425.7 715,427.9 716,430.0 717,431.9 718,433.6 719,435.0 720,436.2 721,437.2 722,438.0 723,438.8 724,439.4 725,439.9 726,440.3 727,440.8 728,441.3 729,441.7 730,442.2 731,442.6 732,443.0 733,443.4 734,443.8 735,444.5 736,445.3 737,445.8 738,445.7 739,445.1 740,444.3 741,443.3 742,442.3 743,441.3 744,440.2 745,439.0 746,438.0 747,437.0 748,436.1 749,435.2 750,434.3 751,433.7 752,433.3 753,433.0 754,432.8 755,432.8 756,432.8 757,433.0 758,433.2 759,433.5 760,433.8 761,434.2 762,434.6 763,435.0 764,435.4 765,435.9 766,436.2 767,436.5 768,436.7 769,437.1 770,438.0 771,439.4 772,441.1 773,443.0 774,445.0 775,446.8 776,447.8 777,448.3 778,448.4 779,448.1 780,447.3 781,446.3 782,444.9 783,443.4 784,441.8 785,440.3 786,438.9 787,437.6 788,436.4 789,435.3 790,434.5 791,434.0 792,433.8 793,433.7 794,433.8 795,434.2 796,435.0 797,435.9 798,436.8 799,437.6 800,438.3 801,439.0 802,439.4 803,439.6 804,439.7 805,439.6 806,439.4 807,439.1 808,438.7 809,438.3 810,438.7 811,439.6 812,440.8 813,442.2 814,443.7 815,444.7 816,444.6 817,443.7 818,442.5 819,441.3 820,440.0 821,438.8 822,437.5 823,436.3 824,435.0 825,433.8 826,432.6 827,431.3 828,430.1 829,429.0 830,428.1 831,427.2 832,426.0 833,424.6 834,423.0 835,421.3 836,419.8 837,418.5 838,417.4 839,416.4 840,415.6 841,415.1 842,414.8 843,414.8 844,415.0 845,415.2 846,415.9 847,416.9 848,418.0 849,419.4 850,420.9 851,422.9 852,425.2 853,427.9 854,430.9 855,434.5 856,438.7 857,443.1 858,447.7 859,452.3 860,457.0 861,460.7 862,463.6 863,465.8 864,467.5 865,468.7 866,469.5 867,469.9 868,470.3 869,470.5 870,469.4 871,467.4" fill="none" stroke="#c8c8c8" stroke-width="0.9"/>
<polyline points="12.5,400.1 14.0,400.9 15.5,402.6 17.0,401.7 18.5,403.5 20.0,402.9 21.5,405.5 23.0,406.4 24.5,408.3 26.0,406.8 27.5,406.0 29.0,404.3 30.5,402.5 32.0,401.4 33.5,400.1 35.0,400.6 36.5,401.5 38.0,402.3 39.5,404.4 41.0,410.7 42.5,412.0 44.0,414.2 45.5,415.7 47.0,416.4 48.5,417.2 50.0,417.8 51.5,417.0 53.0,414.0 54.5,412.6 56.0,413.0 57.5,414.7 59.0,414.4 60.5,415.3 62.0,419.0 63.5,419.4 65.0,423.8 66.5,427.5 68.0,428.9 69.5,427.5 71.0,426.7 72.5,428.4 74.0,429.0 75.5,430.4 77.0,431.5 78.5,431.7 80.0,432.2 81.5,432.7 83.0,434.6 84.5,435.7 86.0,436.0 87.5,438.8 89.0,442.4 90.5,445.5 92.0,447.9 93.5,450.2 95.0,452.6 96.5,452.8 98.0,452.3 99.5,452.2 101.0,451.7 102.5,451.4 104.0,449.9 105.5,452.0 107.0,451.1 108.5,442.9 110.0,432.5 111.5,426.2 113.0,421.2 114.5,419.4 116.0,419.8 117.5,419.8 119.0,423.4 120.5,426.1 122.0,425.7 123.5,427.3 125.0,429.2 126.5,429.4 128.0,432.7 129.5,440.2 131.0,450.5 132.5,458.3 134.0,460.0 135.5,464.3 137.0,463.3 138.5,463.4 140.0,461.6 141.5,457.8 143.0,455.1 144.5,452.0 146.0,450.6 147.5,444.8 149.0,440.9 150.5,437.9 152.0,437.3 153.5,437.3 155.0,437.1 156.5,436.3 158.0,435.3 159.5,437.1 161.0,436.5 162.5,436.1 164.0,434.4 165.5,436.3 167.0,439.0 168.5,438.2 170.0,437.9 171.5,437.8 173.0,439.7 174.5,441.8 176.0,442.3 177.5,443.8 179.0,444.6 180.5,447.4 182.0,449.8 183.5,452.2 185.0,453.2 186.5,458.5 188.0,463.2 189.5,469.4 191.0,475.2 192.5,481.4 194.0,478.9 195.5,475.2 197.0,470.7 198.5,464.6 200.0,457.0 201.5,452.0 203.0,445.7 204.5,443.6 206.0,452.1 207.5,459.0 209.0,467.1 210.5,471.4 212.0,470.9 213.5,468.6 215.0,469.2 216.5,466.7 218.0,464.1 219.5,463.1 221.0,463.0 222.5,467.2 224.0,471.0 225.5,461.9 227.0,451.5 228.5,438.9 230.0,425.2 231.5,419.0 233.0,412.4 234.5,408.5 236.0,406.6 237.5,405.2 239.0,407.4 240.5,407.6 242.0,408.4 243.5,407.6 245.0,406.4 246.5,406.6 248.0,408.3 249.5,406.6 251.0,408.4 252.5,412.7 254.0,415.7 255.5,418.6 257.0,421.3 258.5,421.4 260.0,423.7 261.5,423.5 263.0,425.7 264.5,432.0 266.0,439.1 267.5,444.4 269.0,448.6 270.5,452.4 272.0,453.9 273.5,453.6 275.0,451.0 276.5,450.8 278.0,447.3 279.5,445.3 281.0,444.4 282.5,446.3 284.0,447.9 285.5,440.1 287.0,431.8 288.5,424.2 290.0,416.2 291.5,416.0 293.0,414.8 294.5,415.4 296.0,416.6 297.5,419.2 299.0,419.8 300.5,419.5 302.0,417.7 303.5,416.0 305.0,413.0 306.5,410.6 308.0,408.8 309.5,410.1 311.0,413.3 312.5,414.7 314.0,416.8 315.5,416.6 317.0,415.6 318.5,414.4 320.0,413.9 321.5,413.0 323.0,412.0 324.5,411.3 326.0,411.3 327.5,409.6 329.0,408.1 330.5,406.7 332.0,408.1 333.5,408.2 335.0,409.0 336.5,410.6 338.0,412.8 339.5,413.2 341.0,410.1 342.5,405.6 344.0,404.1 345.5,403.4 347.0,405.2 348.5,406.3 350.0,408.8 351.5,411.1 353.0,415.1 354.5,421.7 356.0,428.9 357.5,434.5 359.0,435.1 360.5,436.0 362.0,436.2 363.5,438.4 365.0,438.8 366.5,440.6 368.0,442.3 369.5,442.3 371.0,442.0 372.5,443.4 374.0,437.9 375.5,433.6 377.0,428.4 378.5,428.1 380.0,429.7 381.5,431.5 383.0,431.8 384.5,431.6 386.0,432.0 387.5,431.8 389.0,432.2 390.5,433.3 392.0,435.6 393.5,436.6 395.0,438.5 396.5,443.9 398.0,447.6 399.5,451.0 401.0,451.7 402.5,449.3 404.0,447.1 405.5,445.8 407.0,443.2 408.5,441.0 410.0,439.7 411.5,440.6 413.0,440.4 414.5,439.9 416.0,438.5 417.5,436.3 419.0,432.5 420.5,427.8 422.0,427.5 423.5,428.0 425.0,427.2 426.5,428.9 428.0,428.3 429.5,427.9 431.0,428.8 432.5,427.1 434.0,427.7 435.5,429.1 437.0,430.4 438.5,431.5 440.0,432.0 441.5,431.9 443.0,432.4 444.5,432.7 446.0,432.9 447.5,433.9 449.0,434.0 450.5,434.5 452.0,434.0 453.5,434.0 455.0,434.4 456.5,434.7 458.0,435.9 459.5,435.1 461.0,435.6 462.5,435.1 464.0,434.0 465.5,434.9 467.0,434.6 468.5,433.3 470.0,434.8 471.5,435.4 473.0,434.8 474.5,436.6 476.0,437.3 477.5,438.9 479.0,438.2 480.5,436.1 482.0,434.2 483.5,432.7 485.0,432.9 486.5,431.3 488.0,431.1 489.5,430.0 491.0,428.2 492.5,426.7 494.0,421.0 495.5,414.0 497.0,412.7 498.5,414.5 500.0,416.4 501.5,417.3 503.0,418.9 504.5,418.9 506.0,419.5 507.5,420.1 509.0,418.7 510.5,416.0 512.0,416.7 513.5,418.5 515.0,420.1 516.5,424.1 518.0,427.2 519.5,428.6 521.0,430.5 522.5,430.1 524.0,429.5 525.5,431.5 527.0,430.1 528.5,430.8 530.0,427.5 531.5,427.4 533.0,428.7 534.5,430.5 536.0,430.1 537.5,429.1 539.0,428.4 540.5,430.2 542.0,430.7 543.5,431.4 545.0,433.7 546.5,433.7 548.0,434.6 549.5,434.9 551.0,437.5 552.5,439.4 554.0,442.4 555.5,445.9 557.0,448.8 558.5,448.6 560.0,446.9 561.5,444.5 563.0,443.5 564.5,442.7 566.0,441.2 567.5,440.0 569.0,439.7 570.5,441.8 572.0,446.3 573.5,452.3 575.0,456.8 576.5,463.8 578.0,466.2 579.5,463.2 581.0,460.1 582.5,456.4 584.0,455.7 585.5,452.8 587.0,450.5 588.5,447.9 590.0,445.2 591.5,440.3 593.0,436.2 594.5,428.0 596.0,417.0 597.5,413.9 599.0,411.3 600.5,411.3 602.0,411.5 603.5,412.3 605.0,412.5 606.5,414.7 608.0,415.3 609.5,416.2 611.0,417.2 612.5,413.9 614.0,411.1 615.5,411.7 617.0,416.1 618.5,418.5 620.0,420.9 621.5,421.7 623.0,421.4 624.5,421.9 626.0,422.1 627.5,423.5 629.0,423.3 630.5,424.3 632.0,422.0 633.5,418.3 635.0,413.1 636.5,412.9 638.0,412.0 639.5,411.8 641.0,412.1 642.5,412.9 644.0,413.7 645.5,413.6 647.0,414.4 648.5,415.3 650.0,415.2 651.5,414.3 653.0,412.1 654.5,412.2 656.0,411.4 657.5,412.4 659.0,411.5 660.5,412.5 662.0,413.7 663.5,415.5 665.0,416.4 666.5,418.6 668.0,420.1 669.5,421.5 671.0,423.1 672.5,425.0 674.0,425.6 675.5,427.5 677.0,429.0 678.5,428.6 680.0,430.2 681.5,429.8 683.0,430.2 684.5,430.6 686.0,431.2 687.5,431.7 689.0,432.1 690.5,431.4 692.0,431.4 693.5,430.5 695.0,429.3 696.5,428.4 698.0,427.7 699.5,426.4 701.0,425.4 702.5,423.9 704.0,423.4 705.5,423.0 707.0,421.3 708.5,419.4 710.0,420.5 711.5,423.7 713.0,428.0 714.5,432.7 716.0,437.5 717.5,440.1 719.0,440.6 720.5,440.4 722.0,441.8 723.5,441.3 725.0,441.4 726.5,442.3 728.0,443.0 729.5,443.6 731.0,444.3 732.5,443.4 734.0,446.2 735.5,447.3 737.0,447.6 738.5,443.8 740.0,441.3 741.5,439.3 743.0,436.6 744.5,435.8 746.0,434.6 747.5,432.5 749.0,430.8 750.5,431.0 752.0,431.3 753.5,432.2 755.0,432.5 756.5,434.1 758.0,434.4 759.5,434.6 761.0,435.6 762.5,434.7 764.0,436.5 765.5,437.0 767.0,437.4 768.5,437.7 770.0,441.4 771.5,446.2 773.0,449.3 774.5,453.9 776.0,451.5 777.5,449.3 779.0,447.1 780.5,443.4 782.0,440.3 783.5,436.8 785.0,435.6 786.5,433.4 788.0,432.2 789.5,433.1 791.0,432.7 792.5,433.4 794.0,434.8 795.5,436.1 797.0,439.6 798.5,440.7 800.0,441.1 801.5,441.7 803.0,440.8 804.5,440.3 806.0,438.5 807.5,437.7 809.0,436.7 810.5,442.2 812.0,445.3 813.5,447.4 815.0,448.2 816.5,441.9 818.0,438.7 819.5,436.1 821.0,433.2 822.5,432.3 824.0,431.2 825.5,428.9 827.0,426.5 828.5,425.9 830.0,424.9 831.5,424.0 833.0,420.2 834.5,416.4 836.0,414.1 837.5,413.9 839.0,413.2 840.5,412.9 842.0,414.2 843.5,414.5 845.0,416.6 846.5,419.3 848.0,422.4 849.5,425.2 851.0,429.8 852.5,435.6 854.0,441.9 855.5,450.3 857.0,458.9 858.5,465.8 860.0,474.0 861.5,473.8 863.0,473.0 864.5,473.9 866.0,471.8 867.5,471.3 869.0,470.4 870.5,461.9" fill="none" stroke="#e8901a" stroke-width="1" stroke-linejoin="round"/>
<line x1="36.25" y1="394.5" x2="66.25" y2="409.5" stroke="#d0d0d0" stroke-width="1"/>
<line x1="192.5" y1="485" x2="235" y2="470.75" stroke="#d0d0d0" stroke-width="1"/>
<line x1="270" y1="457.5" x2="287.5" y2="447" stroke="#d0d0d0" stroke-width="1"/>
<line x1="396.25" y1="455.75" x2="482.5" y2="440.75" stroke="#d0d0d0" stroke-width="1"/>
<line x1="612.5" y1="406.5" x2="719.5" y2="418.25" stroke="#d0d0d0" stroke-width="1"/>
<text x="17" y="402.82" font-family="Liberation Sans" font-size="7" fill="#d8d8d8" text-anchor="start" font-weight="bold" textLength="13.7" lengthAdjust="spacingAndGlyphs">PPO</text>
<text x="40" y="402.82" font-family="Liberation Sans" font-size="7" fill="#c8c8c8" text-anchor="start" font-weight="normal" textLength="81.2" lengthAdjust="spacingAndGlyphs">(12, 26, 9 - EMA, EMA, EMA)</text>
<path d="M124.5,400 L127,398 L129,402 L125.5,403 Z" fill="#6aa0d8"/>
<line x1="137" y1="400.5" x2="147" y2="400.5" stroke="#e89018" stroke-width="1.5"/>
<rect x="149" y="398.2" width="4.3" height="4.3" fill="#2a6ad0"/>
<path d="M149.9,400.4 L150.9,401.5 L152.6,399" stroke="#fff" stroke-width="0.8" fill="none"/>
<line x1="156.3" y1="400.5" x2="166" y2="400.5" stroke="#e8e8e8" stroke-width="1.2"/>
<text x="168" y="402.82" font-family="Liberation Sans" font-size="7" fill="#c8c8c8" text-anchor="start" font-weight="normal" textLength="9" lengthAdjust="spacingAndGlyphs">MA</text>
<rect x="179.5" y="398.2" width="4.3" height="4.3" fill="#2a6ad0"/>
<path d="M180.4,400.4 L181.4,401.5 L183.1,399" stroke="#fff" stroke-width="0.8" fill="none"/>
<line x1="187.3" y1="400.5" x2="196.5" y2="400.5" stroke="#8a8a8a" stroke-width="0.8"/>
<text x="199" y="402.82" font-family="Liberation Sans" font-size="7" fill="#c8c8c8" text-anchor="start" font-weight="normal" textLength="17.5" lengthAdjust="spacingAndGlyphs">OsMA</text>
<rect x="219.5" y="398.2" width="4.3" height="4.3" fill="#2a6ad0"/>
<path d="M220.4,400.4 L221.4,401.5 L223.1,399" stroke="#fff" stroke-width="0.8" fill="none"/>
<text x="926.5" y="409.99" font-family="Liberation Sans" font-size="8.3" fill="#111" text-anchor="start" font-weight="normal" textLength="15" lengthAdjust="spacingAndGlyphs">0.50</text>
<text x="926.5" y="422.49" font-family="Liberation Sans" font-size="8.3" fill="#111" text-anchor="start" font-weight="normal" textLength="15" lengthAdjust="spacingAndGlyphs">0.25</text>
<text x="926.5" y="434.99" font-family="Liberation Sans" font-size="8.3" fill="#111" text-anchor="start" font-weight="normal" textLength="15" lengthAdjust="spacingAndGlyphs">0.00</text>
<text x="925.5" y="447.49" font-family="Liberation Sans" font-size="8.3" fill="#111" text-anchor="start" font-weight="normal" textLength="18.3" lengthAdjust="spacingAndGlyphs">-0.25</text>
<text x="925.5" y="459.99" font-family="Liberation Sans" font-size="8.3" fill="#111" text-anchor="start" font-weight="normal" textLength="18.3" lengthAdjust="spacingAndGlyphs">-0.50</text>
<text x="925.5" y="472.49" font-family="Liberation Sans" font-size="8.3" fill="#111" text-anchor="start" font-weight="normal" textLength="18.3" lengthAdjust="spacingAndGlyphs">-0.75</text>
<rect x="12" y="485" width="948" height="16.5" fill="#5a5b5d"/>
<rect x="12" y="485.3" width="948" height="1" fill="#666768"/>
<text x="58" y="495.81" font-family="Liberation Sans" font-size="7.8" fill="#101010" text-anchor="middle" font-weight="normal">Mar 15</text>
<rect x="57.5" y="485" width="1" height="1" fill="#8a8a8a"/>
<text x="97.5" y="495.81" font-family="Liberation Sans" font-size="7.8" fill="#101010" text-anchor="middle" font-weight="normal">Mar 17</text>
<rect x="97.0" y="485" width="1" height="1" fill="#8a8a8a"/>
<text x="137" y="495.81" font-family="Liberation Sans" font-size="7.8" fill="#101010" text-anchor="middle" font-weight="normal">Mar 19</text>
<rect x="136.5" y="485" width="1" height="1" fill="#8a8a8a"/>
<text x="176.5" y="495.81" font-family="Liberation Sans" font-size="7.8" fill="#101010" text-anchor="middle" font-weight="normal">Mar 23</text>
<rect x="176.0" y="485" width="1" height="1" fill="#8a8a8a"/>
<text x="216" y="495.81" font-family="Liberation Sans" font-size="7.8" fill="#101010" text-anchor="middle" font-weight="normal">Mar 25</text>
<rect x="215.5" y="485" width="1" height="1" fill="#8a8a8a"/>
<text x="255.9" y="495.81" font-family="Liberation Sans" font-size="7.8" fill="#101010" text-anchor="middle" font-weight="normal">Mar 29</text>
<rect x="255.4" y="485" width="1" height="1" fill="#8a8a8a"/>
<text x="295.4" y="495.81" font-family="Liberation Sans" font-size="7.8" fill="#101010" text-anchor="middle" font-weight="normal">Mar 31</text>
<rect x="294.9" y="485" width="1" height="1" fill="#8a8a8a"/>
<text x="335" y="495.81" font-family="Liberation Sans" font-size="7.8" fill="#101010" text-anchor="middle" font-weight="normal">Apr 2</text>
<rect x="334.5" y="485" width="1" height="1" fill="#8a8a8a"/>
<text x="367.9" y="495.81" font-family="Liberation Sans" font-size="7.8" fill="#101010" text-anchor="middle" font-weight="normal">Apr 6</text>
<rect x="367.4" y="485" width="1" height="1" fill="#8a8a8a"/>
<text x="407.3" y="495.81" font-family="Liberation Sans" font-size="7.8" fill="#101010" text-anchor="middle" font-weight="normal">Apr 8</text>
<rect x="406.8" y="485" width="1" height="1" fill="#8a8a8a"/>
<text x="446.9" y="495.81" font-family="Liberation Sans" font-size="7.8" fill="#101010" text-anchor="middle" font-weight="normal">Apr 12</text>
<rect x="446.4" y="485" width="1" height="1" fill="#8a8a8a"/>
<text x="486.5" y="495.81" font-family="Liberation Sans" font-size="7.8" fill="#101010" text-anchor="middle" font-weight="normal">Apr 14</text>
<rect x="486.0" y="485" width="1" height="1" fill="#8a8a8a"/>
<text x="526" y="495.81" font-family="Liberation Sans" font-size="7.8" fill="#101010" text-anchor="middle" font-weight="normal">Apr 16</text>
<rect x="525.5" y="485" width="1" height="1" fill="#8a8a8a"/>
<text x="565.6" y="495.81" font-family="Liberation Sans" font-size="7.8" fill="#101010" text-anchor="middle" font-weight="normal">Apr 20</text>
<rect x="565.1" y="485" width="1" height="1" fill="#8a8a8a"/>
<text x="605" y="495.81" font-family="Liberation Sans" font-size="7.8" fill="#101010" text-anchor="middle" font-weight="normal">Apr 22</text>
<rect x="604.5" y="485" width="1" height="1" fill="#8a8a8a"/>
<text x="644.75" y="495.81" font-family="Liberation Sans" font-size="7.8" fill="#101010" text-anchor="middle" font-weight="normal">Apr 26</text>
<rect x="644.25" y="485" width="1" height="1" fill="#8a8a8a"/>
<text x="684.4" y="495.81" font-family="Liberation Sans" font-size="7.8" fill="#101010" text-anchor="middle" font-weight="normal">Apr 28</text>
<rect x="683.9" y="485" width="1" height="1" fill="#8a8a8a"/>
<text x="723.75" y="495.81" font-family="Liberation Sans" font-size="7.8" fill="#101010" text-anchor="middle" font-weight="normal">Apr 30</text>
<rect x="723.25" y="485" width="1" height="1" fill="#8a8a8a"/>
<text x="763" y="495.81" font-family="Liberation Sans" font-size="7.8" fill="#101010" text-anchor="middle" font-weight="normal">May 4</text>
<rect x="762.5" y="485" width="1" height="1" fill="#8a8a8a"/>
<text x="803" y="495.81" font-family="Liberation Sans" font-size="7.8" fill="#101010" text-anchor="middle" font-weight="normal">May 6</text>
<rect x="802.5" y="485" width="1" height="1" fill="#8a8a8a"/>
<text x="842.25" y="495.81" font-family="Liberation Sans" font-size="7.8" fill="#101010" text-anchor="middle" font-weight="normal">May 10</text>
<rect x="841.75" y="485" width="1" height="1" fill="#8a8a8a"/>
<line x1="876.3" y1="485" x2="876.3" y2="497.5" stroke="#888" stroke-width="1"/>
<path d="M878.75,490.5 L880.3,492.5 L878.75,494.5 L877.2,492.5 Z" fill="#999"/>
<rect x="0" y="501" width="960" height="9.5" fill="#5a5b5d"/>
<rect x="9" y="502" width="940" height="8" fill="#1a1a1a"/>
<rect x="809" y="502" width="140" height="8" fill="#2c2c2c"/>
<rect x="1.3" y="502" width="7.6" height="8" fill="#b8b8b8"/>
<path d="M7,502.8 L7,509.2 L2.8,506 Z" fill="#0c1a40"/>
<rect x="949" y="502" width="9" height="8" fill="#b8b8b8"/>
<path d="M951.5,502.8 L951.5,509.2 L956,506 Z" fill="#0c1a40"/>
<text x="10.5" y="508.79" font-family="Liberation Serif" font-size="7.2" fill="#8c8c8c" text-anchor="start" font-weight="normal" textLength="20.5" lengthAdjust="spacingAndGlyphs">Mar '20</text>
<text x="156" y="508.79" font-family="Liberation Serif" font-size="7.2" fill="#8c8c8c" text-anchor="start" font-weight="normal" textLength="20.5" lengthAdjust="spacingAndGlyphs">May '20</text>
<text x="300" y="508.79" font-family="Liberation Serif" font-size="7.2" fill="#8c8c8c" text-anchor="start" font-weight="normal" textLength="20.5" lengthAdjust="spacingAndGlyphs">Aug '20</text>
<text x="444" y="508.79" font-family="Liberation Serif" font-size="7.2" fill="#8c8c8c" text-anchor="start" font-weight="normal" textLength="20" lengthAdjust="spacingAndGlyphs">Oct '20</text>
<text x="587.5" y="508.79" font-family="Liberation Serif" font-size="7.2" fill="#8c8c8c" text-anchor="start" font-weight="normal" textLength="20" lengthAdjust="spacingAndGlyphs">Dec '20</text>
<text x="730" y="508.79" font-family="Liberation Serif" font-size="7.2" fill="#8c8c8c" text-anchor="start" font-weight="normal" textLength="20" lengthAdjust="spacingAndGlyphs">Feb '21</text>
<text x="869" y="508.79" font-family="Liberation Serif" font-size="7.2" fill="#8c8c8c" text-anchor="start" font-weight="normal" textLength="20.5" lengthAdjust="spacingAndGlyphs">Apr '21</text>
<rect x="807.8" y="501.8" width="1.6" height="8.4" fill="#d0d0d0"/>
<rect x="947.8" y="501.8" width="1.4" height="8.4" fill="#d0d0d0"/>
<rect x="0" y="510.5" width="960" height="9" fill="#5d5e62"/>
<rect x="0" y="516" width="960" height="3.3" fill="#66676b"/>
<rect x="0" y="519.3" width="960" height="11.3" fill="#707175"/>
<rect x="0" y="530.6" width="960" height="8.9" fill="#48494b"/>
<rect x="0" y="498" width="1" height="41" fill="#000"/>
<circle cx="6.5" cy="515.2" r="3.3" fill="#3a3a3a"/>
<path d="M4.8,514 L8.2,514 L6.5,516.6 Z" fill="#fff"/>
<text x="12.3" y="518.01" font-family="Liberation Sans" font-size="7.8" fill="#e8eef4" text-anchor="start" font-weight="normal" textLength="43.2" lengthAdjust="spacingAndGlyphs">Quote Panel</text>
<line x1="57" y1="515.1" x2="940.5" y2="515.1" stroke="#9c9da0" stroke-width="1.8"/>
<circle cx="944.5" cy="514.5" r="2.4" fill="none" stroke="#b8c0c8" stroke-width="1.2"/>
<line x1="946.2" y1="516.2" x2="948" y2="518" stroke="#b8c0c8" stroke-width="1.2"/>
<path d="M952,512.5 L956.5,517.5 M956.5,512.5 L952,517.5" stroke="#b03030" stroke-width="1.2"/>
<text x="79" y="528.31" font-family="Liberation Sans" font-size="7.8" fill="#f0f0f0" text-anchor="middle" font-weight="normal" textLength="70" lengthAdjust="spacingAndGlyphs">Financial Instrument</text>
<text x="208.25" y="528.31" font-family="Liberation Sans" font-size="7.8" fill="#f0f0f0" text-anchor="middle" font-weight="normal" textLength="26.5" lengthAdjust="spacingAndGlyphs">Bid Size</text>
<text x="319.4" y="528.31" font-family="Liberation Sans" font-size="7.8" fill="#f0f0f0" text-anchor="middle" font-weight="normal" textLength="11.3" lengthAdjust="spacingAndGlyphs">Bid</text>
<text x="435.75" y="528.31" font-family="Liberation Sans" font-size="7.8" fill="#f0f0f0" text-anchor="middle" font-weight="normal" textLength="13.5" lengthAdjust="spacingAndGlyphs">Ask</text>
<text x="547.5" y="528.31" font-family="Liberation Sans" font-size="7.8" fill="#f0f0f0" text-anchor="middle" font-weight="normal" textLength="30" lengthAdjust="spacingAndGlyphs">Ask Size</text>
<text x="658.5" y="528.31" font-family="Liberation Sans" font-size="7.8" fill="#f0f0f0" text-anchor="middle" font-weight="normal" textLength="15" lengthAdjust="spacingAndGlyphs">Last</text>
<text x="769.25" y="528.31" font-family="Liberation Sans" font-size="7.8" fill="#f0f0f0" text-anchor="middle" font-weight="normal" textLength="28.5" lengthAdjust="spacingAndGlyphs">Change</text>
<text x="890.5" y="528.31" font-family="Liberation Sans" font-size="7.8" fill="#f0f0f0" text-anchor="middle" font-weight="normal" textLength="36" lengthAdjust="spacingAndGlyphs">Change %</text>
<rect x="3" y="530.6" width="152" height="8.9" fill="#dddcc3"/>
<text x="3.8" y="538.95" font-family="Liberation Sans" font-size="8.2" fill="#303030" text-anchor="start" font-weight="normal" textLength="14.3" lengthAdjust="spacingAndGlyphs">RTY</text>
<text x="21" y="538.46" font-family="Liberation Sans" font-size="6" fill="#404040" text-anchor="start" font-weight="normal" textLength="5.5" lengthAdjust="spacingAndGlyphs">∞</text>
<text x="29" y="538.72" font-family="Liberation Sans" font-size="7" fill="#303030" text-anchor="start" font-weight="normal" textLength="62.5" lengthAdjust="spacingAndGlyphs">Jun18'21 @GLOBEX</text>
<text x="259.5" y="538.31" font-family="Liberation Sans" font-size="7.8" fill="#22c022" text-anchor="end" font-weight="normal">4</text>
<text x="375.5" y="538.31" font-family="Liberation Sans" font-size="7.8" fill="#22c022" text-anchor="end" font-weight="normal" textLength="28.5" lengthAdjust="spacingAndGlyphs">2203.00</text>
<text x="491" y="538.31" font-family="Liberation Sans" font-size="7.8" fill="#22c022" text-anchor="end" font-weight="normal" textLength="28.5" lengthAdjust="spacingAndGlyphs">2203.20</text>
<text x="495" y="538.31" font-family="Liberation Sans" font-size="7.8" fill="#e0883a" text-anchor="start" font-weight="normal">3</text>
<text x="714" y="538.31" font-family="Liberation Sans" font-size="7.8" fill="#22c022" text-anchor="end" font-weight="normal" textLength="28.5" lengthAdjust="spacingAndGlyphs">2203.20</text>
<rect x="716" y="530.6" width="241" height="8.9" fill="#d84848"/>
<text x="821.5" y="538.31" font-family="Liberation Sans" font-size="7.8" fill="#fff" text-anchor="end" font-weight="normal" textLength="17.5" lengthAdjust="spacingAndGlyphs">-6.40</text>
<text x="956" y="538.31" font-family="Liberation Sans" font-size="7.8" fill="#fff" text-anchor="end" font-weight="normal" textLength="24.5" lengthAdjust="spacingAndGlyphs">-0.29%</text>
<rect x="580" y="539.5" width="45" height="1.5" fill="#4a3a30"/>
<rect x="0" y="539.5" width="960" height="3" fill="#282828"/>
<rect x="0" y="542.5" width="960" height="14.5" fill="#2a3037"/>
<text x="3" y="552.38" font-family="Liberation Sans" font-size="6.6" fill="#e8e8e8" text-anchor="start" font-weight="normal" textLength="64.5" lengthAdjust="spacingAndGlyphs">11:54:32 AM 5/11/2021</text>
<path d="M734.7,227.5 H832.3 A5.5,5.5 0 0 1 837.8,233.0 V245.7 L860,225.5 L837.8,290.5 V364.1 A5.5,5.5 0 0 1 832.3,369.6 H734.7 A5.5,5.5 0 0 1 729.2,364.1 V233.0 A5.5,5.5 0 0 1 734.7,227.5 Z" fill="#0b2757" stroke="#d0d0d0" stroke-width="1"/>
<text x="783.6" y="243.39" font-family="Liberation Sans" font-size="10.8" fill="#ffffff" text-anchor="middle" font-weight="normal" stroke="#ffffff" stroke-width="0.25">/RTY hit &amp; bounced</text>
<text x="783.6" y="256.56" font-family="Liberation Sans" font-size="10.8" fill="#ffffff" text-anchor="middle" font-weight="normal" stroke="#ffffff" stroke-width="0.25">off the 2159 support</text>
<text x="783.6" y="269.73" font-family="Liberation Sans" font-size="10.8" fill="#ffffff" text-anchor="middle" font-weight="normal" stroke="#ffffff" stroke-width="0.25">earlier &amp; has now</text>
<text x="783.6" y="282.90" font-family="Liberation Sans" font-size="10.8" fill="#ffffff" text-anchor="middle" font-weight="normal" stroke="#ffffff" stroke-width="0.25">bounced back to the</text>
<text x="783.6" y="296.07" font-family="Liberation Sans" font-size="10.8" fill="#ffffff" text-anchor="middle" font-weight="normal" stroke="#ffffff" stroke-width="0.25">2204 R level offering</text>
<text x="783.6" y="309.24" font-family="Liberation Sans" font-size="10.8" fill="#ffffff" text-anchor="middle" font-weight="normal" stroke="#ffffff" stroke-width="0.25">an objective re-entry</text>
<text x="783.6" y="322.41" font-family="Liberation Sans" font-size="10.8" fill="#ffffff" text-anchor="middle" font-weight="normal" stroke="#ffffff" stroke-width="0.25">or new short here</text>
<text x="783.6" y="335.58" font-family="Liberation Sans" font-size="10.8" fill="#ffffff" text-anchor="middle" font-weight="normal" stroke="#ffffff" stroke-width="0.25">and/or on any more</text>
<text x="783.6" y="348.75" font-family="Liberation Sans" font-size="10.8" fill="#ffffff" text-anchor="middle" font-weight="normal" stroke="#ffffff" stroke-width="0.25">upside to the 2222 R</text>
<text x="783.6" y="361.92" font-family="Liberation Sans" font-size="10.8" fill="#ffffff" text-anchor="middle" font-weight="normal" stroke="#ffffff" stroke-width="0.25">level</text>
</svg></body></html>
